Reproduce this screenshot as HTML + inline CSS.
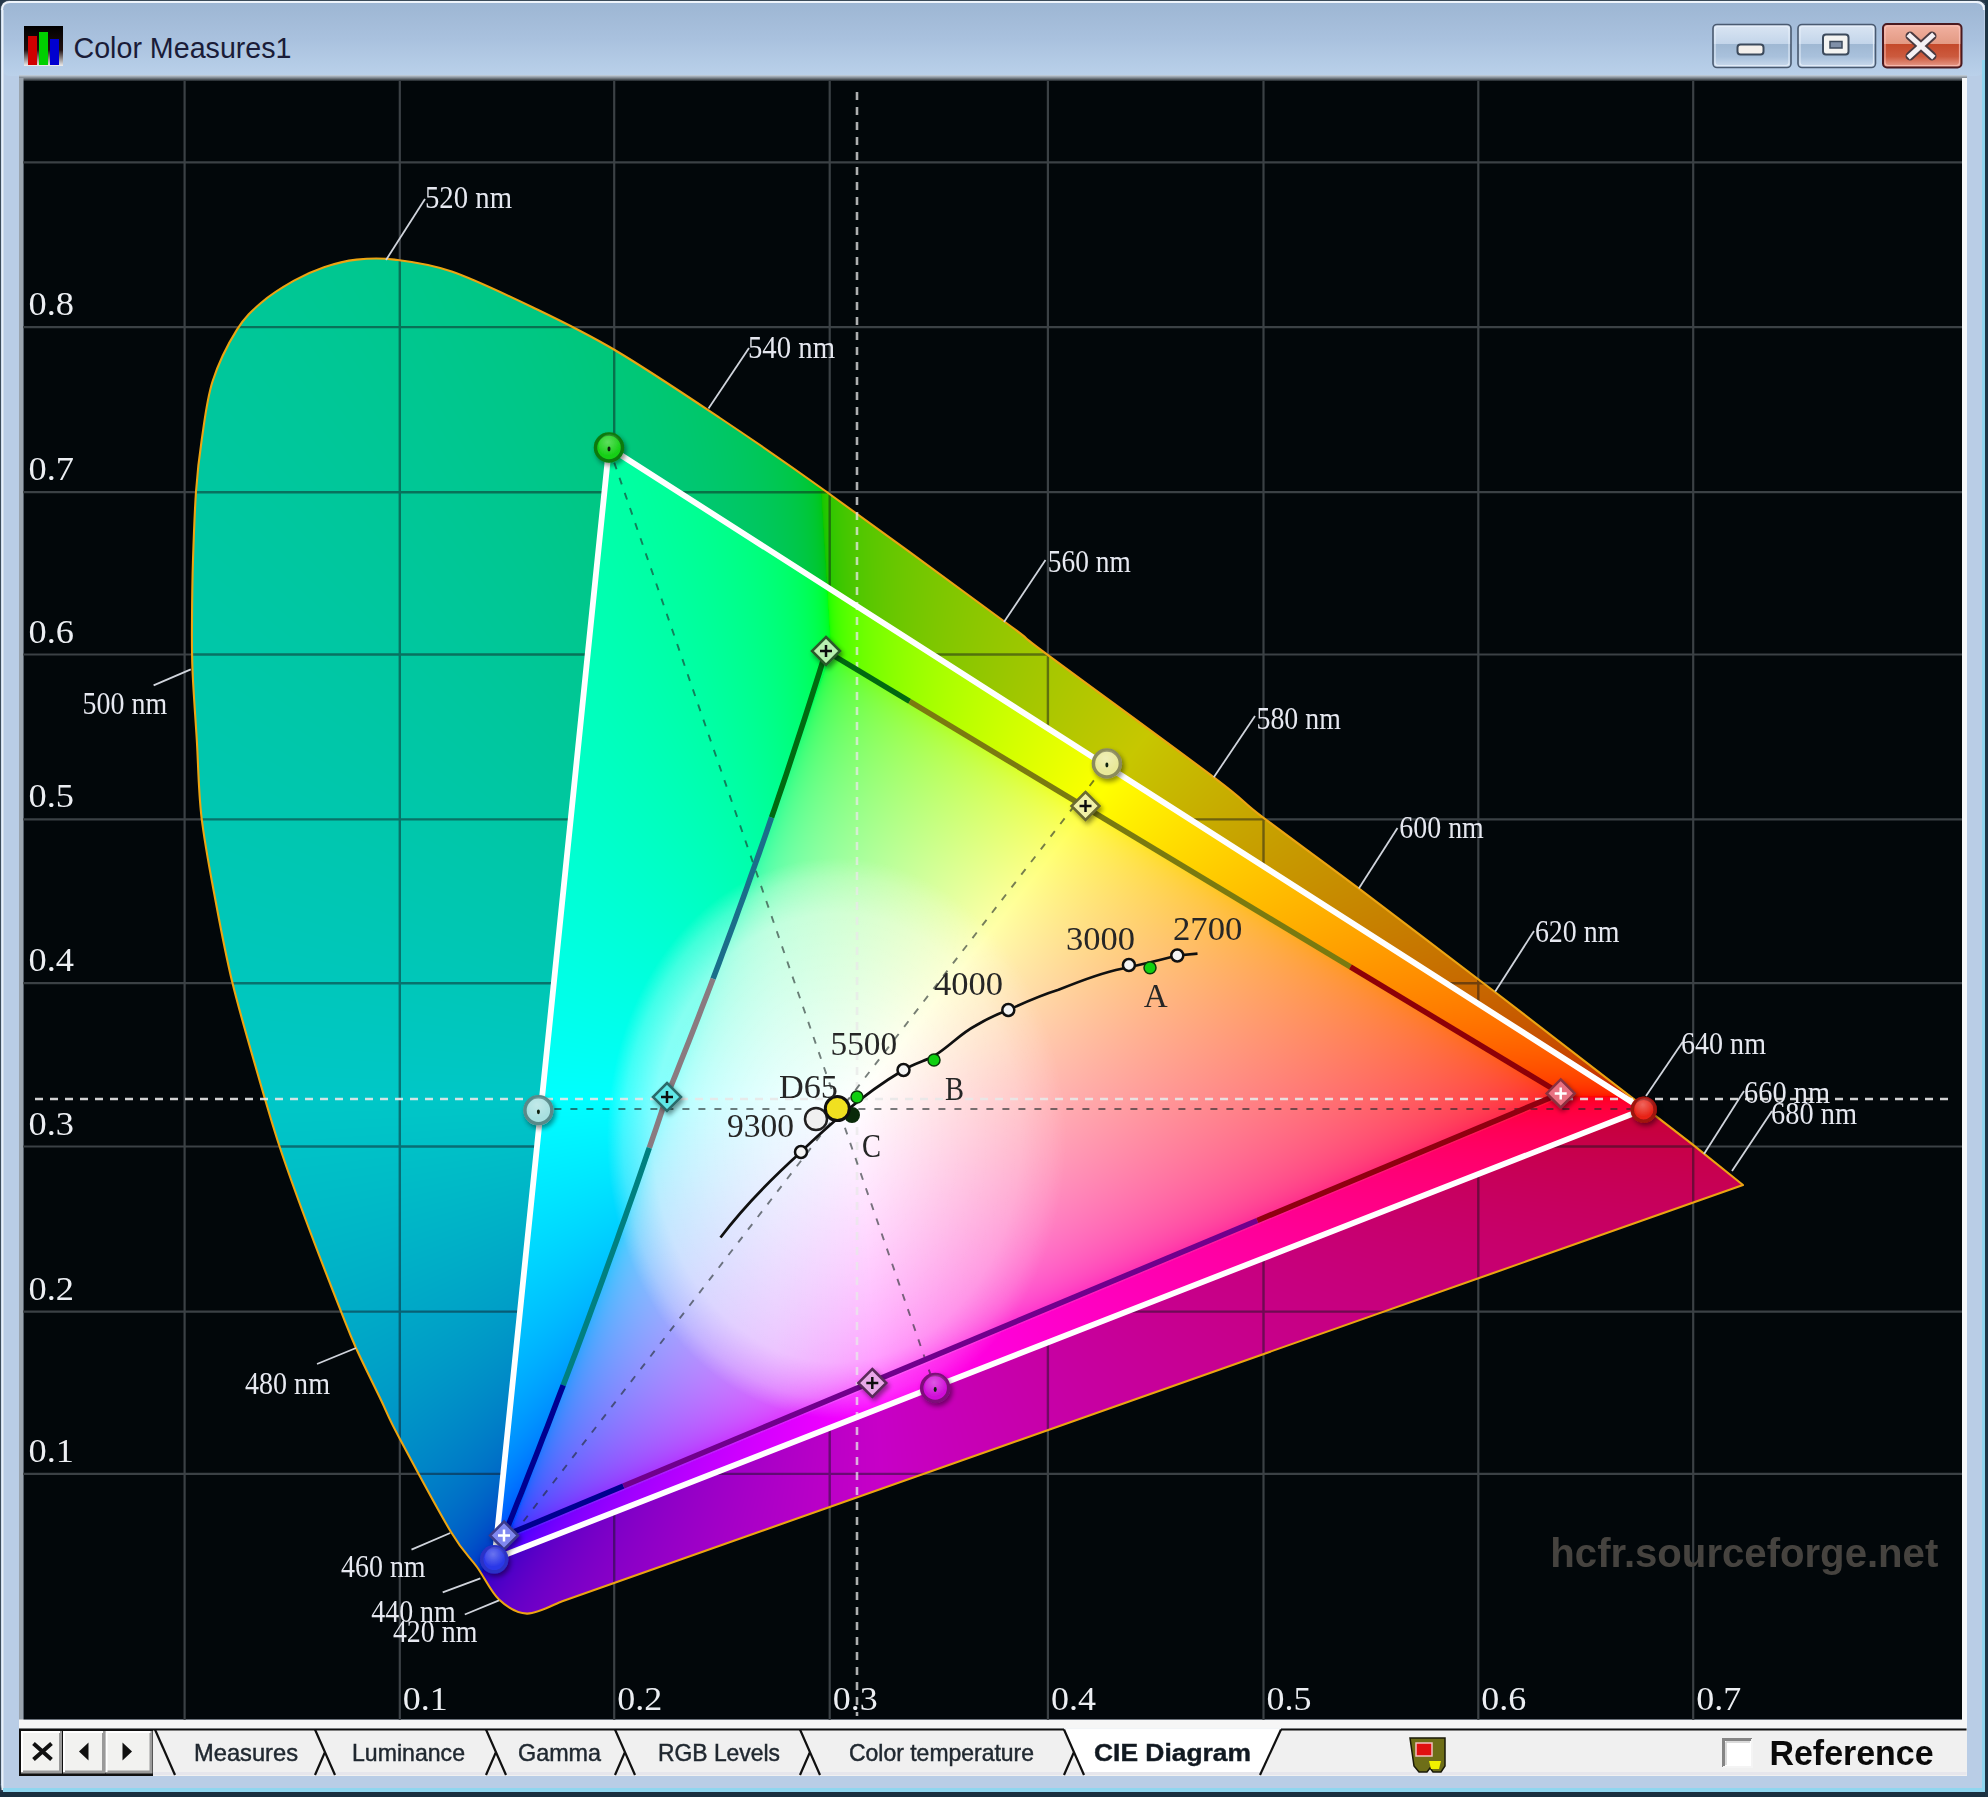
<!DOCTYPE html>
<html><head><meta charset="utf-8">
<style>
html,body{margin:0;padding:0;width:1988px;height:1797px;overflow:hidden;background:#2a3a48;}
#win{position:absolute;left:0;top:0;width:1988px;height:1797px;}
.abs{position:absolute;left:0;top:0;}
svg text{font-family:"Liberation Serif",serif;}
</style></head><body>
<div id="win">
<svg class="abs" width="1988" height="1797" viewBox="0 0 1988 1797">
  <defs>
    <linearGradient id="tb" x1="0" y1="0" x2="0" y2="1">
      <stop offset="0" stop-color="#9db6d3"/><stop offset="0.5" stop-color="#a9c1de"/><stop offset="1" stop-color="#bad1ea"/>
    </linearGradient>
    <linearGradient id="bev" x1="0" y1="0" x2="0" y2="1">
      <stop offset="0" stop-color="#c8d4e0"/><stop offset="0.5" stop-color="#7c848c"/><stop offset="1" stop-color="#20262a"/>
    </linearGradient>
    <linearGradient id="btn" x1="0" y1="0" x2="0" y2="1">
      <stop offset="0" stop-color="#dbe6f3"/><stop offset="0.45" stop-color="#c3d5ea"/><stop offset="0.46" stop-color="#9fb8d3"/><stop offset="0.75" stop-color="#a9c1dc"/><stop offset="1" stop-color="#cddcee"/>
    </linearGradient>
    <linearGradient id="cbtn" x1="0" y1="0" x2="0" y2="1">
      <stop offset="0" stop-color="#f2b2a2"/><stop offset="0.45" stop-color="#e39a84"/><stop offset="0.46" stop-color="#c4492a"/><stop offset="0.75" stop-color="#cc5a3e"/><stop offset="1" stop-color="#e8a090"/>
    </linearGradient>
    <linearGradient id="ico" x1="0" y1="0" x2="0" y2="1">
      <stop offset="0" stop-color="#000"/><stop offset="0.6" stop-color="#201010"/><stop offset="1" stop-color="#f0f0f0"/>
    </linearGradient>
  </defs>
  <!-- window frame -->
  <rect x="0" y="0" width="1988" height="1797" fill="#26384a"/>
  <rect x="0.5" y="0.5" width="1986" height="1793" rx="9" fill="#b9cde6" stroke="#3c4c5a"/>
  <rect x="2" y="2" width="1982" height="74" rx="8" fill="url(#tb)"/>
  <path d="M2,10 Q2,2 10,2 H1976 Q1984,2 1984,10" fill="none" stroke="#eef4fb" stroke-width="2"/>
  <rect x="1.5" y="10" width="2" height="1780" fill="#e8f0f8"/>
  <rect x="1982" y="60" width="3" height="1730" fill="#8fd6ef"/>
  <rect x="3" y="1788" width="1982" height="4" fill="#8fd6ef"/>
  <rect x="0" y="1792" width="1988" height="5" fill="#1a3040"/>
  <rect x="1985" y="0" width="3" height="1797" fill="#1e3444"/>
  <!-- icon -->
  <rect x="24" y="26" width="39" height="40" fill="url(#ico)"/>
  <rect x="28" y="36" width="9" height="29" fill="#d00000"/>
  <rect x="39" y="32" width="9" height="33" fill="#00d000"/>
  <rect x="50" y="39" width="9" height="26" fill="#0000d0"/>
  <text x="73.5" y="57.7" font-family="Liberation Sans" font-size="29.5" fill="#1a1c38" style="font-family:'Liberation Sans'" textLength="218" lengthAdjust="spacingAndGlyphs">Color Measures1</text>
  <!-- buttons -->
  <rect x="1713" y="24.5" width="78" height="43" rx="4" fill="url(#btn)" stroke="#4a5a70" stroke-width="1.6"/>
  <rect x="1715" y="26.5" width="74" height="39" rx="3" fill="none" stroke="#e8f0fa" stroke-width="1.2" opacity="0.8"/>
  <rect x="1737.5" y="44.5" width="26" height="10" rx="3" fill="#f4f0ec" stroke="#3c4a5c" stroke-width="2"/>
  <rect x="1798" y="24.5" width="77.5" height="43" rx="4" fill="url(#btn)" stroke="#4a5a70" stroke-width="1.6"/>
  <rect x="1800" y="26.5" width="73.5" height="39" rx="3" fill="none" stroke="#e8f0fa" stroke-width="1.2" opacity="0.8"/>
  <rect x="1823" y="34.5" width="25.5" height="20" rx="3" fill="#f4f4f2" stroke="#3c4a5c" stroke-width="2"/>
  <rect x="1830" y="41.5" width="12" height="6.5" fill="#8090a8" stroke="#3c4a5c" stroke-width="1.5"/>
  <rect x="1883" y="24" width="78.5" height="43.5" rx="4" fill="url(#cbtn)" stroke="#4a1a20" stroke-width="2"/>
  <rect x="1885" y="26" width="74.5" height="39.5" rx="3" fill="none" stroke="#ffc8c0" stroke-width="1.2" opacity="0.7"/>
  <path d="M1910,36 L1932,56 M1932,36 L1910,56" stroke="#4a3a40" stroke-width="9" stroke-linecap="round"/>
  <path d="M1910,36 L1932,56 M1932,36 L1910,56" stroke="#f4f0f4" stroke-width="5" stroke-linecap="square"/>
  <!-- plot bevel -->
  <rect x="19" y="75" width="1948" height="6" fill="url(#bev)"/>
  <rect x="19" y="78" width="4.5" height="1642" fill="#9aa4ae"/>
  <rect x="1962" y="78" width="5" height="1650" fill="#f6f8fa"/>
  <rect x="19" y="1719.5" width="1948" height="9" fill="#f6f6f6"/>
  <!-- plot -->
  <rect x="23.5" y="81" width="1938.5" height="1638.5" fill="#02070a"/>
  <path d="M184.6,81V1720M399.8,81V1720M614.2,81V1720M829.7,81V1720M1047.9,81V1720M1263.5,81V1720M1478.3,81V1720M1693.2,81V1720M23,162.3H1962M23,327.1H1962M23,492.2H1962M23,654.5H1962M23,819.4H1962M23,983.2H1962M23,1146.5H1962M23,1311.6H1962M23,1473.9H1962" stroke="#3b4145" stroke-width="2.2" fill="none"/>
  <!-- fallback fill -->
  <clipPath id="clL"><path d="M561.6,1601.5 C555.8,1603.5 537.4,1613.9 527.0,1613.6 C516.6,1613.3 507.3,1607.3 499.0,1599.5 C490.7,1591.7 485.0,1578.2 477.0,1567.0 C469.0,1555.8 464.1,1553.8 451.0,1532.0 C437.9,1510.2 410.3,1458.5 398.6,1436.5 C386.9,1414.5 388.1,1414.8 381.0,1400.0 C373.9,1385.2 362.7,1362.9 356.0,1348.0 C349.3,1333.1 349.0,1331.7 340.6,1310.4 C332.2,1289.1 316.0,1247.4 305.8,1220.0 C295.6,1192.6 287.8,1171.5 279.4,1146.0 C271.0,1120.5 263.6,1094.5 255.7,1067.0 C247.8,1039.5 238.7,1008.8 232.0,981.0 C225.3,953.2 220.5,927.3 215.4,900.0 C210.3,872.7 204.6,843.7 201.5,817.0 C198.4,790.3 198.3,764.5 196.8,740.0 C195.3,715.5 193.3,690.0 192.5,670.0 C191.7,650.0 191.9,638.3 192.0,620.0 C192.1,601.7 192.3,581.4 193.0,560.0 C193.7,538.6 194.6,511.8 196.0,491.8 C197.4,471.8 198.9,458.4 201.7,440.0 C204.5,421.6 206.7,399.7 212.6,381.3 C218.5,362.9 228.8,342.7 237.0,329.6 C245.2,316.5 252.0,310.6 261.5,302.5 C271.0,294.4 283.6,286.6 294.0,280.7 C304.4,274.8 313.6,270.7 324.0,267.2 C334.4,263.7 344.8,260.9 356.6,259.6 C368.4,258.3 378.8,257.6 394.6,259.6 C410.5,261.6 428.6,263.5 451.7,271.5 C474.8,279.5 505.8,294.4 533.0,307.5 C560.2,320.6 583.5,331.6 614.7,350.0 C645.9,368.4 685.1,394.7 720.0,418.0 C754.9,441.3 776.5,456.0 824.0,490.0 C871.5,524.0 968.2,594.9 1005.0,622.0 C1041.8,649.1 1010.2,626.9 1045.0,652.8 C1079.8,678.7 1177.7,750.0 1213.8,777.3 C1249.9,804.5 1237.3,797.6 1261.6,816.3 C1285.9,834.9 1320.8,859.9 1359.7,889.2 C1398.6,918.5 1472.5,974.9 1495.0,992.0 L1691.5,1143.7 L1743.0,1185.0 Z"/></clipPath><clipPath id="clT"><path d="M609.0,447.5 L1643.5,1109.5 L494.5,1559.0 Z"/></clipPath><filter id="fbb" x="-5%" y="-5%" width="110%" height="110%"><feGaussianBlur stdDeviation="14"/></filter><g clip-path="url(#clL)"><g filter="url(#fbb)"><rect x="180" y="250" width="40" height="40" fill="#00c798"/><rect x="220" y="250" width="40" height="40" fill="#00c796"/><rect x="260" y="250" width="40" height="40" fill="#00c794"/><rect x="300" y="250" width="40" height="40" fill="#00c792"/><rect x="340" y="250" width="40" height="40" fill="#00c78f"/><rect x="380" y="250" width="40" height="40" fill="#00c78c"/><rect x="420" y="250" width="40" height="40" fill="#00c789"/><rect x="460" y="250" width="40" height="40" fill="#00c786"/><rect x="500" y="250" width="40" height="40" fill="#00c781"/><rect x="540" y="250" width="40" height="40" fill="#00c77d"/><rect x="580" y="250" width="40" height="40" fill="#00c777"/><rect x="620" y="250" width="40" height="40" fill="#00c770"/><rect x="660" y="250" width="40" height="40" fill="#00c768"/><rect x="700" y="250" width="40" height="40" fill="#00c75d"/><rect x="740" y="250" width="40" height="40" fill="#00c74d"/><rect x="780" y="250" width="40" height="40" fill="#00c729"/><rect x="820" y="250" width="40" height="40" fill="#45c700"/><rect x="860" y="250" width="40" height="40" fill="#5bc700"/><rect x="900" y="250" width="40" height="40" fill="#69c700"/><rect x="940" y="250" width="40" height="40" fill="#75c700"/><rect x="980" y="250" width="40" height="40" fill="#7fc700"/><rect x="1020" y="250" width="40" height="40" fill="#87c700"/><rect x="1060" y="250" width="40" height="40" fill="#8fc700"/><rect x="1100" y="250" width="40" height="40" fill="#96c700"/><rect x="1140" y="250" width="40" height="40" fill="#9cc700"/><rect x="1180" y="250" width="40" height="40" fill="#a2c700"/><rect x="1220" y="250" width="40" height="40" fill="#a8c700"/><rect x="1260" y="250" width="40" height="40" fill="#adc700"/><rect x="1300" y="250" width="40" height="40" fill="#b2c700"/><rect x="1340" y="250" width="40" height="40" fill="#b6c700"/><rect x="1380" y="250" width="40" height="40" fill="#bbc700"/><rect x="1420" y="250" width="40" height="40" fill="#bfc700"/><rect x="1460" y="250" width="40" height="40" fill="#c3c700"/><rect x="1500" y="250" width="40" height="40" fill="#c7c700"/><rect x="1540" y="250" width="40" height="40" fill="#c7c300"/><rect x="1580" y="250" width="40" height="40" fill="#c7bf00"/><rect x="1620" y="250" width="40" height="40" fill="#c7bc00"/><rect x="1660" y="250" width="40" height="40" fill="#c7b900"/><rect x="1700" y="250" width="40" height="40" fill="#c7b600"/><rect x="1740" y="250" width="40" height="40" fill="#c7b400"/><rect x="180" y="290" width="40" height="40" fill="#00c79a"/><rect x="220" y="290" width="40" height="40" fill="#00c798"/><rect x="260" y="290" width="40" height="40" fill="#00c796"/><rect x="300" y="290" width="40" height="40" fill="#00c793"/><rect x="340" y="290" width="40" height="40" fill="#00c791"/><rect x="380" y="290" width="40" height="40" fill="#00c78e"/><rect x="420" y="290" width="40" height="40" fill="#00c78b"/><rect x="460" y="290" width="40" height="40" fill="#00c787"/><rect x="500" y="290" width="40" height="40" fill="#00c783"/><rect x="540" y="290" width="40" height="40" fill="#00c77f"/><rect x="580" y="290" width="40" height="40" fill="#00c779"/><rect x="620" y="290" width="40" height="40" fill="#00c772"/><rect x="660" y="290" width="40" height="40" fill="#00c76a"/><rect x="700" y="290" width="40" height="40" fill="#00c75f"/><rect x="740" y="290" width="40" height="40" fill="#00c74f"/><rect x="780" y="290" width="40" height="40" fill="#00c72e"/><rect x="820" y="290" width="40" height="40" fill="#44c700"/><rect x="860" y="290" width="40" height="40" fill="#5bc700"/><rect x="900" y="290" width="40" height="40" fill="#6ac700"/><rect x="940" y="290" width="40" height="40" fill="#76c700"/><rect x="980" y="290" width="40" height="40" fill="#80c700"/><rect x="1020" y="290" width="40" height="40" fill="#89c700"/><rect x="1060" y="290" width="40" height="40" fill="#91c700"/><rect x="1100" y="290" width="40" height="40" fill="#98c700"/><rect x="1140" y="290" width="40" height="40" fill="#9fc700"/><rect x="1180" y="290" width="40" height="40" fill="#a5c700"/><rect x="1220" y="290" width="40" height="40" fill="#aac700"/><rect x="1260" y="290" width="40" height="40" fill="#afc700"/><rect x="1300" y="290" width="40" height="40" fill="#b5c700"/><rect x="1340" y="290" width="40" height="40" fill="#b9c700"/><rect x="1380" y="290" width="40" height="40" fill="#bec700"/><rect x="1420" y="290" width="40" height="40" fill="#c2c700"/><rect x="1460" y="290" width="40" height="40" fill="#c6c700"/><rect x="1500" y="290" width="40" height="40" fill="#c7c300"/><rect x="1540" y="290" width="40" height="40" fill="#c7c000"/><rect x="1580" y="290" width="40" height="40" fill="#c7bc00"/><rect x="1620" y="290" width="40" height="40" fill="#c7b900"/><rect x="1660" y="290" width="40" height="40" fill="#c7b600"/><rect x="1700" y="290" width="40" height="40" fill="#c7b300"/><rect x="1740" y="290" width="40" height="40" fill="#c7b100"/><rect x="180" y="330" width="40" height="40" fill="#00c79b"/><rect x="220" y="330" width="40" height="40" fill="#00c799"/><rect x="260" y="330" width="40" height="40" fill="#00c797"/><rect x="300" y="330" width="40" height="40" fill="#00c795"/><rect x="340" y="330" width="40" height="40" fill="#00c793"/><rect x="380" y="330" width="40" height="40" fill="#00c790"/><rect x="420" y="330" width="40" height="40" fill="#00c78d"/><rect x="460" y="330" width="40" height="40" fill="#00c789"/><rect x="500" y="330" width="40" height="40" fill="#00c785"/><rect x="540" y="330" width="40" height="40" fill="#00c781"/><rect x="580" y="330" width="40" height="40" fill="#00c77b"/><rect x="620" y="330" width="40" height="40" fill="#00c774"/><rect x="660" y="330" width="40" height="40" fill="#00c76c"/><rect x="700" y="330" width="40" height="40" fill="#00c761"/><rect x="740" y="330" width="40" height="40" fill="#00c752"/><rect x="780" y="330" width="40" height="40" fill="#00c733"/><rect x="820" y="330" width="40" height="40" fill="#43c700"/><rect x="860" y="330" width="40" height="40" fill="#5bc700"/><rect x="900" y="330" width="40" height="40" fill="#6bc700"/><rect x="940" y="330" width="40" height="40" fill="#78c700"/><rect x="980" y="330" width="40" height="40" fill="#82c700"/><rect x="1020" y="330" width="40" height="40" fill="#8bc700"/><rect x="1060" y="330" width="40" height="40" fill="#93c700"/><rect x="1100" y="330" width="40" height="40" fill="#9ac700"/><rect x="1140" y="330" width="40" height="40" fill="#a1c700"/><rect x="1180" y="330" width="40" height="40" fill="#a7c700"/><rect x="1220" y="330" width="40" height="40" fill="#adc700"/><rect x="1260" y="330" width="40" height="40" fill="#b2c700"/><rect x="1300" y="330" width="40" height="40" fill="#b7c700"/><rect x="1340" y="330" width="40" height="40" fill="#bcc700"/><rect x="1380" y="330" width="40" height="40" fill="#c1c700"/><rect x="1420" y="330" width="40" height="40" fill="#c5c700"/><rect x="1460" y="330" width="40" height="40" fill="#c7c400"/><rect x="1500" y="330" width="40" height="40" fill="#c7c000"/><rect x="1540" y="330" width="40" height="40" fill="#c7bd00"/><rect x="1580" y="330" width="40" height="40" fill="#c7b900"/><rect x="1620" y="330" width="40" height="40" fill="#c7b600"/><rect x="1660" y="330" width="40" height="40" fill="#c7b300"/><rect x="1700" y="330" width="40" height="40" fill="#c7b000"/><rect x="1740" y="330" width="40" height="40" fill="#c7ae00"/><rect x="180" y="370" width="40" height="40" fill="#00c79d"/><rect x="220" y="370" width="40" height="40" fill="#00c79b"/><rect x="260" y="370" width="40" height="40" fill="#00c799"/><rect x="300" y="370" width="40" height="40" fill="#00c797"/><rect x="340" y="370" width="40" height="40" fill="#00c794"/><rect x="380" y="370" width="40" height="40" fill="#00c792"/><rect x="420" y="370" width="40" height="40" fill="#00c78f"/><rect x="460" y="370" width="40" height="40" fill="#00c78b"/><rect x="500" y="370" width="40" height="40" fill="#00c787"/><rect x="540" y="370" width="40" height="40" fill="#00c783"/><rect x="580" y="370" width="40" height="40" fill="#00c77d"/><rect x="620" y="370" width="40" height="40" fill="#00c777"/><rect x="660" y="370" width="40" height="40" fill="#00c76e"/><rect x="700" y="370" width="40" height="40" fill="#00c764"/><rect x="740" y="370" width="40" height="40" fill="#00c754"/><rect x="780" y="370" width="40" height="40" fill="#00c737"/><rect x="820" y="370" width="40" height="40" fill="#42c700"/><rect x="860" y="370" width="40" height="40" fill="#5cc700"/><rect x="900" y="370" width="40" height="40" fill="#6dc700"/><rect x="940" y="370" width="40" height="40" fill="#79c700"/><rect x="980" y="370" width="40" height="40" fill="#84c700"/><rect x="1020" y="370" width="40" height="40" fill="#8dc700"/><rect x="1060" y="370" width="40" height="40" fill="#95c700"/><rect x="1100" y="370" width="40" height="40" fill="#9dc700"/><rect x="1140" y="370" width="40" height="40" fill="#a4c700"/><rect x="1180" y="370" width="40" height="40" fill="#aac700"/><rect x="1220" y="370" width="40" height="40" fill="#b0c700"/><rect x="1260" y="370" width="40" height="40" fill="#b5c700"/><rect x="1300" y="370" width="40" height="40" fill="#bbc700"/><rect x="1340" y="370" width="40" height="40" fill="#c0c700"/><rect x="1380" y="370" width="40" height="40" fill="#c4c700"/><rect x="1420" y="370" width="40" height="40" fill="#c7c500"/><rect x="1460" y="370" width="40" height="40" fill="#c7c100"/><rect x="1500" y="370" width="40" height="40" fill="#c7bd00"/><rect x="1540" y="370" width="40" height="40" fill="#c7b900"/><rect x="1580" y="370" width="40" height="40" fill="#c7b600"/><rect x="1620" y="370" width="40" height="40" fill="#c7b300"/><rect x="1660" y="370" width="40" height="40" fill="#c7b000"/><rect x="1700" y="370" width="40" height="40" fill="#c7ad00"/><rect x="1740" y="370" width="40" height="40" fill="#c7ab00"/><rect x="180" y="410" width="40" height="40" fill="#00c79f"/><rect x="220" y="410" width="40" height="40" fill="#00c79d"/><rect x="260" y="410" width="40" height="40" fill="#00c79b"/><rect x="300" y="410" width="40" height="40" fill="#00c799"/><rect x="340" y="410" width="40" height="40" fill="#00c796"/><rect x="380" y="410" width="40" height="40" fill="#00c794"/><rect x="420" y="410" width="40" height="40" fill="#00c791"/><rect x="460" y="410" width="40" height="40" fill="#00c78d"/><rect x="500" y="410" width="40" height="40" fill="#00c789"/><rect x="540" y="410" width="40" height="40" fill="#00c785"/><rect x="580" y="410" width="40" height="40" fill="#00c77f"/><rect x="620" y="410" width="40" height="40" fill="#00c779"/><rect x="660" y="410" width="40" height="40" fill="#00c771"/><rect x="700" y="410" width="40" height="40" fill="#00c766"/><rect x="740" y="410" width="40" height="40" fill="#00c757"/><rect x="780" y="410" width="40" height="40" fill="#00c73b"/><rect x="820" y="410" width="40" height="40" fill="#41c700"/><rect x="860" y="410" width="40" height="40" fill="#5dc700"/><rect x="900" y="410" width="40" height="40" fill="#6ec700"/><rect x="940" y="410" width="40" height="40" fill="#7bc700"/><rect x="980" y="410" width="40" height="40" fill="#86c700"/><rect x="1020" y="410" width="40" height="40" fill="#90c700"/><rect x="1060" y="410" width="40" height="40" fill="#98c700"/><rect x="1100" y="410" width="40" height="40" fill="#a0c700"/><rect x="1140" y="410" width="40" height="40" fill="#a7c700"/><rect x="1180" y="410" width="40" height="40" fill="#adc700"/><rect x="1220" y="410" width="40" height="40" fill="#b3c700"/><rect x="1260" y="410" width="40" height="40" fill="#b9c700"/><rect x="1300" y="410" width="40" height="40" fill="#bec700"/><rect x="1340" y="410" width="40" height="40" fill="#c3c700"/><rect x="1380" y="410" width="40" height="40" fill="#c7c600"/><rect x="1420" y="410" width="40" height="40" fill="#c7c100"/><rect x="1460" y="410" width="40" height="40" fill="#c7bd00"/><rect x="1500" y="410" width="40" height="40" fill="#c7b900"/><rect x="1540" y="410" width="40" height="40" fill="#c7b600"/><rect x="1580" y="410" width="40" height="40" fill="#c7b300"/><rect x="1620" y="410" width="40" height="40" fill="#c7af00"/><rect x="1660" y="410" width="40" height="40" fill="#c7ad00"/><rect x="1700" y="410" width="40" height="40" fill="#c7aa00"/><rect x="1740" y="410" width="40" height="40" fill="#c7a700"/><rect x="180" y="450" width="40" height="40" fill="#00c7a0"/><rect x="220" y="450" width="40" height="40" fill="#00c79e"/><rect x="260" y="450" width="40" height="40" fill="#00c79d"/><rect x="300" y="450" width="40" height="40" fill="#00c79a"/><rect x="340" y="450" width="40" height="40" fill="#00c798"/><rect x="380" y="450" width="40" height="40" fill="#00c796"/><rect x="420" y="450" width="40" height="40" fill="#00c793"/><rect x="460" y="450" width="40" height="40" fill="#00c78f"/><rect x="500" y="450" width="40" height="40" fill="#00c78b"/><rect x="540" y="450" width="40" height="40" fill="#00c787"/><rect x="580" y="450" width="40" height="40" fill="#00c782"/><rect x="620" y="450" width="40" height="40" fill="#00c77b"/><rect x="660" y="450" width="40" height="40" fill="#00c773"/><rect x="700" y="450" width="40" height="40" fill="#00c769"/><rect x="740" y="450" width="40" height="40" fill="#00c75a"/><rect x="780" y="450" width="40" height="40" fill="#00c73f"/><rect x="820" y="450" width="40" height="40" fill="#40c700"/><rect x="860" y="450" width="40" height="40" fill="#5dc700"/><rect x="900" y="450" width="40" height="40" fill="#6fc700"/><rect x="940" y="450" width="40" height="40" fill="#7dc700"/><rect x="980" y="450" width="40" height="40" fill="#88c700"/><rect x="1020" y="450" width="40" height="40" fill="#92c700"/><rect x="1060" y="450" width="40" height="40" fill="#9bc700"/><rect x="1100" y="450" width="40" height="40" fill="#a3c700"/><rect x="1140" y="450" width="40" height="40" fill="#aac700"/><rect x="1180" y="450" width="40" height="40" fill="#b0c700"/><rect x="1220" y="450" width="40" height="40" fill="#b7c700"/><rect x="1260" y="450" width="40" height="40" fill="#bcc700"/><rect x="1300" y="450" width="40" height="40" fill="#c2c700"/><rect x="1340" y="450" width="40" height="40" fill="#c7c700"/><rect x="1380" y="450" width="40" height="40" fill="#c7c200"/><rect x="1420" y="450" width="40" height="40" fill="#c7bd00"/><rect x="1460" y="450" width="40" height="40" fill="#c7b900"/><rect x="1500" y="450" width="40" height="40" fill="#c7b600"/><rect x="1540" y="450" width="40" height="40" fill="#c7b200"/><rect x="1580" y="450" width="40" height="40" fill="#c7af00"/><rect x="1620" y="450" width="40" height="40" fill="#c7ac00"/><rect x="1660" y="450" width="40" height="40" fill="#c7a900"/><rect x="1700" y="450" width="40" height="40" fill="#c7a700"/><rect x="1740" y="450" width="40" height="40" fill="#c7a400"/><rect x="180" y="490" width="40" height="40" fill="#00c7a2"/><rect x="220" y="490" width="40" height="40" fill="#00c7a0"/><rect x="260" y="490" width="40" height="40" fill="#00c79e"/><rect x="300" y="490" width="40" height="40" fill="#00c79c"/><rect x="340" y="490" width="40" height="40" fill="#00c79a"/><rect x="380" y="490" width="40" height="40" fill="#00c798"/><rect x="420" y="490" width="40" height="40" fill="#00c795"/><rect x="460" y="490" width="40" height="40" fill="#00c791"/><rect x="500" y="490" width="40" height="40" fill="#00c78e"/><rect x="540" y="490" width="40" height="40" fill="#00c789"/><rect x="580" y="490" width="40" height="40" fill="#00c784"/><rect x="620" y="490" width="40" height="40" fill="#00c77e"/><rect x="660" y="490" width="40" height="40" fill="#00c776"/><rect x="700" y="490" width="40" height="40" fill="#00c76c"/><rect x="740" y="490" width="40" height="40" fill="#00c75d"/><rect x="780" y="490" width="40" height="40" fill="#00c743"/><rect x="820" y="490" width="40" height="40" fill="#3fc700"/><rect x="860" y="490" width="40" height="40" fill="#5ec700"/><rect x="900" y="490" width="40" height="40" fill="#71c700"/><rect x="940" y="490" width="40" height="40" fill="#7fc700"/><rect x="980" y="490" width="40" height="40" fill="#8bc700"/><rect x="1020" y="490" width="40" height="40" fill="#95c700"/><rect x="1060" y="490" width="40" height="40" fill="#9ec700"/><rect x="1100" y="490" width="40" height="40" fill="#a6c700"/><rect x="1140" y="490" width="40" height="40" fill="#adc700"/><rect x="1180" y="490" width="40" height="40" fill="#b4c700"/><rect x="1220" y="490" width="40" height="40" fill="#bac700"/><rect x="1260" y="490" width="40" height="40" fill="#c0c700"/><rect x="1300" y="490" width="40" height="40" fill="#c6c700"/><rect x="1340" y="490" width="40" height="40" fill="#c7c300"/><rect x="1380" y="490" width="40" height="40" fill="#c7be00"/><rect x="1420" y="490" width="40" height="40" fill="#c7b900"/><rect x="1460" y="490" width="40" height="40" fill="#c7b500"/><rect x="1500" y="490" width="40" height="40" fill="#c7b200"/><rect x="1540" y="490" width="40" height="40" fill="#c7ae00"/><rect x="1580" y="490" width="40" height="40" fill="#c7ab00"/><rect x="1620" y="490" width="40" height="40" fill="#c7a800"/><rect x="1660" y="490" width="40" height="40" fill="#c7a600"/><rect x="1700" y="490" width="40" height="40" fill="#c7a300"/><rect x="1740" y="490" width="40" height="40" fill="#c7a000"/><rect x="180" y="530" width="40" height="40" fill="#00c7a4"/><rect x="220" y="530" width="40" height="40" fill="#00c7a2"/><rect x="260" y="530" width="40" height="40" fill="#00c7a0"/><rect x="300" y="530" width="40" height="40" fill="#00c79e"/><rect x="340" y="530" width="40" height="40" fill="#00c79c"/><rect x="380" y="530" width="40" height="40" fill="#00c79a"/><rect x="420" y="530" width="40" height="40" fill="#00c797"/><rect x="460" y="530" width="40" height="40" fill="#00c794"/><rect x="500" y="530" width="40" height="40" fill="#00c790"/><rect x="540" y="530" width="40" height="40" fill="#00c78c"/><rect x="580" y="530" width="40" height="40" fill="#00c787"/><rect x="620" y="530" width="40" height="40" fill="#00c781"/><rect x="660" y="530" width="40" height="40" fill="#00c779"/><rect x="700" y="530" width="40" height="40" fill="#00c76f"/><rect x="740" y="530" width="40" height="40" fill="#00c760"/><rect x="780" y="530" width="40" height="40" fill="#00c747"/><rect x="820" y="530" width="40" height="40" fill="#3dc700"/><rect x="860" y="530" width="40" height="40" fill="#5fc700"/><rect x="900" y="530" width="40" height="40" fill="#73c700"/><rect x="940" y="530" width="40" height="40" fill="#81c700"/><rect x="980" y="530" width="40" height="40" fill="#8dc700"/><rect x="1020" y="530" width="40" height="40" fill="#98c700"/><rect x="1060" y="530" width="40" height="40" fill="#a1c700"/><rect x="1100" y="530" width="40" height="40" fill="#a9c700"/><rect x="1140" y="530" width="40" height="40" fill="#b1c700"/><rect x="1180" y="530" width="40" height="40" fill="#b8c700"/><rect x="1220" y="530" width="40" height="40" fill="#bfc700"/><rect x="1260" y="530" width="40" height="40" fill="#c5c700"/><rect x="1300" y="530" width="40" height="40" fill="#c7c300"/><rect x="1340" y="530" width="40" height="40" fill="#c7be00"/><rect x="1380" y="530" width="40" height="40" fill="#c7b900"/><rect x="1420" y="530" width="40" height="40" fill="#c7b500"/><rect x="1460" y="530" width="40" height="40" fill="#c7b100"/><rect x="1500" y="530" width="40" height="40" fill="#c7ae00"/><rect x="1540" y="530" width="40" height="40" fill="#c7aa00"/><rect x="1580" y="530" width="40" height="40" fill="#c7a700"/><rect x="1620" y="530" width="40" height="40" fill="#c7a400"/><rect x="1660" y="530" width="40" height="40" fill="#c7a200"/><rect x="1700" y="530" width="40" height="40" fill="#c79f00"/><rect x="1740" y="530" width="40" height="40" fill="#c79d00"/><rect x="180" y="570" width="40" height="40" fill="#00c7a6"/><rect x="220" y="570" width="40" height="40" fill="#00c7a4"/><rect x="260" y="570" width="40" height="40" fill="#00c7a2"/><rect x="300" y="570" width="40" height="40" fill="#00c7a1"/><rect x="340" y="570" width="40" height="40" fill="#00c79e"/><rect x="380" y="570" width="40" height="40" fill="#00c79c"/><rect x="420" y="570" width="40" height="40" fill="#00c799"/><rect x="460" y="570" width="40" height="40" fill="#00c796"/><rect x="500" y="570" width="40" height="40" fill="#00c793"/><rect x="540" y="570" width="40" height="40" fill="#00c78e"/><rect x="580" y="570" width="40" height="40" fill="#00c789"/><rect x="620" y="570" width="40" height="40" fill="#00c783"/><rect x="660" y="570" width="40" height="40" fill="#00c77c"/><rect x="700" y="570" width="40" height="40" fill="#00c772"/><rect x="740" y="570" width="40" height="40" fill="#00c763"/><rect x="780" y="570" width="40" height="40" fill="#00c74b"/><rect x="820" y="570" width="40" height="40" fill="#3bc700"/><rect x="860" y="570" width="40" height="40" fill="#60c700"/><rect x="900" y="570" width="40" height="40" fill="#75c700"/><rect x="940" y="570" width="40" height="40" fill="#84c700"/><rect x="980" y="570" width="40" height="40" fill="#91c700"/><rect x="1020" y="570" width="40" height="40" fill="#9bc700"/><rect x="1060" y="570" width="40" height="40" fill="#a5c700"/><rect x="1100" y="570" width="40" height="40" fill="#adc700"/><rect x="1140" y="570" width="40" height="40" fill="#b5c700"/><rect x="1180" y="570" width="40" height="40" fill="#bcc700"/><rect x="1220" y="570" width="40" height="40" fill="#c3c700"/><rect x="1260" y="570" width="40" height="40" fill="#c7c400"/><rect x="1300" y="570" width="40" height="40" fill="#c7bf00"/><rect x="1340" y="570" width="40" height="40" fill="#c7ba00"/><rect x="1380" y="570" width="40" height="40" fill="#c7b500"/><rect x="1420" y="570" width="40" height="40" fill="#c7b100"/><rect x="1460" y="570" width="40" height="40" fill="#c7ad00"/><rect x="1500" y="570" width="40" height="40" fill="#c7a900"/><rect x="1540" y="570" width="40" height="40" fill="#c7a600"/><rect x="1580" y="570" width="40" height="40" fill="#c7a300"/><rect x="1620" y="570" width="40" height="40" fill="#c7a000"/><rect x="1660" y="570" width="40" height="40" fill="#c79e00"/><rect x="1700" y="570" width="40" height="40" fill="#c79b00"/><rect x="1740" y="570" width="40" height="40" fill="#c79900"/><rect x="180" y="610" width="40" height="40" fill="#00c7a8"/><rect x="220" y="610" width="40" height="40" fill="#00c7a6"/><rect x="260" y="610" width="40" height="40" fill="#00c7a5"/><rect x="300" y="610" width="40" height="40" fill="#00c7a3"/><rect x="340" y="610" width="40" height="40" fill="#00c7a1"/><rect x="380" y="610" width="40" height="40" fill="#00c79e"/><rect x="420" y="610" width="40" height="40" fill="#00c79c"/><rect x="460" y="610" width="40" height="40" fill="#00c799"/><rect x="500" y="610" width="40" height="40" fill="#00c795"/><rect x="540" y="610" width="40" height="40" fill="#00c791"/><rect x="580" y="610" width="40" height="40" fill="#00c78c"/><rect x="620" y="610" width="40" height="40" fill="#00c786"/><rect x="660" y="610" width="40" height="40" fill="#00c77f"/><rect x="700" y="610" width="40" height="40" fill="#00c775"/><rect x="740" y="610" width="40" height="40" fill="#00c767"/><rect x="780" y="610" width="40" height="40" fill="#00c74f"/><rect x="820" y="610" width="40" height="40" fill="#38c700"/><rect x="860" y="610" width="40" height="40" fill="#61c700"/><rect x="900" y="610" width="40" height="40" fill="#77c700"/><rect x="940" y="610" width="40" height="40" fill="#87c700"/><rect x="980" y="610" width="40" height="40" fill="#94c700"/><rect x="1020" y="610" width="40" height="40" fill="#9fc700"/><rect x="1060" y="610" width="40" height="40" fill="#a9c700"/><rect x="1100" y="610" width="40" height="40" fill="#b2c700"/><rect x="1140" y="610" width="40" height="40" fill="#bac700"/><rect x="1180" y="610" width="40" height="40" fill="#c1c700"/><rect x="1220" y="610" width="40" height="40" fill="#c7c500"/><rect x="1260" y="610" width="40" height="40" fill="#c7bf00"/><rect x="1300" y="610" width="40" height="40" fill="#c7ba00"/><rect x="1340" y="610" width="40" height="40" fill="#c7b500"/><rect x="1380" y="610" width="40" height="40" fill="#c7b000"/><rect x="1420" y="610" width="40" height="40" fill="#c7ac00"/><rect x="1460" y="610" width="40" height="40" fill="#c7a800"/><rect x="1500" y="610" width="40" height="40" fill="#c7a500"/><rect x="1540" y="610" width="40" height="40" fill="#c7a200"/><rect x="1580" y="610" width="40" height="40" fill="#c79f00"/><rect x="1620" y="610" width="40" height="40" fill="#c79c00"/><rect x="1660" y="610" width="40" height="40" fill="#c79900"/><rect x="1700" y="610" width="40" height="40" fill="#c79700"/><rect x="1740" y="610" width="40" height="40" fill="#c79500"/><rect x="180" y="650" width="40" height="40" fill="#00c7aa"/><rect x="220" y="650" width="40" height="40" fill="#00c7a8"/><rect x="260" y="650" width="40" height="40" fill="#00c7a7"/><rect x="300" y="650" width="40" height="40" fill="#00c7a5"/><rect x="340" y="650" width="40" height="40" fill="#00c7a3"/><rect x="380" y="650" width="40" height="40" fill="#00c7a1"/><rect x="420" y="650" width="40" height="40" fill="#00c79e"/><rect x="460" y="650" width="40" height="40" fill="#00c79b"/><rect x="500" y="650" width="40" height="40" fill="#00c798"/><rect x="540" y="650" width="40" height="40" fill="#00c794"/><rect x="580" y="650" width="40" height="40" fill="#00c78f"/><rect x="620" y="650" width="40" height="40" fill="#00c78a"/><rect x="660" y="650" width="40" height="40" fill="#00c782"/><rect x="700" y="650" width="40" height="40" fill="#00c778"/><rect x="740" y="650" width="40" height="40" fill="#00c76b"/><rect x="780" y="650" width="40" height="40" fill="#00c753"/><rect x="820" y="650" width="40" height="40" fill="#3cc729"/><rect x="860" y="650" width="40" height="40" fill="#62c700"/><rect x="900" y="650" width="40" height="40" fill="#79c700"/><rect x="940" y="650" width="40" height="40" fill="#8ac700"/><rect x="980" y="650" width="40" height="40" fill="#98c700"/><rect x="1020" y="650" width="40" height="40" fill="#a3c700"/><rect x="1060" y="650" width="40" height="40" fill="#aec700"/><rect x="1100" y="650" width="40" height="40" fill="#b7c700"/><rect x="1140" y="650" width="40" height="40" fill="#bfc700"/><rect x="1180" y="650" width="40" height="40" fill="#c7c700"/><rect x="1220" y="650" width="40" height="40" fill="#c7c000"/><rect x="1260" y="650" width="40" height="40" fill="#c7ba00"/><rect x="1300" y="650" width="40" height="40" fill="#c7b400"/><rect x="1340" y="650" width="40" height="40" fill="#c7af00"/><rect x="1380" y="650" width="40" height="40" fill="#c7ab00"/><rect x="1420" y="650" width="40" height="40" fill="#c7a700"/><rect x="1460" y="650" width="40" height="40" fill="#c7a300"/><rect x="1500" y="650" width="40" height="40" fill="#c7a000"/><rect x="1540" y="650" width="40" height="40" fill="#c79d00"/><rect x="1580" y="650" width="40" height="40" fill="#c79a00"/><rect x="1620" y="650" width="40" height="40" fill="#c79700"/><rect x="1660" y="650" width="40" height="40" fill="#c79500"/><rect x="1700" y="650" width="40" height="40" fill="#c79300"/><rect x="1740" y="650" width="40" height="40" fill="#c79000"/><rect x="180" y="690" width="40" height="40" fill="#00c7ac"/><rect x="220" y="690" width="40" height="40" fill="#00c7ab"/><rect x="260" y="690" width="40" height="40" fill="#00c7a9"/><rect x="300" y="690" width="40" height="40" fill="#00c7a7"/><rect x="340" y="690" width="40" height="40" fill="#00c7a6"/><rect x="380" y="690" width="40" height="40" fill="#00c7a3"/><rect x="420" y="690" width="40" height="40" fill="#00c7a1"/><rect x="460" y="690" width="40" height="40" fill="#00c79e"/><rect x="500" y="690" width="40" height="40" fill="#00c79b"/><rect x="540" y="690" width="40" height="40" fill="#00c797"/><rect x="580" y="690" width="40" height="40" fill="#00c793"/><rect x="620" y="690" width="40" height="40" fill="#00c78d"/><rect x="660" y="690" width="40" height="40" fill="#00c786"/><rect x="700" y="690" width="40" height="40" fill="#00c77c"/><rect x="740" y="690" width="40" height="40" fill="#00c76f"/><rect x="780" y="690" width="40" height="40" fill="#00c758"/><rect x="820" y="690" width="40" height="40" fill="#4ec747"/><rect x="860" y="690" width="40" height="40" fill="#6ac739"/><rect x="900" y="690" width="40" height="40" fill="#7dc71a"/><rect x="940" y="690" width="40" height="40" fill="#8ec700"/><rect x="980" y="690" width="40" height="40" fill="#9cc700"/><rect x="1020" y="690" width="40" height="40" fill="#a8c700"/><rect x="1060" y="690" width="40" height="40" fill="#b3c700"/><rect x="1100" y="690" width="40" height="40" fill="#bdc700"/><rect x="1140" y="690" width="40" height="40" fill="#c5c700"/><rect x="1180" y="690" width="40" height="40" fill="#c7c100"/><rect x="1220" y="690" width="40" height="40" fill="#c7ba00"/><rect x="1260" y="690" width="40" height="40" fill="#c7b400"/><rect x="1300" y="690" width="40" height="40" fill="#c7af00"/><rect x="1340" y="690" width="40" height="40" fill="#c7aa00"/><rect x="1380" y="690" width="40" height="40" fill="#c7a600"/><rect x="1420" y="690" width="40" height="40" fill="#c7a200"/><rect x="1460" y="690" width="40" height="40" fill="#c79e00"/><rect x="1500" y="690" width="40" height="40" fill="#c79b00"/><rect x="1540" y="690" width="40" height="40" fill="#c79800"/><rect x="1580" y="690" width="40" height="40" fill="#c79500"/><rect x="1620" y="690" width="40" height="40" fill="#c79200"/><rect x="1660" y="690" width="40" height="40" fill="#c79000"/><rect x="1700" y="690" width="40" height="40" fill="#c78e00"/><rect x="1740" y="690" width="40" height="40" fill="#c78c00"/><rect x="180" y="730" width="40" height="40" fill="#00c7ae"/><rect x="220" y="730" width="40" height="40" fill="#00c7ad"/><rect x="260" y="730" width="40" height="40" fill="#00c7ab"/><rect x="300" y="730" width="40" height="40" fill="#00c7aa"/><rect x="340" y="730" width="40" height="40" fill="#00c7a8"/><rect x="380" y="730" width="40" height="40" fill="#00c7a6"/><rect x="420" y="730" width="40" height="40" fill="#00c7a4"/><rect x="460" y="730" width="40" height="40" fill="#00c7a1"/><rect x="500" y="730" width="40" height="40" fill="#00c79e"/><rect x="540" y="730" width="40" height="40" fill="#00c79a"/><rect x="580" y="730" width="40" height="40" fill="#00c796"/><rect x="620" y="730" width="40" height="40" fill="#00c791"/><rect x="660" y="730" width="40" height="40" fill="#00c78a"/><rect x="700" y="730" width="40" height="40" fill="#00c780"/><rect x="740" y="730" width="40" height="40" fill="#00c773"/><rect x="780" y="730" width="40" height="40" fill="#27c75f"/><rect x="820" y="730" width="40" height="40" fill="#5bc759"/><rect x="860" y="730" width="40" height="40" fill="#73c750"/><rect x="900" y="730" width="40" height="40" fill="#85c746"/><rect x="940" y="730" width="40" height="40" fill="#94c735"/><rect x="980" y="730" width="40" height="40" fill="#a1c700"/><rect x="1020" y="730" width="40" height="40" fill="#aec700"/><rect x="1060" y="730" width="40" height="40" fill="#b9c700"/><rect x="1100" y="730" width="40" height="40" fill="#c3c700"/><rect x="1140" y="730" width="40" height="40" fill="#c7c200"/><rect x="1180" y="730" width="40" height="40" fill="#c7ba00"/><rect x="1220" y="730" width="40" height="40" fill="#c7b300"/><rect x="1260" y="730" width="40" height="40" fill="#c7ae00"/><rect x="1300" y="730" width="40" height="40" fill="#c7a800"/><rect x="1340" y="730" width="40" height="40" fill="#c7a400"/><rect x="1380" y="730" width="40" height="40" fill="#c7a000"/><rect x="1420" y="730" width="40" height="40" fill="#c79c00"/><rect x="1460" y="730" width="40" height="40" fill="#c79900"/><rect x="1500" y="730" width="40" height="40" fill="#c79500"/><rect x="1540" y="730" width="40" height="40" fill="#c79200"/><rect x="1580" y="730" width="40" height="40" fill="#c79000"/><rect x="1620" y="730" width="40" height="40" fill="#c78d00"/><rect x="1660" y="730" width="40" height="40" fill="#c78b00"/><rect x="1700" y="730" width="40" height="40" fill="#c78900"/><rect x="1740" y="730" width="40" height="40" fill="#c78700"/><rect x="180" y="770" width="40" height="40" fill="#00c7b0"/><rect x="220" y="770" width="40" height="40" fill="#00c7af"/><rect x="260" y="770" width="40" height="40" fill="#00c7ae"/><rect x="300" y="770" width="40" height="40" fill="#00c7ad"/><rect x="340" y="770" width="40" height="40" fill="#00c7ab"/><rect x="380" y="770" width="40" height="40" fill="#00c7a9"/><rect x="420" y="770" width="40" height="40" fill="#00c7a7"/><rect x="460" y="770" width="40" height="40" fill="#00c7a4"/><rect x="500" y="770" width="40" height="40" fill="#00c7a1"/><rect x="540" y="770" width="40" height="40" fill="#00c79e"/><rect x="580" y="770" width="40" height="40" fill="#00c79a"/><rect x="620" y="770" width="40" height="40" fill="#00c795"/><rect x="660" y="770" width="40" height="40" fill="#00c78e"/><rect x="700" y="770" width="40" height="40" fill="#00c785"/><rect x="740" y="770" width="40" height="40" fill="#00c778"/><rect x="780" y="770" width="40" height="40" fill="#45c76c"/><rect x="820" y="770" width="40" height="40" fill="#67c767"/><rect x="860" y="770" width="40" height="40" fill="#7dc761"/><rect x="900" y="770" width="40" height="40" fill="#8dc759"/><rect x="940" y="770" width="40" height="40" fill="#9cc750"/><rect x="980" y="770" width="40" height="40" fill="#a9c743"/><rect x="1020" y="770" width="40" height="40" fill="#b5c72d"/><rect x="1060" y="770" width="40" height="40" fill="#c1c700"/><rect x="1100" y="770" width="40" height="40" fill="#c7c300"/><rect x="1140" y="770" width="40" height="40" fill="#c7ba00"/><rect x="1180" y="770" width="40" height="40" fill="#c7b300"/><rect x="1220" y="770" width="40" height="40" fill="#c7ac00"/><rect x="1260" y="770" width="40" height="40" fill="#c7a700"/><rect x="1300" y="770" width="40" height="40" fill="#c7a200"/><rect x="1340" y="770" width="40" height="40" fill="#c79d00"/><rect x="1380" y="770" width="40" height="40" fill="#c79900"/><rect x="1420" y="770" width="40" height="40" fill="#c79600"/><rect x="1460" y="770" width="40" height="40" fill="#c79200"/><rect x="1500" y="770" width="40" height="40" fill="#c78f00"/><rect x="1540" y="770" width="40" height="40" fill="#c78d00"/><rect x="1580" y="770" width="40" height="40" fill="#c78a00"/><rect x="1620" y="770" width="40" height="40" fill="#c78800"/><rect x="1660" y="770" width="40" height="40" fill="#c78500"/><rect x="1700" y="770" width="40" height="40" fill="#c78300"/><rect x="1740" y="770" width="40" height="40" fill="#c78100"/><rect x="180" y="810" width="40" height="40" fill="#00c7b3"/><rect x="220" y="810" width="40" height="40" fill="#00c7b2"/><rect x="260" y="810" width="40" height="40" fill="#00c7b1"/><rect x="300" y="810" width="40" height="40" fill="#00c7af"/><rect x="340" y="810" width="40" height="40" fill="#00c7ae"/><rect x="380" y="810" width="40" height="40" fill="#00c7ac"/><rect x="420" y="810" width="40" height="40" fill="#00c7aa"/><rect x="460" y="810" width="40" height="40" fill="#00c7a8"/><rect x="500" y="810" width="40" height="40" fill="#00c7a5"/><rect x="540" y="810" width="40" height="40" fill="#00c7a2"/><rect x="580" y="810" width="40" height="40" fill="#00c79e"/><rect x="620" y="810" width="40" height="40" fill="#00c799"/><rect x="660" y="810" width="40" height="40" fill="#00c793"/><rect x="700" y="810" width="40" height="40" fill="#00c78a"/><rect x="740" y="810" width="40" height="40" fill="#00c77d"/><rect x="780" y="810" width="40" height="40" fill="#56c778"/><rect x="820" y="810" width="40" height="40" fill="#72c773"/><rect x="860" y="810" width="40" height="40" fill="#86c76f"/><rect x="900" y="810" width="40" height="40" fill="#96c769"/><rect x="940" y="810" width="40" height="40" fill="#a4c762"/><rect x="980" y="810" width="40" height="40" fill="#b1c75a"/><rect x="1020" y="810" width="40" height="40" fill="#bec750"/><rect x="1060" y="810" width="40" height="40" fill="#c7c540"/><rect x="1100" y="810" width="40" height="40" fill="#c7ba18"/><rect x="1140" y="810" width="40" height="40" fill="#c7b200"/><rect x="1180" y="810" width="40" height="40" fill="#c7ab00"/><rect x="1220" y="810" width="40" height="40" fill="#c7a500"/><rect x="1260" y="810" width="40" height="40" fill="#c79f00"/><rect x="1300" y="810" width="40" height="40" fill="#c79a00"/><rect x="1340" y="810" width="40" height="40" fill="#c79600"/><rect x="1380" y="810" width="40" height="40" fill="#c79200"/><rect x="1420" y="810" width="40" height="40" fill="#c78f00"/><rect x="1460" y="810" width="40" height="40" fill="#c78c00"/><rect x="1500" y="810" width="40" height="40" fill="#c78900"/><rect x="1540" y="810" width="40" height="40" fill="#c78600"/><rect x="1580" y="810" width="40" height="40" fill="#c78400"/><rect x="1620" y="810" width="40" height="40" fill="#c78100"/><rect x="1660" y="810" width="40" height="40" fill="#c77f00"/><rect x="1700" y="810" width="40" height="40" fill="#c77d00"/><rect x="1740" y="810" width="40" height="40" fill="#c77b00"/><rect x="180" y="850" width="40" height="40" fill="#00c7b5"/><rect x="220" y="850" width="40" height="40" fill="#00c7b4"/><rect x="260" y="850" width="40" height="40" fill="#00c7b3"/><rect x="300" y="850" width="40" height="40" fill="#00c7b2"/><rect x="340" y="850" width="40" height="40" fill="#00c7b1"/><rect x="380" y="850" width="40" height="40" fill="#00c7af"/><rect x="420" y="850" width="40" height="40" fill="#00c7ad"/><rect x="460" y="850" width="40" height="40" fill="#00c7ab"/><rect x="500" y="850" width="40" height="40" fill="#00c7a9"/><rect x="540" y="850" width="40" height="40" fill="#00c7a6"/><rect x="580" y="850" width="40" height="40" fill="#00c7a2"/><rect x="620" y="850" width="40" height="40" fill="#00c79e"/><rect x="660" y="850" width="40" height="40" fill="#00c798"/><rect x="700" y="850" width="40" height="40" fill="#00c790"/><rect x="740" y="850" width="40" height="40" fill="#35c786"/><rect x="780" y="850" width="40" height="40" fill="#64c783"/><rect x="820" y="850" width="40" height="40" fill="#7cc77f"/><rect x="860" y="850" width="40" height="40" fill="#8fc77b"/><rect x="900" y="850" width="40" height="40" fill="#9fc777"/><rect x="940" y="850" width="40" height="40" fill="#adc772"/><rect x="980" y="850" width="40" height="40" fill="#bac76c"/><rect x="1020" y="850" width="40" height="40" fill="#c7c765"/><rect x="1060" y="850" width="40" height="40" fill="#c7bc56"/><rect x="1100" y="850" width="40" height="40" fill="#c7b247"/><rect x="1140" y="850" width="40" height="40" fill="#c7a933"/><rect x="1180" y="850" width="40" height="40" fill="#c7a200"/><rect x="1220" y="850" width="40" height="40" fill="#c79c00"/><rect x="1260" y="850" width="40" height="40" fill="#c79700"/><rect x="1300" y="850" width="40" height="40" fill="#c79200"/><rect x="1340" y="850" width="40" height="40" fill="#c78e00"/><rect x="1380" y="850" width="40" height="40" fill="#c78b00"/><rect x="1420" y="850" width="40" height="40" fill="#c78700"/><rect x="1460" y="850" width="40" height="40" fill="#c78400"/><rect x="1500" y="850" width="40" height="40" fill="#c78200"/><rect x="1540" y="850" width="40" height="40" fill="#c77f00"/><rect x="1580" y="850" width="40" height="40" fill="#c77d00"/><rect x="1620" y="850" width="40" height="40" fill="#c77a00"/><rect x="1660" y="850" width="40" height="40" fill="#c77800"/><rect x="1700" y="850" width="40" height="40" fill="#c77600"/><rect x="1740" y="850" width="40" height="40" fill="#c77500"/><rect x="180" y="890" width="40" height="40" fill="#00c7b8"/><rect x="220" y="890" width="40" height="40" fill="#00c7b7"/><rect x="260" y="890" width="40" height="40" fill="#00c7b6"/><rect x="300" y="890" width="40" height="40" fill="#00c7b5"/><rect x="340" y="890" width="40" height="40" fill="#00c7b4"/><rect x="380" y="890" width="40" height="40" fill="#00c7b3"/><rect x="420" y="890" width="40" height="40" fill="#00c7b1"/><rect x="460" y="890" width="40" height="40" fill="#00c7af"/><rect x="500" y="890" width="40" height="40" fill="#00c7ad"/><rect x="540" y="890" width="40" height="40" fill="#00c7aa"/><rect x="580" y="890" width="40" height="40" fill="#00c7a7"/><rect x="620" y="890" width="40" height="40" fill="#00c7a3"/><rect x="660" y="890" width="40" height="40" fill="#00c79d"/><rect x="700" y="890" width="40" height="40" fill="#00c796"/><rect x="740" y="890" width="40" height="40" fill="#4ec790"/><rect x="780" y="890" width="40" height="40" fill="#70c78e"/><rect x="820" y="890" width="40" height="40" fill="#87c78b"/><rect x="860" y="890" width="40" height="40" fill="#99c788"/><rect x="900" y="890" width="40" height="40" fill="#a9c784"/><rect x="940" y="890" width="40" height="40" fill="#b7c780"/><rect x="980" y="890" width="40" height="40" fill="#c4c77b"/><rect x="1020" y="890" width="40" height="40" fill="#c7bd70"/><rect x="1060" y="890" width="40" height="40" fill="#c7b364"/><rect x="1100" y="890" width="40" height="40" fill="#c7a958"/><rect x="1140" y="890" width="40" height="40" fill="#c7a14c"/><rect x="1180" y="890" width="40" height="40" fill="#c79a3d"/><rect x="1220" y="890" width="40" height="40" fill="#c79326"/><rect x="1260" y="890" width="40" height="40" fill="#c78d00"/><rect x="1300" y="890" width="40" height="40" fill="#c78900"/><rect x="1340" y="890" width="40" height="40" fill="#c78500"/><rect x="1380" y="890" width="40" height="40" fill="#c78200"/><rect x="1420" y="890" width="40" height="40" fill="#c77f00"/><rect x="1460" y="890" width="40" height="40" fill="#c77c00"/><rect x="1500" y="890" width="40" height="40" fill="#c77900"/><rect x="1540" y="890" width="40" height="40" fill="#c77700"/><rect x="1580" y="890" width="40" height="40" fill="#c77500"/><rect x="1620" y="890" width="40" height="40" fill="#c77300"/><rect x="1660" y="890" width="40" height="40" fill="#c77100"/><rect x="1700" y="890" width="40" height="40" fill="#c76f00"/><rect x="1740" y="890" width="40" height="40" fill="#c76d00"/><rect x="180" y="930" width="40" height="40" fill="#00c7bb"/><rect x="220" y="930" width="40" height="40" fill="#00c7ba"/><rect x="260" y="930" width="40" height="40" fill="#00c7b9"/><rect x="300" y="930" width="40" height="40" fill="#00c7b9"/><rect x="340" y="930" width="40" height="40" fill="#00c7b8"/><rect x="380" y="930" width="40" height="40" fill="#00c7b6"/><rect x="420" y="930" width="40" height="40" fill="#00c7b5"/><rect x="460" y="930" width="40" height="40" fill="#00c7b4"/><rect x="500" y="930" width="40" height="40" fill="#00c7b2"/><rect x="540" y="930" width="40" height="40" fill="#00c7af"/><rect x="580" y="930" width="40" height="40" fill="#00c7ac"/><rect x="620" y="930" width="40" height="40" fill="#00c7a9"/><rect x="660" y="930" width="40" height="40" fill="#00c7a4"/><rect x="700" y="930" width="40" height="40" fill="#00c79d"/><rect x="740" y="930" width="40" height="40" fill="#5fc79b"/><rect x="780" y="930" width="40" height="40" fill="#7cc799"/><rect x="820" y="930" width="40" height="40" fill="#91c796"/><rect x="860" y="930" width="40" height="40" fill="#a3c794"/><rect x="900" y="930" width="40" height="40" fill="#b3c791"/><rect x="940" y="930" width="40" height="40" fill="#c1c78e"/><rect x="980" y="930" width="40" height="40" fill="#c7bf85"/><rect x="1020" y="930" width="40" height="40" fill="#c7b479"/><rect x="1060" y="930" width="40" height="40" fill="#c7aa6e"/><rect x="1100" y="930" width="40" height="40" fill="#c7a164"/><rect x="1140" y="930" width="40" height="40" fill="#c7995a"/><rect x="1180" y="930" width="40" height="40" fill="#c7924f"/><rect x="1220" y="930" width="40" height="40" fill="#c78b43"/><rect x="1260" y="930" width="40" height="40" fill="#c78434"/><rect x="1300" y="930" width="40" height="40" fill="#c77e10"/><rect x="1340" y="930" width="40" height="40" fill="#c77b00"/><rect x="1380" y="930" width="40" height="40" fill="#c77800"/><rect x="1420" y="930" width="40" height="40" fill="#c77500"/><rect x="1460" y="930" width="40" height="40" fill="#c77200"/><rect x="1500" y="930" width="40" height="40" fill="#c77000"/><rect x="1540" y="930" width="40" height="40" fill="#c76e00"/><rect x="1580" y="930" width="40" height="40" fill="#c76b00"/><rect x="1620" y="930" width="40" height="40" fill="#c76a00"/><rect x="1660" y="930" width="40" height="40" fill="#c76800"/><rect x="1700" y="930" width="40" height="40" fill="#c76600"/><rect x="1740" y="930" width="40" height="40" fill="#c76400"/><rect x="180" y="970" width="40" height="40" fill="#00c7be"/><rect x="220" y="970" width="40" height="40" fill="#00c7bd"/><rect x="260" y="970" width="40" height="40" fill="#00c7bd"/><rect x="300" y="970" width="40" height="40" fill="#00c7bc"/><rect x="340" y="970" width="40" height="40" fill="#00c7bb"/><rect x="380" y="970" width="40" height="40" fill="#00c7ba"/><rect x="420" y="970" width="40" height="40" fill="#00c7b9"/><rect x="460" y="970" width="40" height="40" fill="#00c7b8"/><rect x="500" y="970" width="40" height="40" fill="#00c7b7"/><rect x="540" y="970" width="40" height="40" fill="#00c7b5"/><rect x="580" y="970" width="40" height="40" fill="#00c7b2"/><rect x="620" y="970" width="40" height="40" fill="#00c7af"/><rect x="660" y="970" width="40" height="40" fill="#00c7ab"/><rect x="700" y="970" width="40" height="40" fill="#41c7a7"/><rect x="740" y="970" width="40" height="40" fill="#6ec7a6"/><rect x="780" y="970" width="40" height="40" fill="#88c7a4"/><rect x="820" y="970" width="40" height="40" fill="#9cc7a2"/><rect x="860" y="970" width="40" height="40" fill="#aec7a0"/><rect x="900" y="970" width="40" height="40" fill="#bec79e"/><rect x="940" y="970" width="40" height="40" fill="#c7c198"/><rect x="980" y="970" width="40" height="40" fill="#c7b58b"/><rect x="1020" y="970" width="40" height="40" fill="#c7aa80"/><rect x="1060" y="970" width="40" height="40" fill="#c7a176"/><rect x="1100" y="970" width="40" height="40" fill="#c7986d"/><rect x="1140" y="970" width="40" height="40" fill="#c79064"/><rect x="1180" y="970" width="40" height="40" fill="#c7895b"/><rect x="1220" y="970" width="40" height="40" fill="#c78251"/><rect x="1260" y="970" width="40" height="40" fill="#c77c47"/><rect x="1300" y="970" width="40" height="40" fill="#c7763b"/><rect x="1340" y="970" width="40" height="40" fill="#c7702b"/><rect x="1380" y="970" width="40" height="40" fill="#c76b00"/><rect x="1420" y="970" width="40" height="40" fill="#c76900"/><rect x="1460" y="970" width="40" height="40" fill="#c76600"/><rect x="1500" y="970" width="40" height="40" fill="#c76400"/><rect x="1540" y="970" width="40" height="40" fill="#c76200"/><rect x="1580" y="970" width="40" height="40" fill="#c76000"/><rect x="1620" y="970" width="40" height="40" fill="#c75f00"/><rect x="1660" y="970" width="40" height="40" fill="#c75d00"/><rect x="1700" y="970" width="40" height="40" fill="#c75b00"/><rect x="1740" y="970" width="40" height="40" fill="#c75a00"/><rect x="180" y="1010" width="40" height="40" fill="#00c7c1"/><rect x="220" y="1010" width="40" height="40" fill="#00c7c1"/><rect x="260" y="1010" width="40" height="40" fill="#00c7c0"/><rect x="300" y="1010" width="40" height="40" fill="#00c7c0"/><rect x="340" y="1010" width="40" height="40" fill="#00c7bf"/><rect x="380" y="1010" width="40" height="40" fill="#00c7bf"/><rect x="420" y="1010" width="40" height="40" fill="#00c7be"/><rect x="460" y="1010" width="40" height="40" fill="#00c7bd"/><rect x="500" y="1010" width="40" height="40" fill="#00c7bc"/><rect x="540" y="1010" width="40" height="40" fill="#00c7bb"/><rect x="580" y="1010" width="40" height="40" fill="#00c7b9"/><rect x="620" y="1010" width="40" height="40" fill="#00c7b7"/><rect x="660" y="1010" width="40" height="40" fill="#00c7b4"/><rect x="700" y="1010" width="40" height="40" fill="#59c7b2"/><rect x="740" y="1010" width="40" height="40" fill="#7cc7b1"/><rect x="780" y="1010" width="40" height="40" fill="#94c7b0"/><rect x="820" y="1010" width="40" height="40" fill="#a8c7af"/><rect x="860" y="1010" width="40" height="40" fill="#bac7ae"/><rect x="900" y="1010" width="40" height="40" fill="#c7c4aa"/><rect x="940" y="1010" width="40" height="40" fill="#c7b69c"/><rect x="980" y="1010" width="40" height="40" fill="#c7aa91"/><rect x="1020" y="1010" width="40" height="40" fill="#c7a086"/><rect x="1060" y="1010" width="40" height="40" fill="#c7977d"/><rect x="1100" y="1010" width="40" height="40" fill="#c78f74"/><rect x="1140" y="1010" width="40" height="40" fill="#c7876c"/><rect x="1180" y="1010" width="40" height="40" fill="#c78064"/><rect x="1220" y="1010" width="40" height="40" fill="#c7795b"/><rect x="1260" y="1010" width="40" height="40" fill="#c77353"/><rect x="1300" y="1010" width="40" height="40" fill="#c76d4a"/><rect x="1340" y="1010" width="40" height="40" fill="#c76740"/><rect x="1380" y="1010" width="40" height="40" fill="#c76134"/><rect x="1420" y="1010" width="40" height="40" fill="#c75b20"/><rect x="1460" y="1010" width="40" height="40" fill="#c75700"/><rect x="1500" y="1010" width="40" height="40" fill="#c75500"/><rect x="1540" y="1010" width="40" height="40" fill="#c75400"/><rect x="1580" y="1010" width="40" height="40" fill="#c75200"/><rect x="1620" y="1010" width="40" height="40" fill="#c75100"/><rect x="1660" y="1010" width="40" height="40" fill="#c74f00"/><rect x="1700" y="1010" width="40" height="40" fill="#c74e00"/><rect x="1740" y="1010" width="40" height="40" fill="#c74d00"/><rect x="180" y="1050" width="40" height="40" fill="#00c7c4"/><rect x="220" y="1050" width="40" height="40" fill="#00c7c4"/><rect x="260" y="1050" width="40" height="40" fill="#00c7c4"/><rect x="300" y="1050" width="40" height="40" fill="#00c7c4"/><rect x="340" y="1050" width="40" height="40" fill="#00c7c4"/><rect x="380" y="1050" width="40" height="40" fill="#00c7c3"/><rect x="420" y="1050" width="40" height="40" fill="#00c7c3"/><rect x="460" y="1050" width="40" height="40" fill="#00c7c3"/><rect x="500" y="1050" width="40" height="40" fill="#00c7c2"/><rect x="540" y="1050" width="40" height="40" fill="#00c7c1"/><rect x="580" y="1050" width="40" height="40" fill="#00c7c1"/><rect x="620" y="1050" width="40" height="40" fill="#00c7c0"/><rect x="660" y="1050" width="40" height="40" fill="#1bc7be"/><rect x="700" y="1050" width="40" height="40" fill="#6bc7be"/><rect x="740" y="1050" width="40" height="40" fill="#8ac7bd"/><rect x="780" y="1050" width="40" height="40" fill="#a1c7bd"/><rect x="820" y="1050" width="40" height="40" fill="#b5c7bc"/><rect x="860" y="1050" width="40" height="40" fill="#c6c7bc"/><rect x="900" y="1050" width="40" height="40" fill="#c7b8ad"/><rect x="940" y="1050" width="40" height="40" fill="#c7aba0"/><rect x="980" y="1050" width="40" height="40" fill="#c7a095"/><rect x="1020" y="1050" width="40" height="40" fill="#c7968b"/><rect x="1060" y="1050" width="40" height="40" fill="#c78d82"/><rect x="1100" y="1050" width="40" height="40" fill="#c7857a"/><rect x="1140" y="1050" width="40" height="40" fill="#c77d72"/><rect x="1180" y="1050" width="40" height="40" fill="#c7766b"/><rect x="1220" y="1050" width="40" height="40" fill="#c77063"/><rect x="1260" y="1050" width="40" height="40" fill="#c7695c"/><rect x="1300" y="1050" width="40" height="40" fill="#c76255"/><rect x="1340" y="1050" width="40" height="40" fill="#c75c4d"/><rect x="1380" y="1050" width="40" height="40" fill="#c75544"/><rect x="1420" y="1050" width="40" height="40" fill="#c74e3a"/><rect x="1460" y="1050" width="40" height="40" fill="#c7472d"/><rect x="1500" y="1050" width="40" height="40" fill="#c73e08"/><rect x="1540" y="1050" width="40" height="40" fill="#c73d00"/><rect x="1580" y="1050" width="40" height="40" fill="#c73c00"/><rect x="1620" y="1050" width="40" height="40" fill="#c73b00"/><rect x="1660" y="1050" width="40" height="40" fill="#c73a00"/><rect x="1700" y="1050" width="40" height="40" fill="#c73900"/><rect x="1740" y="1050" width="40" height="40" fill="#c73800"/><rect x="180" y="1090" width="40" height="40" fill="#00c6c7"/><rect x="220" y="1090" width="40" height="40" fill="#00c6c7"/><rect x="260" y="1090" width="40" height="40" fill="#00c6c7"/><rect x="300" y="1090" width="40" height="40" fill="#00c6c7"/><rect x="340" y="1090" width="40" height="40" fill="#00c6c7"/><rect x="380" y="1090" width="40" height="40" fill="#00c6c7"/><rect x="420" y="1090" width="40" height="40" fill="#00c5c7"/><rect x="460" y="1090" width="40" height="40" fill="#00c5c7"/><rect x="500" y="1090" width="40" height="40" fill="#00c5c7"/><rect x="540" y="1090" width="40" height="40" fill="#00c5c7"/><rect x="580" y="1090" width="40" height="40" fill="#00c4c7"/><rect x="620" y="1090" width="40" height="40" fill="#00c4c7"/><rect x="660" y="1090" width="40" height="40" fill="#4dc3c7"/><rect x="700" y="1090" width="40" height="40" fill="#79c3c7"/><rect x="740" y="1090" width="40" height="40" fill="#95c3c7"/><rect x="780" y="1090" width="40" height="40" fill="#abc3c7"/><rect x="820" y="1090" width="40" height="40" fill="#bec2c7"/><rect x="860" y="1090" width="40" height="40" fill="#c7babe"/><rect x="900" y="1090" width="40" height="40" fill="#c7abb0"/><rect x="940" y="1090" width="40" height="40" fill="#c79fa4"/><rect x="980" y="1090" width="40" height="40" fill="#c79599"/><rect x="1020" y="1090" width="40" height="40" fill="#c78b90"/><rect x="1060" y="1090" width="40" height="40" fill="#c78287"/><rect x="1100" y="1090" width="40" height="40" fill="#c77a7f"/><rect x="1140" y="1090" width="40" height="40" fill="#c77378"/><rect x="1180" y="1090" width="40" height="40" fill="#c76b71"/><rect x="1220" y="1090" width="40" height="40" fill="#c7646a"/><rect x="1260" y="1090" width="40" height="40" fill="#c75d63"/><rect x="1300" y="1090" width="40" height="40" fill="#c7565d"/><rect x="1340" y="1090" width="40" height="40" fill="#c74e56"/><rect x="1380" y="1090" width="40" height="40" fill="#c7464f"/><rect x="1420" y="1090" width="40" height="40" fill="#c73d47"/><rect x="1460" y="1090" width="40" height="40" fill="#c7313f"/><rect x="1500" y="1090" width="40" height="40" fill="#c71d34"/><rect x="1540" y="1090" width="40" height="40" fill="#c70030"/><rect x="1580" y="1090" width="40" height="40" fill="#c7002f"/><rect x="1620" y="1090" width="40" height="40" fill="#c7002e"/><rect x="1660" y="1090" width="40" height="40" fill="#c7002e"/><rect x="1700" y="1090" width="40" height="40" fill="#c7002d"/><rect x="1740" y="1090" width="40" height="40" fill="#c7002d"/><rect x="180" y="1130" width="40" height="40" fill="#00c2c7"/><rect x="220" y="1130" width="40" height="40" fill="#00c2c7"/><rect x="260" y="1130" width="40" height="40" fill="#00c2c7"/><rect x="300" y="1130" width="40" height="40" fill="#00c1c7"/><rect x="340" y="1130" width="40" height="40" fill="#00c1c7"/><rect x="380" y="1130" width="40" height="40" fill="#00c0c7"/><rect x="420" y="1130" width="40" height="40" fill="#00c0c7"/><rect x="460" y="1130" width="40" height="40" fill="#00bfc7"/><rect x="500" y="1130" width="40" height="40" fill="#00bec7"/><rect x="540" y="1130" width="40" height="40" fill="#00bcc7"/><rect x="580" y="1130" width="40" height="40" fill="#00bbc7"/><rect x="620" y="1130" width="40" height="40" fill="#00b8c7"/><rect x="660" y="1130" width="40" height="40" fill="#5eb7c7"/><rect x="700" y="1130" width="40" height="40" fill="#80b6c7"/><rect x="740" y="1130" width="40" height="40" fill="#98b5c7"/><rect x="780" y="1130" width="40" height="40" fill="#acb4c7"/><rect x="820" y="1130" width="40" height="40" fill="#beb3c7"/><rect x="860" y="1130" width="40" height="40" fill="#c7acc0"/><rect x="900" y="1130" width="40" height="40" fill="#c79eb2"/><rect x="940" y="1130" width="40" height="40" fill="#c793a7"/><rect x="980" y="1130" width="40" height="40" fill="#c7899d"/><rect x="1020" y="1130" width="40" height="40" fill="#c77f94"/><rect x="1060" y="1130" width="40" height="40" fill="#c7778b"/><rect x="1100" y="1130" width="40" height="40" fill="#c76f84"/><rect x="1140" y="1130" width="40" height="40" fill="#c7677d"/><rect x="1180" y="1130" width="40" height="40" fill="#c75f76"/><rect x="1220" y="1130" width="40" height="40" fill="#c75770"/><rect x="1260" y="1130" width="40" height="40" fill="#c74e69"/><rect x="1300" y="1130" width="40" height="40" fill="#c74563"/><rect x="1340" y="1130" width="40" height="40" fill="#c73b5d"/><rect x="1380" y="1130" width="40" height="40" fill="#c72d57"/><rect x="1420" y="1130" width="40" height="40" fill="#c70051"/><rect x="1460" y="1130" width="40" height="40" fill="#c7004f"/><rect x="1500" y="1130" width="40" height="40" fill="#c7004e"/><rect x="1540" y="1130" width="40" height="40" fill="#c7004c"/><rect x="1580" y="1130" width="40" height="40" fill="#c7004b"/><rect x="1620" y="1130" width="40" height="40" fill="#c7004a"/><rect x="1660" y="1130" width="40" height="40" fill="#c70048"/><rect x="1700" y="1130" width="40" height="40" fill="#c70047"/><rect x="1740" y="1130" width="40" height="40" fill="#c70046"/><rect x="180" y="1170" width="40" height="40" fill="#00bfc7"/><rect x="220" y="1170" width="40" height="40" fill="#00bec7"/><rect x="260" y="1170" width="40" height="40" fill="#00bdc7"/><rect x="300" y="1170" width="40" height="40" fill="#00bdc7"/><rect x="340" y="1170" width="40" height="40" fill="#00bcc7"/><rect x="380" y="1170" width="40" height="40" fill="#00bbc7"/><rect x="420" y="1170" width="40" height="40" fill="#00b9c7"/><rect x="460" y="1170" width="40" height="40" fill="#00b8c7"/><rect x="500" y="1170" width="40" height="40" fill="#00b6c7"/><rect x="540" y="1170" width="40" height="40" fill="#00b4c7"/><rect x="580" y="1170" width="40" height="40" fill="#00b0c7"/><rect x="620" y="1170" width="40" height="40" fill="#30acc7"/><rect x="660" y="1170" width="40" height="40" fill="#6aabc7"/><rect x="700" y="1170" width="40" height="40" fill="#86a9c7"/><rect x="740" y="1170" width="40" height="40" fill="#9ba8c7"/><rect x="780" y="1170" width="40" height="40" fill="#ada6c7"/><rect x="820" y="1170" width="40" height="40" fill="#bea4c7"/><rect x="860" y="1170" width="40" height="40" fill="#c79ec1"/><rect x="900" y="1170" width="40" height="40" fill="#c791b4"/><rect x="940" y="1170" width="40" height="40" fill="#c786a9"/><rect x="980" y="1170" width="40" height="40" fill="#c77ca0"/><rect x="1020" y="1170" width="40" height="40" fill="#c77297"/><rect x="1060" y="1170" width="40" height="40" fill="#c7698f"/><rect x="1100" y="1170" width="40" height="40" fill="#c76188"/><rect x="1140" y="1170" width="40" height="40" fill="#c75881"/><rect x="1180" y="1170" width="40" height="40" fill="#c74f7b"/><rect x="1220" y="1170" width="40" height="40" fill="#c74475"/><rect x="1260" y="1170" width="40" height="40" fill="#c7386f"/><rect x="1300" y="1170" width="40" height="40" fill="#c72669"/><rect x="1340" y="1170" width="40" height="40" fill="#c70065"/><rect x="1380" y="1170" width="40" height="40" fill="#c70062"/><rect x="1420" y="1170" width="40" height="40" fill="#c70060"/><rect x="1460" y="1170" width="40" height="40" fill="#c7005e"/><rect x="1500" y="1170" width="40" height="40" fill="#c7005d"/><rect x="1540" y="1170" width="40" height="40" fill="#c7005b"/><rect x="1580" y="1170" width="40" height="40" fill="#c70059"/><rect x="1620" y="1170" width="40" height="40" fill="#c70058"/><rect x="1660" y="1170" width="40" height="40" fill="#c70057"/><rect x="1700" y="1170" width="40" height="40" fill="#c70055"/><rect x="1740" y="1170" width="40" height="40" fill="#c70054"/><rect x="180" y="1210" width="40" height="40" fill="#00bbc7"/><rect x="220" y="1210" width="40" height="40" fill="#00bac7"/><rect x="260" y="1210" width="40" height="40" fill="#00b9c7"/><rect x="300" y="1210" width="40" height="40" fill="#00b8c7"/><rect x="340" y="1210" width="40" height="40" fill="#00b6c7"/><rect x="380" y="1210" width="40" height="40" fill="#00b5c7"/><rect x="420" y="1210" width="40" height="40" fill="#00b3c7"/><rect x="460" y="1210" width="40" height="40" fill="#00b1c7"/><rect x="500" y="1210" width="40" height="40" fill="#00aec7"/><rect x="540" y="1210" width="40" height="40" fill="#00aac7"/><rect x="580" y="1210" width="40" height="40" fill="#00a5c7"/><rect x="620" y="1210" width="40" height="40" fill="#4da0c7"/><rect x="660" y="1210" width="40" height="40" fill="#729ec7"/><rect x="700" y="1210" width="40" height="40" fill="#8a9cc7"/><rect x="740" y="1210" width="40" height="40" fill="#9d9ac7"/><rect x="780" y="1210" width="40" height="40" fill="#ae98c7"/><rect x="820" y="1210" width="40" height="40" fill="#bd95c7"/><rect x="860" y="1210" width="40" height="40" fill="#c78fc2"/><rect x="900" y="1210" width="40" height="40" fill="#c782b6"/><rect x="940" y="1210" width="40" height="40" fill="#c777ac"/><rect x="980" y="1210" width="40" height="40" fill="#c76da2"/><rect x="1020" y="1210" width="40" height="40" fill="#c7639a"/><rect x="1060" y="1210" width="40" height="40" fill="#c75992"/><rect x="1100" y="1210" width="40" height="40" fill="#c74f8b"/><rect x="1140" y="1210" width="40" height="40" fill="#c74385"/><rect x="1180" y="1210" width="40" height="40" fill="#c7357f"/><rect x="1220" y="1210" width="40" height="40" fill="#c71979"/><rect x="1260" y="1210" width="40" height="40" fill="#c70075"/><rect x="1300" y="1210" width="40" height="40" fill="#c70072"/><rect x="1340" y="1210" width="40" height="40" fill="#c70070"/><rect x="1380" y="1210" width="40" height="40" fill="#c7006d"/><rect x="1420" y="1210" width="40" height="40" fill="#c7006b"/><rect x="1460" y="1210" width="40" height="40" fill="#c70069"/><rect x="1500" y="1210" width="40" height="40" fill="#c70067"/><rect x="1540" y="1210" width="40" height="40" fill="#c70065"/><rect x="1580" y="1210" width="40" height="40" fill="#c70064"/><rect x="1620" y="1210" width="40" height="40" fill="#c70062"/><rect x="1660" y="1210" width="40" height="40" fill="#c70061"/><rect x="1700" y="1210" width="40" height="40" fill="#c7005f"/><rect x="1740" y="1210" width="40" height="40" fill="#c7005e"/><rect x="180" y="1250" width="40" height="40" fill="#00b7c7"/><rect x="220" y="1250" width="40" height="40" fill="#00b6c7"/><rect x="260" y="1250" width="40" height="40" fill="#00b4c7"/><rect x="300" y="1250" width="40" height="40" fill="#00b3c7"/><rect x="340" y="1250" width="40" height="40" fill="#00b1c7"/><rect x="380" y="1250" width="40" height="40" fill="#00afc7"/><rect x="420" y="1250" width="40" height="40" fill="#00acc7"/><rect x="460" y="1250" width="40" height="40" fill="#00a9c7"/><rect x="500" y="1250" width="40" height="40" fill="#00a5c7"/><rect x="540" y="1250" width="40" height="40" fill="#009fc7"/><rect x="580" y="1250" width="40" height="40" fill="#0097c7"/><rect x="620" y="1250" width="40" height="40" fill="#5b94c7"/><rect x="660" y="1250" width="40" height="40" fill="#7992c7"/><rect x="700" y="1250" width="40" height="40" fill="#8e8fc7"/><rect x="740" y="1250" width="40" height="40" fill="#9f8cc7"/><rect x="780" y="1250" width="40" height="40" fill="#af89c7"/><rect x="820" y="1250" width="40" height="40" fill="#bd85c7"/><rect x="860" y="1250" width="40" height="40" fill="#c77ec3"/><rect x="900" y="1250" width="40" height="40" fill="#c772b8"/><rect x="940" y="1250" width="40" height="40" fill="#c766ae"/><rect x="980" y="1250" width="40" height="40" fill="#c75ba5"/><rect x="1020" y="1250" width="40" height="40" fill="#c74f9d"/><rect x="1060" y="1250" width="40" height="40" fill="#c74295"/><rect x="1100" y="1250" width="40" height="40" fill="#c7308f"/><rect x="1140" y="1250" width="40" height="40" fill="#c70089"/><rect x="1180" y="1250" width="40" height="40" fill="#c70085"/><rect x="1220" y="1250" width="40" height="40" fill="#c70081"/><rect x="1260" y="1250" width="40" height="40" fill="#c7007e"/><rect x="1300" y="1250" width="40" height="40" fill="#c7007b"/><rect x="1340" y="1250" width="40" height="40" fill="#c70078"/><rect x="1380" y="1250" width="40" height="40" fill="#c70076"/><rect x="1420" y="1250" width="40" height="40" fill="#c70073"/><rect x="1460" y="1250" width="40" height="40" fill="#c70071"/><rect x="1500" y="1250" width="40" height="40" fill="#c7006f"/><rect x="1540" y="1250" width="40" height="40" fill="#c7006e"/><rect x="1580" y="1250" width="40" height="40" fill="#c7006c"/><rect x="1620" y="1250" width="40" height="40" fill="#c7006a"/><rect x="1660" y="1250" width="40" height="40" fill="#c70069"/><rect x="1700" y="1250" width="40" height="40" fill="#c70067"/><rect x="1740" y="1250" width="40" height="40" fill="#c70066"/><rect x="180" y="1290" width="40" height="40" fill="#00b3c7"/><rect x="220" y="1290" width="40" height="40" fill="#00b1c7"/><rect x="260" y="1290" width="40" height="40" fill="#00afc7"/><rect x="300" y="1290" width="40" height="40" fill="#00adc7"/><rect x="340" y="1290" width="40" height="40" fill="#00abc7"/><rect x="380" y="1290" width="40" height="40" fill="#00a8c7"/><rect x="420" y="1290" width="40" height="40" fill="#00a5c7"/><rect x="460" y="1290" width="40" height="40" fill="#00a1c7"/><rect x="500" y="1290" width="40" height="40" fill="#009bc7"/><rect x="540" y="1290" width="40" height="40" fill="#0093c7"/><rect x="580" y="1290" width="40" height="40" fill="#378ac7"/><rect x="620" y="1290" width="40" height="40" fill="#6587c7"/><rect x="660" y="1290" width="40" height="40" fill="#7e84c7"/><rect x="700" y="1290" width="40" height="40" fill="#9181c7"/><rect x="740" y="1290" width="40" height="40" fill="#a17dc7"/><rect x="780" y="1290" width="40" height="40" fill="#b078c7"/><rect x="820" y="1290" width="40" height="40" fill="#bd72c7"/><rect x="860" y="1290" width="40" height="40" fill="#c76bc4"/><rect x="900" y="1290" width="40" height="40" fill="#c75db9"/><rect x="940" y="1290" width="40" height="40" fill="#c74fb0"/><rect x="980" y="1290" width="40" height="40" fill="#c73fa7"/><rect x="1020" y="1290" width="40" height="40" fill="#c7279f"/><rect x="1060" y="1290" width="40" height="40" fill="#c70099"/><rect x="1100" y="1290" width="40" height="40" fill="#c70094"/><rect x="1140" y="1290" width="40" height="40" fill="#c7008f"/><rect x="1180" y="1290" width="40" height="40" fill="#c7008b"/><rect x="1220" y="1290" width="40" height="40" fill="#c70088"/><rect x="1260" y="1290" width="40" height="40" fill="#c70085"/><rect x="1300" y="1290" width="40" height="40" fill="#c70082"/><rect x="1340" y="1290" width="40" height="40" fill="#c7007f"/><rect x="1380" y="1290" width="40" height="40" fill="#c7007d"/><rect x="1420" y="1290" width="40" height="40" fill="#c7007a"/><rect x="1460" y="1290" width="40" height="40" fill="#c70078"/><rect x="1500" y="1290" width="40" height="40" fill="#c70076"/><rect x="1540" y="1290" width="40" height="40" fill="#c70074"/><rect x="1580" y="1290" width="40" height="40" fill="#c70072"/><rect x="1620" y="1290" width="40" height="40" fill="#c70071"/><rect x="1660" y="1290" width="40" height="40" fill="#c7006f"/><rect x="1700" y="1290" width="40" height="40" fill="#c7006e"/><rect x="1740" y="1290" width="40" height="40" fill="#c7006c"/><rect x="180" y="1330" width="40" height="40" fill="#00aec7"/><rect x="220" y="1330" width="40" height="40" fill="#00acc7"/><rect x="260" y="1330" width="40" height="40" fill="#00aac7"/><rect x="300" y="1330" width="40" height="40" fill="#00a8c7"/><rect x="340" y="1330" width="40" height="40" fill="#00a5c7"/><rect x="380" y="1330" width="40" height="40" fill="#00a1c7"/><rect x="420" y="1330" width="40" height="40" fill="#009dc7"/><rect x="460" y="1330" width="40" height="40" fill="#0097c7"/><rect x="500" y="1330" width="40" height="40" fill="#0090c7"/><rect x="540" y="1330" width="40" height="40" fill="#0085c7"/><rect x="580" y="1330" width="40" height="40" fill="#4c7dc7"/><rect x="620" y="1330" width="40" height="40" fill="#6d7ac7"/><rect x="660" y="1330" width="40" height="40" fill="#8375c7"/><rect x="700" y="1330" width="40" height="40" fill="#9470c7"/><rect x="740" y="1330" width="40" height="40" fill="#a36bc7"/><rect x="780" y="1330" width="40" height="40" fill="#b064c7"/><rect x="820" y="1330" width="40" height="40" fill="#bd5cc7"/><rect x="860" y="1330" width="40" height="40" fill="#c750c5"/><rect x="900" y="1330" width="40" height="40" fill="#c73cbb"/><rect x="940" y="1330" width="40" height="40" fill="#c700b1"/><rect x="980" y="1330" width="40" height="40" fill="#c700aa"/><rect x="1020" y="1330" width="40" height="40" fill="#c700a3"/><rect x="1060" y="1330" width="40" height="40" fill="#c7009e"/><rect x="1100" y="1330" width="40" height="40" fill="#c70099"/><rect x="1140" y="1330" width="40" height="40" fill="#c70095"/><rect x="1180" y="1330" width="40" height="40" fill="#c70091"/><rect x="1220" y="1330" width="40" height="40" fill="#c7008d"/><rect x="1260" y="1330" width="40" height="40" fill="#c7008a"/><rect x="1300" y="1330" width="40" height="40" fill="#c70087"/><rect x="1340" y="1330" width="40" height="40" fill="#c70085"/><rect x="1380" y="1330" width="40" height="40" fill="#c70082"/><rect x="1420" y="1330" width="40" height="40" fill="#c70080"/><rect x="1460" y="1330" width="40" height="40" fill="#c7007e"/><rect x="1500" y="1330" width="40" height="40" fill="#c7007c"/><rect x="1540" y="1330" width="40" height="40" fill="#c7007a"/><rect x="1580" y="1330" width="40" height="40" fill="#c70078"/><rect x="1620" y="1330" width="40" height="40" fill="#c70076"/><rect x="1660" y="1330" width="40" height="40" fill="#c70075"/><rect x="1700" y="1330" width="40" height="40" fill="#c70073"/><rect x="1740" y="1330" width="40" height="40" fill="#c70072"/><rect x="180" y="1370" width="40" height="40" fill="#00aac7"/><rect x="220" y="1370" width="40" height="40" fill="#00a8c7"/><rect x="260" y="1370" width="40" height="40" fill="#00a5c7"/><rect x="300" y="1370" width="40" height="40" fill="#00a2c7"/><rect x="340" y="1370" width="40" height="40" fill="#009ec7"/><rect x="380" y="1370" width="40" height="40" fill="#009ac7"/><rect x="420" y="1370" width="40" height="40" fill="#0094c7"/><rect x="460" y="1370" width="40" height="40" fill="#008dc7"/><rect x="500" y="1370" width="40" height="40" fill="#0083c7"/><rect x="540" y="1370" width="40" height="40" fill="#0074c7"/><rect x="580" y="1370" width="40" height="40" fill="#596fc7"/><rect x="620" y="1370" width="40" height="40" fill="#736ac7"/><rect x="660" y="1370" width="40" height="40" fill="#8664c7"/><rect x="700" y="1370" width="40" height="40" fill="#965dc7"/><rect x="740" y="1370" width="40" height="40" fill="#a454c7"/><rect x="780" y="1370" width="40" height="40" fill="#b148c7"/><rect x="820" y="1370" width="40" height="40" fill="#bd34c7"/><rect x="860" y="1370" width="40" height="40" fill="#c700c6"/><rect x="900" y="1370" width="40" height="40" fill="#c700bc"/><rect x="940" y="1370" width="40" height="40" fill="#c700b4"/><rect x="980" y="1370" width="40" height="40" fill="#c700ad"/><rect x="1020" y="1370" width="40" height="40" fill="#c700a7"/><rect x="1060" y="1370" width="40" height="40" fill="#c700a2"/><rect x="1100" y="1370" width="40" height="40" fill="#c7009d"/><rect x="1140" y="1370" width="40" height="40" fill="#c70099"/><rect x="1180" y="1370" width="40" height="40" fill="#c70096"/><rect x="1220" y="1370" width="40" height="40" fill="#c70092"/><rect x="1260" y="1370" width="40" height="40" fill="#c7008f"/><rect x="1300" y="1370" width="40" height="40" fill="#c7008c"/><rect x="1340" y="1370" width="40" height="40" fill="#c70089"/><rect x="1380" y="1370" width="40" height="40" fill="#c70087"/><rect x="1420" y="1370" width="40" height="40" fill="#c70085"/><rect x="1460" y="1370" width="40" height="40" fill="#c70082"/><rect x="1500" y="1370" width="40" height="40" fill="#c70080"/><rect x="1540" y="1370" width="40" height="40" fill="#c7007f"/><rect x="1580" y="1370" width="40" height="40" fill="#c7007d"/><rect x="1620" y="1370" width="40" height="40" fill="#c7007b"/><rect x="1660" y="1370" width="40" height="40" fill="#c70079"/><rect x="1700" y="1370" width="40" height="40" fill="#c70078"/><rect x="1740" y="1370" width="40" height="40" fill="#c70076"/><rect x="180" y="1410" width="40" height="40" fill="#00a5c7"/><rect x="220" y="1410" width="40" height="40" fill="#00a2c7"/><rect x="260" y="1410" width="40" height="40" fill="#009fc7"/><rect x="300" y="1410" width="40" height="40" fill="#009cc7"/><rect x="340" y="1410" width="40" height="40" fill="#0097c7"/><rect x="380" y="1410" width="40" height="40" fill="#0092c7"/><rect x="420" y="1410" width="40" height="40" fill="#008bc7"/><rect x="460" y="1410" width="40" height="40" fill="#0081c7"/><rect x="500" y="1410" width="40" height="40" fill="#0074c7"/><rect x="540" y="1410" width="40" height="40" fill="#3b64c7"/><rect x="580" y="1410" width="40" height="40" fill="#625ec7"/><rect x="620" y="1410" width="40" height="40" fill="#7856c7"/><rect x="660" y="1410" width="40" height="40" fill="#8a4cc7"/><rect x="700" y="1410" width="40" height="40" fill="#983fc7"/><rect x="740" y="1410" width="40" height="40" fill="#a523c7"/><rect x="780" y="1410" width="40" height="40" fill="#b200c7"/><rect x="820" y="1410" width="40" height="40" fill="#bd00c7"/><rect x="860" y="1410" width="40" height="40" fill="#c700c7"/><rect x="900" y="1410" width="40" height="40" fill="#c700be"/><rect x="940" y="1410" width="40" height="40" fill="#c700b6"/><rect x="980" y="1410" width="40" height="40" fill="#c700b0"/><rect x="1020" y="1410" width="40" height="40" fill="#c700aa"/><rect x="1060" y="1410" width="40" height="40" fill="#c700a5"/><rect x="1100" y="1410" width="40" height="40" fill="#c700a1"/><rect x="1140" y="1410" width="40" height="40" fill="#c7009d"/><rect x="1180" y="1410" width="40" height="40" fill="#c70099"/><rect x="1220" y="1410" width="40" height="40" fill="#c70096"/><rect x="1260" y="1410" width="40" height="40" fill="#c70093"/><rect x="1300" y="1410" width="40" height="40" fill="#c70090"/><rect x="1340" y="1410" width="40" height="40" fill="#c7008e"/><rect x="1380" y="1410" width="40" height="40" fill="#c7008b"/><rect x="1420" y="1410" width="40" height="40" fill="#c70089"/><rect x="1460" y="1410" width="40" height="40" fill="#c70087"/><rect x="1500" y="1410" width="40" height="40" fill="#c70085"/><rect x="1540" y="1410" width="40" height="40" fill="#c70083"/><rect x="1580" y="1410" width="40" height="40" fill="#c70081"/><rect x="1620" y="1410" width="40" height="40" fill="#c7007f"/><rect x="1660" y="1410" width="40" height="40" fill="#c7007e"/><rect x="1700" y="1410" width="40" height="40" fill="#c7007c"/><rect x="1740" y="1410" width="40" height="40" fill="#c7007b"/><rect x="180" y="1450" width="40" height="40" fill="#00a0c7"/><rect x="220" y="1450" width="40" height="40" fill="#009dc7"/><rect x="260" y="1450" width="40" height="40" fill="#0099c7"/><rect x="300" y="1450" width="40" height="40" fill="#0095c7"/><rect x="340" y="1450" width="40" height="40" fill="#0090c7"/><rect x="380" y="1450" width="40" height="40" fill="#0089c7"/><rect x="420" y="1450" width="40" height="40" fill="#0080c7"/><rect x="460" y="1450" width="40" height="40" fill="#0074c7"/><rect x="500" y="1450" width="40" height="40" fill="#005fc7"/><rect x="540" y="1450" width="40" height="40" fill="#4c50c7"/><rect x="580" y="1450" width="40" height="40" fill="#6945c7"/><rect x="620" y="1450" width="40" height="40" fill="#7d35c7"/><rect x="660" y="1450" width="40" height="40" fill="#8d00c7"/><rect x="700" y="1450" width="40" height="40" fill="#9c00c7"/><rect x="740" y="1450" width="40" height="40" fill="#a900c7"/><rect x="780" y="1450" width="40" height="40" fill="#b400c7"/><rect x="820" y="1450" width="40" height="40" fill="#be00c7"/><rect x="860" y="1450" width="40" height="40" fill="#c700c7"/><rect x="900" y="1450" width="40" height="40" fill="#c700bf"/><rect x="940" y="1450" width="40" height="40" fill="#c700b8"/><rect x="980" y="1450" width="40" height="40" fill="#c700b2"/><rect x="1020" y="1450" width="40" height="40" fill="#c700ad"/><rect x="1060" y="1450" width="40" height="40" fill="#c700a8"/><rect x="1100" y="1450" width="40" height="40" fill="#c700a4"/><rect x="1140" y="1450" width="40" height="40" fill="#c700a0"/><rect x="1180" y="1450" width="40" height="40" fill="#c7009d"/><rect x="1220" y="1450" width="40" height="40" fill="#c70099"/><rect x="1260" y="1450" width="40" height="40" fill="#c70096"/><rect x="1300" y="1450" width="40" height="40" fill="#c70094"/><rect x="1340" y="1450" width="40" height="40" fill="#c70091"/><rect x="1380" y="1450" width="40" height="40" fill="#c7008f"/><rect x="1420" y="1450" width="40" height="40" fill="#c7008c"/><rect x="1460" y="1450" width="40" height="40" fill="#c7008a"/><rect x="1500" y="1450" width="40" height="40" fill="#c70088"/><rect x="1540" y="1450" width="40" height="40" fill="#c70086"/><rect x="1580" y="1450" width="40" height="40" fill="#c70085"/><rect x="1620" y="1450" width="40" height="40" fill="#c70083"/><rect x="1660" y="1450" width="40" height="40" fill="#c70081"/><rect x="1700" y="1450" width="40" height="40" fill="#c70080"/><rect x="1740" y="1450" width="40" height="40" fill="#c7007e"/><rect x="180" y="1490" width="40" height="40" fill="#009bc7"/><rect x="220" y="1490" width="40" height="40" fill="#0097c7"/><rect x="260" y="1490" width="40" height="40" fill="#0093c7"/><rect x="300" y="1490" width="40" height="40" fill="#008ec7"/><rect x="340" y="1490" width="40" height="40" fill="#0087c7"/><rect x="380" y="1490" width="40" height="40" fill="#007fc7"/><rect x="420" y="1490" width="40" height="40" fill="#0073c7"/><rect x="460" y="1490" width="40" height="40" fill="#0062c7"/><rect x="500" y="1490" width="40" height="40" fill="#1b3ec7"/><rect x="540" y="1490" width="40" height="40" fill="#5729c7"/><rect x="580" y="1490" width="40" height="40" fill="#7100c7"/><rect x="620" y="1490" width="40" height="40" fill="#8500c7"/><rect x="660" y="1490" width="40" height="40" fill="#9400c7"/><rect x="700" y="1490" width="40" height="40" fill="#a000c7"/><rect x="740" y="1490" width="40" height="40" fill="#ab00c7"/><rect x="780" y="1490" width="40" height="40" fill="#b500c7"/><rect x="820" y="1490" width="40" height="40" fill="#be00c7"/><rect x="860" y="1490" width="40" height="40" fill="#c600c7"/><rect x="900" y="1490" width="40" height="40" fill="#c700c0"/><rect x="940" y="1490" width="40" height="40" fill="#c700ba"/><rect x="980" y="1490" width="40" height="40" fill="#c700b4"/><rect x="1020" y="1490" width="40" height="40" fill="#c700af"/><rect x="1060" y="1490" width="40" height="40" fill="#c700ab"/><rect x="1100" y="1490" width="40" height="40" fill="#c700a7"/><rect x="1140" y="1490" width="40" height="40" fill="#c700a3"/><rect x="1180" y="1490" width="40" height="40" fill="#c700a0"/><rect x="1220" y="1490" width="40" height="40" fill="#c7009c"/><rect x="1260" y="1490" width="40" height="40" fill="#c7009a"/><rect x="1300" y="1490" width="40" height="40" fill="#c70097"/><rect x="1340" y="1490" width="40" height="40" fill="#c70094"/><rect x="1380" y="1490" width="40" height="40" fill="#c70092"/><rect x="1420" y="1490" width="40" height="40" fill="#c70090"/><rect x="1460" y="1490" width="40" height="40" fill="#c7008e"/><rect x="1500" y="1490" width="40" height="40" fill="#c7008c"/><rect x="1540" y="1490" width="40" height="40" fill="#c7008a"/><rect x="1580" y="1490" width="40" height="40" fill="#c70088"/><rect x="1620" y="1490" width="40" height="40" fill="#c70086"/><rect x="1660" y="1490" width="40" height="40" fill="#c70085"/><rect x="1700" y="1490" width="40" height="40" fill="#c70083"/><rect x="1740" y="1490" width="40" height="40" fill="#c70082"/><rect x="180" y="1530" width="40" height="40" fill="#0095c7"/><rect x="220" y="1530" width="40" height="40" fill="#0091c7"/><rect x="260" y="1530" width="40" height="40" fill="#008cc7"/><rect x="300" y="1530" width="40" height="40" fill="#0086c7"/><rect x="340" y="1530" width="40" height="40" fill="#007ec7"/><rect x="380" y="1530" width="40" height="40" fill="#0073c7"/><rect x="420" y="1530" width="40" height="40" fill="#0063c7"/><rect x="460" y="1530" width="40" height="40" fill="#0046c7"/><rect x="500" y="1530" width="40" height="40" fill="#4800c7"/><rect x="540" y="1530" width="40" height="40" fill="#6900c7"/><rect x="580" y="1530" width="40" height="40" fill="#7d00c7"/><rect x="620" y="1530" width="40" height="40" fill="#8c00c7"/><rect x="660" y="1530" width="40" height="40" fill="#9900c7"/><rect x="700" y="1530" width="40" height="40" fill="#a400c7"/><rect x="740" y="1530" width="40" height="40" fill="#ae00c7"/><rect x="780" y="1530" width="40" height="40" fill="#b600c7"/><rect x="820" y="1530" width="40" height="40" fill="#be00c7"/><rect x="860" y="1530" width="40" height="40" fill="#c600c7"/><rect x="900" y="1530" width="40" height="40" fill="#c700c1"/><rect x="940" y="1530" width="40" height="40" fill="#c700bb"/><rect x="980" y="1530" width="40" height="40" fill="#c700b6"/><rect x="1020" y="1530" width="40" height="40" fill="#c700b1"/><rect x="1060" y="1530" width="40" height="40" fill="#c700ad"/><rect x="1100" y="1530" width="40" height="40" fill="#c700a9"/><rect x="1140" y="1530" width="40" height="40" fill="#c700a6"/><rect x="1180" y="1530" width="40" height="40" fill="#c700a2"/><rect x="1220" y="1530" width="40" height="40" fill="#c7009f"/><rect x="1260" y="1530" width="40" height="40" fill="#c7009c"/><rect x="1300" y="1530" width="40" height="40" fill="#c7009a"/><rect x="1340" y="1530" width="40" height="40" fill="#c70097"/><rect x="1380" y="1530" width="40" height="40" fill="#c70095"/><rect x="1420" y="1530" width="40" height="40" fill="#c70093"/><rect x="1460" y="1530" width="40" height="40" fill="#c70091"/><rect x="1500" y="1530" width="40" height="40" fill="#c7008f"/><rect x="1540" y="1530" width="40" height="40" fill="#c7008d"/><rect x="1580" y="1530" width="40" height="40" fill="#c7008b"/><rect x="1620" y="1530" width="40" height="40" fill="#c70089"/><rect x="1660" y="1530" width="40" height="40" fill="#c70088"/><rect x="1700" y="1530" width="40" height="40" fill="#c70086"/><rect x="1740" y="1530" width="40" height="40" fill="#c70085"/><rect x="180" y="1570" width="40" height="40" fill="#0090c7"/><rect x="220" y="1570" width="40" height="40" fill="#008bc7"/><rect x="260" y="1570" width="40" height="40" fill="#0085c7"/><rect x="300" y="1570" width="40" height="40" fill="#007dc7"/><rect x="340" y="1570" width="40" height="40" fill="#0073c7"/><rect x="380" y="1570" width="40" height="40" fill="#0065c7"/><rect x="420" y="1570" width="40" height="40" fill="#004cc7"/><rect x="460" y="1570" width="40" height="40" fill="#3b00c7"/><rect x="500" y="1570" width="40" height="40" fill="#6100c7"/><rect x="540" y="1570" width="40" height="40" fill="#7600c7"/><rect x="580" y="1570" width="40" height="40" fill="#8600c7"/><rect x="620" y="1570" width="40" height="40" fill="#9200c7"/><rect x="660" y="1570" width="40" height="40" fill="#9d00c7"/><rect x="700" y="1570" width="40" height="40" fill="#a700c7"/><rect x="740" y="1570" width="40" height="40" fill="#af00c7"/><rect x="780" y="1570" width="40" height="40" fill="#b700c7"/><rect x="820" y="1570" width="40" height="40" fill="#bf00c7"/><rect x="860" y="1570" width="40" height="40" fill="#c500c7"/><rect x="900" y="1570" width="40" height="40" fill="#c700c2"/><rect x="940" y="1570" width="40" height="40" fill="#c700bd"/><rect x="980" y="1570" width="40" height="40" fill="#c700b8"/><rect x="1020" y="1570" width="40" height="40" fill="#c700b3"/><rect x="1060" y="1570" width="40" height="40" fill="#c700af"/><rect x="1100" y="1570" width="40" height="40" fill="#c700ab"/><rect x="1140" y="1570" width="40" height="40" fill="#c700a8"/><rect x="1180" y="1570" width="40" height="40" fill="#c700a4"/><rect x="1220" y="1570" width="40" height="40" fill="#c700a1"/><rect x="1260" y="1570" width="40" height="40" fill="#c7009f"/><rect x="1300" y="1570" width="40" height="40" fill="#c7009c"/><rect x="1340" y="1570" width="40" height="40" fill="#c7009a"/><rect x="1380" y="1570" width="40" height="40" fill="#c70097"/><rect x="1420" y="1570" width="40" height="40" fill="#c70095"/><rect x="1460" y="1570" width="40" height="40" fill="#c70093"/><rect x="1500" y="1570" width="40" height="40" fill="#c70091"/><rect x="1540" y="1570" width="40" height="40" fill="#c7008f"/><rect x="1580" y="1570" width="40" height="40" fill="#c7008e"/><rect x="1620" y="1570" width="40" height="40" fill="#c7008c"/><rect x="1660" y="1570" width="40" height="40" fill="#c7008a"/><rect x="1700" y="1570" width="40" height="40" fill="#c70089"/><rect x="1740" y="1570" width="40" height="40" fill="#c70087"/><rect x="180" y="1610" width="40" height="40" fill="#0089c7"/><rect x="220" y="1610" width="40" height="40" fill="#0083c7"/><rect x="260" y="1610" width="40" height="40" fill="#007cc7"/><rect x="300" y="1610" width="40" height="40" fill="#0073c7"/><rect x="340" y="1610" width="40" height="40" fill="#0066c7"/><rect x="380" y="1610" width="40" height="40" fill="#0051c7"/><rect x="420" y="1610" width="40" height="40" fill="#2800c7"/><rect x="460" y="1610" width="40" height="40" fill="#5900c7"/><rect x="500" y="1610" width="40" height="40" fill="#6f00c7"/><rect x="540" y="1610" width="40" height="40" fill="#7f00c7"/><rect x="580" y="1610" width="40" height="40" fill="#8c00c7"/><rect x="620" y="1610" width="40" height="40" fill="#9700c7"/><rect x="660" y="1610" width="40" height="40" fill="#a000c7"/><rect x="700" y="1610" width="40" height="40" fill="#a900c7"/><rect x="740" y="1610" width="40" height="40" fill="#b100c7"/><rect x="780" y="1610" width="40" height="40" fill="#b800c7"/><rect x="820" y="1610" width="40" height="40" fill="#bf00c7"/><rect x="860" y="1610" width="40" height="40" fill="#c500c7"/><rect x="900" y="1610" width="40" height="40" fill="#c700c3"/><rect x="940" y="1610" width="40" height="40" fill="#c700be"/><rect x="980" y="1610" width="40" height="40" fill="#c700b9"/><rect x="1020" y="1610" width="40" height="40" fill="#c700b4"/><rect x="1060" y="1610" width="40" height="40" fill="#c700b1"/><rect x="1100" y="1610" width="40" height="40" fill="#c700ad"/><rect x="1140" y="1610" width="40" height="40" fill="#c700aa"/><rect x="1180" y="1610" width="40" height="40" fill="#c700a6"/><rect x="1220" y="1610" width="40" height="40" fill="#c700a4"/><rect x="1260" y="1610" width="40" height="40" fill="#c700a1"/><rect x="1300" y="1610" width="40" height="40" fill="#c7009e"/><rect x="1340" y="1610" width="40" height="40" fill="#c7009c"/><rect x="1380" y="1610" width="40" height="40" fill="#c7009a"/><rect x="1420" y="1610" width="40" height="40" fill="#c70098"/><rect x="1460" y="1610" width="40" height="40" fill="#c70096"/><rect x="1500" y="1610" width="40" height="40" fill="#c70094"/><rect x="1540" y="1610" width="40" height="40" fill="#c70092"/><rect x="1580" y="1610" width="40" height="40" fill="#c70090"/><rect x="1620" y="1610" width="40" height="40" fill="#c7008e"/><rect x="1660" y="1610" width="40" height="40" fill="#c7008d"/><rect x="1700" y="1610" width="40" height="40" fill="#c7008b"/><rect x="1740" y="1610" width="40" height="40" fill="#c7008a"/></g><path d="M184.6,81V1720M399.8,81V1720M614.2,81V1720M829.7,81V1720M1047.9,81V1720M1263.5,81V1720M1478.3,81V1720M1693.2,81V1720M23,162.3H1962M23,327.1H1962M23,492.2H1962M23,654.5H1962M23,819.4H1962M23,983.2H1962M23,1146.5H1962M23,1311.6H1962M23,1473.9H1962" stroke="rgba(16,20,28,0.48)" stroke-width="2.4" fill="none"/></g><g clip-path="url(#clT)"><g filter="url(#fbb)"><rect x="480" y="430" width="32" height="32" fill="#00ffb4"/><rect x="512" y="430" width="32" height="32" fill="#00ffb0"/><rect x="544" y="430" width="32" height="32" fill="#00ffab"/><rect x="576" y="430" width="32" height="32" fill="#00ffa6"/><rect x="608" y="430" width="32" height="32" fill="#00ffa0"/><rect x="640" y="430" width="32" height="32" fill="#00ff98"/><rect x="672" y="430" width="32" height="32" fill="#00ff90"/><rect x="704" y="430" width="32" height="32" fill="#00ff84"/><rect x="736" y="430" width="32" height="32" fill="#00ff76"/><rect x="768" y="430" width="32" height="32" fill="#00ff5f"/><rect x="800" y="430" width="32" height="32" fill="#00ff27"/><rect x="832" y="430" width="32" height="32" fill="#5dff00"/><rect x="864" y="430" width="32" height="32" fill="#77ff00"/><rect x="896" y="430" width="32" height="32" fill="#8aff00"/><rect x="928" y="430" width="32" height="32" fill="#98ff00"/><rect x="960" y="430" width="32" height="32" fill="#a5ff00"/><rect x="992" y="430" width="32" height="32" fill="#b0ff00"/><rect x="1024" y="430" width="32" height="32" fill="#b9ff00"/><rect x="1056" y="430" width="32" height="32" fill="#c2ff00"/><rect x="1088" y="430" width="32" height="32" fill="#caff00"/><rect x="1120" y="430" width="32" height="32" fill="#d2ff00"/><rect x="1152" y="430" width="32" height="32" fill="#d9ff00"/><rect x="1184" y="430" width="32" height="32" fill="#e0ff00"/><rect x="1216" y="430" width="32" height="32" fill="#e6ff00"/><rect x="1248" y="430" width="32" height="32" fill="#ecff00"/><rect x="1280" y="430" width="32" height="32" fill="#f2ff00"/><rect x="1312" y="430" width="32" height="32" fill="#f7ff00"/><rect x="1344" y="430" width="32" height="32" fill="#fcff00"/><rect x="1376" y="430" width="32" height="32" fill="#fffd00"/><rect x="1408" y="430" width="32" height="32" fill="#fff800"/><rect x="1440" y="430" width="32" height="32" fill="#fff400"/><rect x="1472" y="430" width="32" height="32" fill="#fff000"/><rect x="1504" y="430" width="32" height="32" fill="#ffec00"/><rect x="1536" y="430" width="32" height="32" fill="#ffe800"/><rect x="1568" y="430" width="32" height="32" fill="#ffe500"/><rect x="1600" y="430" width="32" height="32" fill="#ffe200"/><rect x="1632" y="430" width="32" height="32" fill="#ffde00"/><rect x="480" y="462" width="32" height="32" fill="#00ffb6"/><rect x="512" y="462" width="32" height="32" fill="#00ffb2"/><rect x="544" y="462" width="32" height="32" fill="#00ffae"/><rect x="576" y="462" width="32" height="32" fill="#00ffa8"/><rect x="608" y="462" width="32" height="32" fill="#00ffa2"/><rect x="640" y="462" width="32" height="32" fill="#00ff9b"/><rect x="672" y="462" width="32" height="32" fill="#00ff92"/><rect x="704" y="462" width="32" height="32" fill="#00ff87"/><rect x="736" y="462" width="32" height="32" fill="#00ff79"/><rect x="768" y="462" width="32" height="32" fill="#00ff63"/><rect x="800" y="462" width="32" height="32" fill="#00ff31"/><rect x="832" y="462" width="32" height="32" fill="#5cff00"/><rect x="864" y="462" width="32" height="32" fill="#78ff00"/><rect x="896" y="462" width="32" height="32" fill="#8bff00"/><rect x="928" y="462" width="32" height="32" fill="#9aff00"/><rect x="960" y="462" width="32" height="32" fill="#a7ff00"/><rect x="992" y="462" width="32" height="32" fill="#b2ff00"/><rect x="1024" y="462" width="32" height="32" fill="#bcff00"/><rect x="1056" y="462" width="32" height="32" fill="#c5ff00"/><rect x="1088" y="462" width="32" height="32" fill="#cdff00"/><rect x="1120" y="462" width="32" height="32" fill="#d5ff00"/><rect x="1152" y="462" width="32" height="32" fill="#dcff00"/><rect x="1184" y="462" width="32" height="32" fill="#e3ff00"/><rect x="1216" y="462" width="32" height="32" fill="#e9ff00"/><rect x="1248" y="462" width="32" height="32" fill="#f0ff00"/><rect x="1280" y="462" width="32" height="32" fill="#f5ff00"/><rect x="1312" y="462" width="32" height="32" fill="#fbff00"/><rect x="1344" y="462" width="32" height="32" fill="#fffe00"/><rect x="1376" y="462" width="32" height="32" fill="#fff900"/><rect x="1408" y="462" width="32" height="32" fill="#fff400"/><rect x="1440" y="462" width="32" height="32" fill="#fff000"/><rect x="1472" y="462" width="32" height="32" fill="#ffec00"/><rect x="1504" y="462" width="32" height="32" fill="#ffe800"/><rect x="1536" y="462" width="32" height="32" fill="#ffe400"/><rect x="1568" y="462" width="32" height="32" fill="#ffe100"/><rect x="1600" y="462" width="32" height="32" fill="#ffde00"/><rect x="1632" y="462" width="32" height="32" fill="#ffdb00"/><rect x="480" y="494" width="32" height="32" fill="#00ffb9"/><rect x="512" y="494" width="32" height="32" fill="#00ffb5"/><rect x="544" y="494" width="32" height="32" fill="#00ffb0"/><rect x="576" y="494" width="32" height="32" fill="#00ffab"/><rect x="608" y="494" width="32" height="32" fill="#00ffa5"/><rect x="640" y="494" width="32" height="32" fill="#00ff9e"/><rect x="672" y="494" width="32" height="32" fill="#00ff95"/><rect x="704" y="494" width="32" height="32" fill="#00ff8a"/><rect x="736" y="494" width="32" height="32" fill="#00ff7c"/><rect x="768" y="494" width="32" height="32" fill="#00ff66"/><rect x="800" y="494" width="32" height="32" fill="#00ff38"/><rect x="832" y="494" width="32" height="32" fill="#5bff00"/><rect x="864" y="494" width="32" height="32" fill="#79ff00"/><rect x="896" y="494" width="32" height="32" fill="#8dff00"/><rect x="928" y="494" width="32" height="32" fill="#9cff00"/><rect x="960" y="494" width="32" height="32" fill="#a9ff00"/><rect x="992" y="494" width="32" height="32" fill="#b5ff00"/><rect x="1024" y="494" width="32" height="32" fill="#bfff00"/><rect x="1056" y="494" width="32" height="32" fill="#c8ff00"/><rect x="1088" y="494" width="32" height="32" fill="#d1ff00"/><rect x="1120" y="494" width="32" height="32" fill="#d8ff00"/><rect x="1152" y="494" width="32" height="32" fill="#e0ff00"/><rect x="1184" y="494" width="32" height="32" fill="#e7ff00"/><rect x="1216" y="494" width="32" height="32" fill="#edff00"/><rect x="1248" y="494" width="32" height="32" fill="#f4ff00"/><rect x="1280" y="494" width="32" height="32" fill="#faff00"/><rect x="1312" y="494" width="32" height="32" fill="#ffff00"/><rect x="1344" y="494" width="32" height="32" fill="#fff900"/><rect x="1376" y="494" width="32" height="32" fill="#fff400"/><rect x="1408" y="494" width="32" height="32" fill="#fff000"/><rect x="1440" y="494" width="32" height="32" fill="#ffec00"/><rect x="1472" y="494" width="32" height="32" fill="#ffe800"/><rect x="1504" y="494" width="32" height="32" fill="#ffe400"/><rect x="1536" y="494" width="32" height="32" fill="#ffe000"/><rect x="1568" y="494" width="32" height="32" fill="#ffdd00"/><rect x="1600" y="494" width="32" height="32" fill="#ffda00"/><rect x="1632" y="494" width="32" height="32" fill="#ffd700"/><rect x="480" y="526" width="32" height="32" fill="#00ffbb"/><rect x="512" y="526" width="32" height="32" fill="#00ffb7"/><rect x="544" y="526" width="32" height="32" fill="#00ffb3"/><rect x="576" y="526" width="32" height="32" fill="#00ffad"/><rect x="608" y="526" width="32" height="32" fill="#00ffa7"/><rect x="640" y="526" width="32" height="32" fill="#00ffa0"/><rect x="672" y="526" width="32" height="32" fill="#00ff98"/><rect x="704" y="526" width="32" height="32" fill="#00ff8d"/><rect x="736" y="526" width="32" height="32" fill="#00ff7f"/><rect x="768" y="526" width="32" height="32" fill="#00ff6a"/><rect x="800" y="526" width="32" height="32" fill="#00ff3f"/><rect x="832" y="526" width="32" height="32" fill="#5bff00"/><rect x="864" y="526" width="32" height="32" fill="#7aff00"/><rect x="896" y="526" width="32" height="32" fill="#8eff00"/><rect x="928" y="526" width="32" height="32" fill="#9eff00"/><rect x="960" y="526" width="32" height="32" fill="#acff00"/><rect x="992" y="526" width="32" height="32" fill="#b7ff00"/><rect x="1024" y="526" width="32" height="32" fill="#c2ff00"/><rect x="1056" y="526" width="32" height="32" fill="#cbff00"/><rect x="1088" y="526" width="32" height="32" fill="#d4ff00"/><rect x="1120" y="526" width="32" height="32" fill="#dcff00"/><rect x="1152" y="526" width="32" height="32" fill="#e4ff00"/><rect x="1184" y="526" width="32" height="32" fill="#ebff00"/><rect x="1216" y="526" width="32" height="32" fill="#f2ff00"/><rect x="1248" y="526" width="32" height="32" fill="#f8ff00"/><rect x="1280" y="526" width="32" height="32" fill="#feff00"/><rect x="1312" y="526" width="32" height="32" fill="#fffa00"/><rect x="1344" y="526" width="32" height="32" fill="#fff500"/><rect x="1376" y="526" width="32" height="32" fill="#fff000"/><rect x="1408" y="526" width="32" height="32" fill="#ffec00"/><rect x="1440" y="526" width="32" height="32" fill="#ffe700"/><rect x="1472" y="526" width="32" height="32" fill="#ffe300"/><rect x="1504" y="526" width="32" height="32" fill="#ffe000"/><rect x="1536" y="526" width="32" height="32" fill="#ffdc00"/><rect x="1568" y="526" width="32" height="32" fill="#ffd900"/><rect x="1600" y="526" width="32" height="32" fill="#ffd600"/><rect x="1632" y="526" width="32" height="32" fill="#ffd300"/><rect x="480" y="558" width="32" height="32" fill="#00ffbe"/><rect x="512" y="558" width="32" height="32" fill="#00ffba"/><rect x="544" y="558" width="32" height="32" fill="#00ffb5"/><rect x="576" y="558" width="32" height="32" fill="#00ffb0"/><rect x="608" y="558" width="32" height="32" fill="#00ffaa"/><rect x="640" y="558" width="32" height="32" fill="#00ffa3"/><rect x="672" y="558" width="32" height="32" fill="#00ff9b"/><rect x="704" y="558" width="32" height="32" fill="#00ff90"/><rect x="736" y="558" width="32" height="32" fill="#00ff82"/><rect x="768" y="558" width="32" height="32" fill="#00ff6d"/><rect x="800" y="558" width="32" height="32" fill="#00ff45"/><rect x="832" y="558" width="32" height="32" fill="#5aff00"/><rect x="864" y="558" width="32" height="32" fill="#7bff00"/><rect x="896" y="558" width="32" height="32" fill="#90ff00"/><rect x="928" y="558" width="32" height="32" fill="#a1ff00"/><rect x="960" y="558" width="32" height="32" fill="#afff00"/><rect x="992" y="558" width="32" height="32" fill="#bbff00"/><rect x="1024" y="558" width="32" height="32" fill="#c5ff00"/><rect x="1056" y="558" width="32" height="32" fill="#cfff00"/><rect x="1088" y="558" width="32" height="32" fill="#d8ff00"/><rect x="1120" y="558" width="32" height="32" fill="#e0ff00"/><rect x="1152" y="558" width="32" height="32" fill="#e8ff00"/><rect x="1184" y="558" width="32" height="32" fill="#efff00"/><rect x="1216" y="558" width="32" height="32" fill="#f6ff00"/><rect x="1248" y="558" width="32" height="32" fill="#fdff00"/><rect x="1280" y="558" width="32" height="32" fill="#fffb00"/><rect x="1312" y="558" width="32" height="32" fill="#fff500"/><rect x="1344" y="558" width="32" height="32" fill="#fff000"/><rect x="1376" y="558" width="32" height="32" fill="#ffeb00"/><rect x="1408" y="558" width="32" height="32" fill="#ffe700"/><rect x="1440" y="558" width="32" height="32" fill="#ffe300"/><rect x="1472" y="558" width="32" height="32" fill="#ffdf00"/><rect x="1504" y="558" width="32" height="32" fill="#ffdb00"/><rect x="1536" y="558" width="32" height="32" fill="#ffd800"/><rect x="1568" y="558" width="32" height="32" fill="#ffd500"/><rect x="1600" y="558" width="32" height="32" fill="#ffd200"/><rect x="1632" y="558" width="32" height="32" fill="#ffcf00"/><rect x="480" y="590" width="32" height="32" fill="#00ffc0"/><rect x="512" y="590" width="32" height="32" fill="#00ffbc"/><rect x="544" y="590" width="32" height="32" fill="#00ffb8"/><rect x="576" y="590" width="32" height="32" fill="#00ffb3"/><rect x="608" y="590" width="32" height="32" fill="#00ffad"/><rect x="640" y="590" width="32" height="32" fill="#00ffa6"/><rect x="672" y="590" width="32" height="32" fill="#00ff9e"/><rect x="704" y="590" width="32" height="32" fill="#00ff93"/><rect x="736" y="590" width="32" height="32" fill="#00ff85"/><rect x="768" y="590" width="32" height="32" fill="#00ff71"/><rect x="800" y="590" width="32" height="32" fill="#00ff4a"/><rect x="832" y="590" width="32" height="32" fill="#59ff00"/><rect x="864" y="590" width="32" height="32" fill="#7cff00"/><rect x="896" y="590" width="32" height="32" fill="#92ff00"/><rect x="928" y="590" width="32" height="32" fill="#a3ff00"/><rect x="960" y="590" width="32" height="32" fill="#b2ff00"/><rect x="992" y="590" width="32" height="32" fill="#beff00"/><rect x="1024" y="590" width="32" height="32" fill="#c9ff00"/><rect x="1056" y="590" width="32" height="32" fill="#d3ff00"/><rect x="1088" y="590" width="32" height="32" fill="#dcff00"/><rect x="1120" y="590" width="32" height="32" fill="#e5ff00"/><rect x="1152" y="590" width="32" height="32" fill="#edff00"/><rect x="1184" y="590" width="32" height="32" fill="#f4ff00"/><rect x="1216" y="590" width="32" height="32" fill="#fbff00"/><rect x="1248" y="590" width="32" height="32" fill="#fffc00"/><rect x="1280" y="590" width="32" height="32" fill="#fff600"/><rect x="1312" y="590" width="32" height="32" fill="#fff000"/><rect x="1344" y="590" width="32" height="32" fill="#ffeb00"/><rect x="1376" y="590" width="32" height="32" fill="#ffe700"/><rect x="1408" y="590" width="32" height="32" fill="#ffe200"/><rect x="1440" y="590" width="32" height="32" fill="#ffde00"/><rect x="1472" y="590" width="32" height="32" fill="#ffda00"/><rect x="1504" y="590" width="32" height="32" fill="#ffd700"/><rect x="1536" y="590" width="32" height="32" fill="#ffd400"/><rect x="1568" y="590" width="32" height="32" fill="#ffd000"/><rect x="1600" y="590" width="32" height="32" fill="#ffcd00"/><rect x="1632" y="590" width="32" height="32" fill="#ffcb00"/><rect x="480" y="622" width="32" height="32" fill="#00ffc3"/><rect x="512" y="622" width="32" height="32" fill="#00ffbf"/><rect x="544" y="622" width="32" height="32" fill="#00ffbb"/><rect x="576" y="622" width="32" height="32" fill="#00ffb6"/><rect x="608" y="622" width="32" height="32" fill="#00ffb0"/><rect x="640" y="622" width="32" height="32" fill="#00ffa9"/><rect x="672" y="622" width="32" height="32" fill="#00ffa1"/><rect x="704" y="622" width="32" height="32" fill="#00ff97"/><rect x="736" y="622" width="32" height="32" fill="#00ff89"/><rect x="768" y="622" width="32" height="32" fill="#00ff75"/><rect x="800" y="622" width="32" height="32" fill="#00ff50"/><rect x="832" y="622" width="32" height="32" fill="#57ff00"/><rect x="864" y="622" width="32" height="32" fill="#7dff00"/><rect x="896" y="622" width="32" height="32" fill="#94ff00"/><rect x="928" y="622" width="32" height="32" fill="#a6ff00"/><rect x="960" y="622" width="32" height="32" fill="#b5ff00"/><rect x="992" y="622" width="32" height="32" fill="#c2ff00"/><rect x="1024" y="622" width="32" height="32" fill="#cdff00"/><rect x="1056" y="622" width="32" height="32" fill="#d7ff00"/><rect x="1088" y="622" width="32" height="32" fill="#e1ff00"/><rect x="1120" y="622" width="32" height="32" fill="#eaff00"/><rect x="1152" y="622" width="32" height="32" fill="#f2ff00"/><rect x="1184" y="622" width="32" height="32" fill="#f9ff00"/><rect x="1216" y="622" width="32" height="32" fill="#fffd00"/><rect x="1248" y="622" width="32" height="32" fill="#fff700"/><rect x="1280" y="622" width="32" height="32" fill="#fff100"/><rect x="1312" y="622" width="32" height="32" fill="#ffeb00"/><rect x="1344" y="622" width="32" height="32" fill="#ffe600"/><rect x="1376" y="622" width="32" height="32" fill="#ffe200"/><rect x="1408" y="622" width="32" height="32" fill="#ffdd00"/><rect x="1440" y="622" width="32" height="32" fill="#ffd900"/><rect x="1472" y="622" width="32" height="32" fill="#ffd600"/><rect x="1504" y="622" width="32" height="32" fill="#ffd200"/><rect x="1536" y="622" width="32" height="32" fill="#ffcf00"/><rect x="1568" y="622" width="32" height="32" fill="#ffcc00"/><rect x="1600" y="622" width="32" height="32" fill="#ffc900"/><rect x="1632" y="622" width="32" height="32" fill="#ffc600"/><rect x="480" y="654" width="32" height="32" fill="#00ffc6"/><rect x="512" y="654" width="32" height="32" fill="#00ffc2"/><rect x="544" y="654" width="32" height="32" fill="#00ffbe"/><rect x="576" y="654" width="32" height="32" fill="#00ffb9"/><rect x="608" y="654" width="32" height="32" fill="#00ffb4"/><rect x="640" y="654" width="32" height="32" fill="#00ffad"/><rect x="672" y="654" width="32" height="32" fill="#00ffa5"/><rect x="704" y="654" width="32" height="32" fill="#00ff9a"/><rect x="736" y="654" width="32" height="32" fill="#00ff8d"/><rect x="768" y="654" width="32" height="32" fill="#00ff79"/><rect x="800" y="654" width="32" height="32" fill="#00ff56"/><rect x="832" y="654" width="32" height="32" fill="#5aff2b"/><rect x="864" y="654" width="32" height="32" fill="#7eff00"/><rect x="896" y="654" width="32" height="32" fill="#97ff00"/><rect x="928" y="654" width="32" height="32" fill="#a9ff00"/><rect x="960" y="654" width="32" height="32" fill="#b9ff00"/><rect x="992" y="654" width="32" height="32" fill="#c6ff00"/><rect x="1024" y="654" width="32" height="32" fill="#d2ff00"/><rect x="1056" y="654" width="32" height="32" fill="#dcff00"/><rect x="1088" y="654" width="32" height="32" fill="#e6ff00"/><rect x="1120" y="654" width="32" height="32" fill="#efff00"/><rect x="1152" y="654" width="32" height="32" fill="#f7ff00"/><rect x="1184" y="654" width="32" height="32" fill="#ffff00"/><rect x="1216" y="654" width="32" height="32" fill="#fff800"/><rect x="1248" y="654" width="32" height="32" fill="#fff100"/><rect x="1280" y="654" width="32" height="32" fill="#ffeb00"/><rect x="1312" y="654" width="32" height="32" fill="#ffe600"/><rect x="1344" y="654" width="32" height="32" fill="#ffe100"/><rect x="1376" y="654" width="32" height="32" fill="#ffdc00"/><rect x="1408" y="654" width="32" height="32" fill="#ffd800"/><rect x="1440" y="654" width="32" height="32" fill="#ffd400"/><rect x="1472" y="654" width="32" height="32" fill="#ffd100"/><rect x="1504" y="654" width="32" height="32" fill="#ffcd00"/><rect x="1536" y="654" width="32" height="32" fill="#ffca00"/><rect x="1568" y="654" width="32" height="32" fill="#ffc700"/><rect x="1600" y="654" width="32" height="32" fill="#ffc400"/><rect x="1632" y="654" width="32" height="32" fill="#ffc100"/><rect x="480" y="686" width="32" height="32" fill="#00ffc9"/><rect x="512" y="686" width="32" height="32" fill="#00ffc5"/><rect x="544" y="686" width="32" height="32" fill="#00ffc1"/><rect x="576" y="686" width="32" height="32" fill="#00ffbc"/><rect x="608" y="686" width="32" height="32" fill="#00ffb7"/><rect x="640" y="686" width="32" height="32" fill="#00ffb0"/><rect x="672" y="686" width="32" height="32" fill="#00ffa8"/><rect x="704" y="686" width="32" height="32" fill="#00ff9e"/><rect x="736" y="686" width="32" height="32" fill="#00ff91"/><rect x="768" y="686" width="32" height="32" fill="#00ff7e"/><rect x="800" y="686" width="32" height="32" fill="#2aff5e"/><rect x="832" y="686" width="32" height="32" fill="#69ff52"/><rect x="864" y="686" width="32" height="32" fill="#85ff41"/><rect x="896" y="686" width="32" height="32" fill="#99ff00"/><rect x="928" y="686" width="32" height="32" fill="#adff00"/><rect x="960" y="686" width="32" height="32" fill="#bdff00"/><rect x="992" y="686" width="32" height="32" fill="#caff00"/><rect x="1024" y="686" width="32" height="32" fill="#d7ff00"/><rect x="1056" y="686" width="32" height="32" fill="#e1ff00"/><rect x="1088" y="686" width="32" height="32" fill="#ecff00"/><rect x="1120" y="686" width="32" height="32" fill="#f5ff00"/><rect x="1152" y="686" width="32" height="32" fill="#feff00"/><rect x="1184" y="686" width="32" height="32" fill="#fff900"/><rect x="1216" y="686" width="32" height="32" fill="#fff100"/><rect x="1248" y="686" width="32" height="32" fill="#ffeb00"/><rect x="1280" y="686" width="32" height="32" fill="#ffe500"/><rect x="1312" y="686" width="32" height="32" fill="#ffe000"/><rect x="1344" y="686" width="32" height="32" fill="#ffdb00"/><rect x="1376" y="686" width="32" height="32" fill="#ffd700"/><rect x="1408" y="686" width="32" height="32" fill="#ffd300"/><rect x="1440" y="686" width="32" height="32" fill="#ffcf00"/><rect x="1472" y="686" width="32" height="32" fill="#ffcb00"/><rect x="1504" y="686" width="32" height="32" fill="#ffc800"/><rect x="1536" y="686" width="32" height="32" fill="#ffc500"/><rect x="1568" y="686" width="32" height="32" fill="#ffc200"/><rect x="1600" y="686" width="32" height="32" fill="#ffbf00"/><rect x="1632" y="686" width="32" height="32" fill="#ffbc00"/><rect x="480" y="718" width="32" height="32" fill="#00ffcc"/><rect x="512" y="718" width="32" height="32" fill="#00ffc8"/><rect x="544" y="718" width="32" height="32" fill="#00ffc4"/><rect x="576" y="718" width="32" height="32" fill="#00ffc0"/><rect x="608" y="718" width="32" height="32" fill="#00ffbb"/><rect x="640" y="718" width="32" height="32" fill="#00ffb4"/><rect x="672" y="718" width="32" height="32" fill="#00ffac"/><rect x="704" y="718" width="32" height="32" fill="#00ffa3"/><rect x="736" y="718" width="32" height="32" fill="#00ff95"/><rect x="768" y="718" width="32" height="32" fill="#00ff82"/><rect x="800" y="718" width="32" height="32" fill="#4eff70"/><rect x="832" y="718" width="32" height="32" fill="#76ff67"/><rect x="864" y="718" width="32" height="32" fill="#8fff5d"/><rect x="896" y="718" width="32" height="32" fill="#a2ff4f"/><rect x="928" y="718" width="32" height="32" fill="#b2ff3a"/><rect x="960" y="718" width="32" height="32" fill="#c1ff00"/><rect x="992" y="718" width="32" height="32" fill="#d0ff00"/><rect x="1024" y="718" width="32" height="32" fill="#dcff00"/><rect x="1056" y="718" width="32" height="32" fill="#e7ff00"/><rect x="1088" y="718" width="32" height="32" fill="#f2ff00"/><rect x="1120" y="718" width="32" height="32" fill="#fbff00"/><rect x="1152" y="718" width="32" height="32" fill="#fffa00"/><rect x="1184" y="718" width="32" height="32" fill="#fff200"/><rect x="1216" y="718" width="32" height="32" fill="#ffeb00"/><rect x="1248" y="718" width="32" height="32" fill="#ffe500"/><rect x="1280" y="718" width="32" height="32" fill="#ffdf00"/><rect x="1312" y="718" width="32" height="32" fill="#ffda00"/><rect x="1344" y="718" width="32" height="32" fill="#ffd500"/><rect x="1376" y="718" width="32" height="32" fill="#ffd100"/><rect x="1408" y="718" width="32" height="32" fill="#ffcd00"/><rect x="1440" y="718" width="32" height="32" fill="#ffc900"/><rect x="1472" y="718" width="32" height="32" fill="#ffc600"/><rect x="1504" y="718" width="32" height="32" fill="#ffc200"/><rect x="1536" y="718" width="32" height="32" fill="#ffbf00"/><rect x="1568" y="718" width="32" height="32" fill="#ffbc00"/><rect x="1600" y="718" width="32" height="32" fill="#ffba00"/><rect x="1632" y="718" width="32" height="32" fill="#ffb700"/><rect x="480" y="750" width="32" height="32" fill="#00ffcf"/><rect x="512" y="750" width="32" height="32" fill="#00ffcc"/><rect x="544" y="750" width="32" height="32" fill="#00ffc8"/><rect x="576" y="750" width="32" height="32" fill="#00ffc4"/><rect x="608" y="750" width="32" height="32" fill="#00ffbe"/><rect x="640" y="750" width="32" height="32" fill="#00ffb8"/><rect x="672" y="750" width="32" height="32" fill="#00ffb1"/><rect x="704" y="750" width="32" height="32" fill="#00ffa7"/><rect x="736" y="750" width="32" height="32" fill="#00ff9a"/><rect x="768" y="750" width="32" height="32" fill="#00ff87"/><rect x="800" y="750" width="32" height="32" fill="#62ff7e"/><rect x="832" y="750" width="32" height="32" fill="#82ff78"/><rect x="864" y="750" width="32" height="32" fill="#99ff70"/><rect x="896" y="750" width="32" height="32" fill="#abff67"/><rect x="928" y="750" width="32" height="32" fill="#bbff5c"/><rect x="960" y="750" width="32" height="32" fill="#c9ff4c"/><rect x="992" y="750" width="32" height="32" fill="#d6ff2d"/><rect x="1024" y="750" width="32" height="32" fill="#e2ff00"/><rect x="1056" y="750" width="32" height="32" fill="#eeff00"/><rect x="1088" y="750" width="32" height="32" fill="#f9ff00"/><rect x="1120" y="750" width="32" height="32" fill="#fffb00"/><rect x="1152" y="750" width="32" height="32" fill="#fff200"/><rect x="1184" y="750" width="32" height="32" fill="#ffeb00"/><rect x="1216" y="750" width="32" height="32" fill="#ffe400"/><rect x="1248" y="750" width="32" height="32" fill="#ffde00"/><rect x="1280" y="750" width="32" height="32" fill="#ffd800"/><rect x="1312" y="750" width="32" height="32" fill="#ffd300"/><rect x="1344" y="750" width="32" height="32" fill="#ffcf00"/><rect x="1376" y="750" width="32" height="32" fill="#ffcb00"/><rect x="1408" y="750" width="32" height="32" fill="#ffc700"/><rect x="1440" y="750" width="32" height="32" fill="#ffc300"/><rect x="1472" y="750" width="32" height="32" fill="#ffc000"/><rect x="1504" y="750" width="32" height="32" fill="#ffbd00"/><rect x="1536" y="750" width="32" height="32" fill="#ffba00"/><rect x="1568" y="750" width="32" height="32" fill="#ffb700"/><rect x="1600" y="750" width="32" height="32" fill="#ffb400"/><rect x="1632" y="750" width="32" height="32" fill="#ffb200"/><rect x="480" y="782" width="32" height="32" fill="#00ffd2"/><rect x="512" y="782" width="32" height="32" fill="#00ffcf"/><rect x="544" y="782" width="32" height="32" fill="#00ffcc"/><rect x="576" y="782" width="32" height="32" fill="#00ffc7"/><rect x="608" y="782" width="32" height="32" fill="#00ffc2"/><rect x="640" y="782" width="32" height="32" fill="#00ffbd"/><rect x="672" y="782" width="32" height="32" fill="#00ffb5"/><rect x="704" y="782" width="32" height="32" fill="#00ffac"/><rect x="736" y="782" width="32" height="32" fill="#00ff9f"/><rect x="768" y="782" width="32" height="32" fill="#3aff90"/><rect x="800" y="782" width="32" height="32" fill="#71ff8b"/><rect x="832" y="782" width="32" height="32" fill="#8dff86"/><rect x="864" y="782" width="32" height="32" fill="#a2ff80"/><rect x="896" y="782" width="32" height="32" fill="#b4ff79"/><rect x="928" y="782" width="32" height="32" fill="#c3ff71"/><rect x="960" y="782" width="32" height="32" fill="#d1ff67"/><rect x="992" y="782" width="32" height="32" fill="#deff5a"/><rect x="1024" y="782" width="32" height="32" fill="#eaff46"/><rect x="1056" y="782" width="32" height="32" fill="#f6ff00"/><rect x="1088" y="782" width="32" height="32" fill="#fffd00"/><rect x="1120" y="782" width="32" height="32" fill="#fff300"/><rect x="1152" y="782" width="32" height="32" fill="#ffea00"/><rect x="1184" y="782" width="32" height="32" fill="#ffe300"/><rect x="1216" y="782" width="32" height="32" fill="#ffdc00"/><rect x="1248" y="782" width="32" height="32" fill="#ffd700"/><rect x="1280" y="782" width="32" height="32" fill="#ffd100"/><rect x="1312" y="782" width="32" height="32" fill="#ffcc00"/><rect x="1344" y="782" width="32" height="32" fill="#ffc800"/><rect x="1376" y="782" width="32" height="32" fill="#ffc400"/><rect x="1408" y="782" width="32" height="32" fill="#ffc000"/><rect x="1440" y="782" width="32" height="32" fill="#ffbd00"/><rect x="1472" y="782" width="32" height="32" fill="#ffb900"/><rect x="1504" y="782" width="32" height="32" fill="#ffb600"/><rect x="1536" y="782" width="32" height="32" fill="#ffb300"/><rect x="1568" y="782" width="32" height="32" fill="#ffb100"/><rect x="1600" y="782" width="32" height="32" fill="#ffae00"/><rect x="1632" y="782" width="32" height="32" fill="#ffac00"/><rect x="480" y="814" width="32" height="32" fill="#00ffd6"/><rect x="512" y="814" width="32" height="32" fill="#00ffd3"/><rect x="544" y="814" width="32" height="32" fill="#00ffcf"/><rect x="576" y="814" width="32" height="32" fill="#00ffcc"/><rect x="608" y="814" width="32" height="32" fill="#00ffc7"/><rect x="640" y="814" width="32" height="32" fill="#00ffc1"/><rect x="672" y="814" width="32" height="32" fill="#00ffba"/><rect x="704" y="814" width="32" height="32" fill="#00ffb1"/><rect x="736" y="814" width="32" height="32" fill="#00ffa5"/><rect x="768" y="814" width="32" height="32" fill="#57ff9b"/><rect x="800" y="814" width="32" height="32" fill="#7fff97"/><rect x="832" y="814" width="32" height="32" fill="#98ff93"/><rect x="864" y="814" width="32" height="32" fill="#acff8e"/><rect x="896" y="814" width="32" height="32" fill="#bdff88"/><rect x="928" y="814" width="32" height="32" fill="#ccff82"/><rect x="960" y="814" width="32" height="32" fill="#daff7a"/><rect x="992" y="814" width="32" height="32" fill="#e7ff71"/><rect x="1024" y="814" width="32" height="32" fill="#f3ff66"/><rect x="1056" y="814" width="32" height="32" fill="#ffff57"/><rect x="1088" y="814" width="32" height="32" fill="#fff43c"/><rect x="1120" y="814" width="32" height="32" fill="#ffea00"/><rect x="1152" y="814" width="32" height="32" fill="#ffe200"/><rect x="1184" y="814" width="32" height="32" fill="#ffdb00"/><rect x="1216" y="814" width="32" height="32" fill="#ffd400"/><rect x="1248" y="814" width="32" height="32" fill="#ffcf00"/><rect x="1280" y="814" width="32" height="32" fill="#ffca00"/><rect x="1312" y="814" width="32" height="32" fill="#ffc500"/><rect x="1344" y="814" width="32" height="32" fill="#ffc100"/><rect x="1376" y="814" width="32" height="32" fill="#ffbd00"/><rect x="1408" y="814" width="32" height="32" fill="#ffb900"/><rect x="1440" y="814" width="32" height="32" fill="#ffb600"/><rect x="1472" y="814" width="32" height="32" fill="#ffb200"/><rect x="1504" y="814" width="32" height="32" fill="#ffaf00"/><rect x="1536" y="814" width="32" height="32" fill="#ffad00"/><rect x="1568" y="814" width="32" height="32" fill="#ffaa00"/><rect x="1600" y="814" width="32" height="32" fill="#ffa800"/><rect x="1632" y="814" width="32" height="32" fill="#ffa500"/><rect x="480" y="846" width="32" height="32" fill="#00ffda"/><rect x="512" y="846" width="32" height="32" fill="#00ffd7"/><rect x="544" y="846" width="32" height="32" fill="#00ffd4"/><rect x="576" y="846" width="32" height="32" fill="#00ffd0"/><rect x="608" y="846" width="32" height="32" fill="#00ffcc"/><rect x="640" y="846" width="32" height="32" fill="#00ffc6"/><rect x="672" y="846" width="32" height="32" fill="#00ffbf"/><rect x="704" y="846" width="32" height="32" fill="#00ffb7"/><rect x="736" y="846" width="32" height="32" fill="#00ffab"/><rect x="768" y="846" width="32" height="32" fill="#6bffa6"/><rect x="800" y="846" width="32" height="32" fill="#90ffa7"/><rect x="832" y="846" width="32" height="32" fill="#a6ffa3"/><rect x="864" y="846" width="32" height="32" fill="#b5ff9b"/><rect x="896" y="846" width="32" height="32" fill="#c6ff96"/><rect x="928" y="846" width="32" height="32" fill="#d5ff91"/><rect x="960" y="846" width="32" height="32" fill="#e3ff8b"/><rect x="992" y="846" width="32" height="32" fill="#f0ff84"/><rect x="1024" y="846" width="32" height="32" fill="#fdff7c"/><rect x="1056" y="846" width="32" height="32" fill="#fff66e"/><rect x="1088" y="846" width="32" height="32" fill="#ffeb5e"/><rect x="1120" y="846" width="32" height="32" fill="#ffe24a"/><rect x="1152" y="846" width="32" height="32" fill="#ffd929"/><rect x="1184" y="846" width="32" height="32" fill="#ffd200"/><rect x="1216" y="846" width="32" height="32" fill="#ffcc00"/><rect x="1248" y="846" width="32" height="32" fill="#ffc600"/><rect x="1280" y="846" width="32" height="32" fill="#ffc100"/><rect x="1312" y="846" width="32" height="32" fill="#ffbd00"/><rect x="1344" y="846" width="32" height="32" fill="#ffb800"/><rect x="1376" y="846" width="32" height="32" fill="#ffb500"/><rect x="1408" y="846" width="32" height="32" fill="#ffb100"/><rect x="1440" y="846" width="32" height="32" fill="#ffae00"/><rect x="1472" y="846" width="32" height="32" fill="#ffab00"/><rect x="1504" y="846" width="32" height="32" fill="#ffa800"/><rect x="1536" y="846" width="32" height="32" fill="#ffa500"/><rect x="1568" y="846" width="32" height="32" fill="#ffa300"/><rect x="1600" y="846" width="32" height="32" fill="#ffa000"/><rect x="1632" y="846" width="32" height="32" fill="#ff9e00"/><rect x="480" y="878" width="32" height="32" fill="#00ffde"/><rect x="512" y="878" width="32" height="32" fill="#00ffdb"/><rect x="544" y="878" width="32" height="32" fill="#00ffd8"/><rect x="576" y="878" width="32" height="32" fill="#00ffd5"/><rect x="608" y="878" width="32" height="32" fill="#00ffd1"/><rect x="640" y="878" width="32" height="32" fill="#00ffcb"/><rect x="672" y="878" width="32" height="32" fill="#00ffc5"/><rect x="704" y="878" width="32" height="32" fill="#00ffbd"/><rect x="736" y="878" width="32" height="32" fill="#6bffc3"/><rect x="768" y="878" width="32" height="32" fill="#a3ffc9"/><rect x="800" y="878" width="32" height="32" fill="#b9ffc9"/><rect x="832" y="878" width="32" height="32" fill="#c6ffc5"/><rect x="864" y="878" width="32" height="32" fill="#cfffbd"/><rect x="896" y="878" width="32" height="32" fill="#d7ffb3"/><rect x="928" y="878" width="32" height="32" fill="#dfffa2"/><rect x="960" y="878" width="32" height="32" fill="#ecff9a"/><rect x="992" y="878" width="32" height="32" fill="#faff95"/><rect x="1024" y="878" width="32" height="32" fill="#fff88b"/><rect x="1056" y="878" width="32" height="32" fill="#ffec7d"/><rect x="1088" y="878" width="32" height="32" fill="#ffe270"/><rect x="1120" y="878" width="32" height="32" fill="#ffd962"/><rect x="1152" y="878" width="32" height="32" fill="#ffd153"/><rect x="1184" y="878" width="32" height="32" fill="#ffc93e"/><rect x="1216" y="878" width="32" height="32" fill="#ffc200"/><rect x="1248" y="878" width="32" height="32" fill="#ffbd00"/><rect x="1280" y="878" width="32" height="32" fill="#ffb800"/><rect x="1312" y="878" width="32" height="32" fill="#ffb400"/><rect x="1344" y="878" width="32" height="32" fill="#ffb000"/><rect x="1376" y="878" width="32" height="32" fill="#ffac00"/><rect x="1408" y="878" width="32" height="32" fill="#ffa900"/><rect x="1440" y="878" width="32" height="32" fill="#ffa600"/><rect x="1472" y="878" width="32" height="32" fill="#ffa300"/><rect x="1504" y="878" width="32" height="32" fill="#ffa000"/><rect x="1536" y="878" width="32" height="32" fill="#ff9d00"/><rect x="1568" y="878" width="32" height="32" fill="#ff9b00"/><rect x="1600" y="878" width="32" height="32" fill="#ff9900"/><rect x="1632" y="878" width="32" height="32" fill="#ff9600"/><rect x="480" y="910" width="32" height="32" fill="#00ffe2"/><rect x="512" y="910" width="32" height="32" fill="#00ffe0"/><rect x="544" y="910" width="32" height="32" fill="#00ffdd"/><rect x="576" y="910" width="32" height="32" fill="#00ffda"/><rect x="608" y="910" width="32" height="32" fill="#00ffd6"/><rect x="640" y="910" width="32" height="32" fill="#00ffd1"/><rect x="672" y="910" width="32" height="32" fill="#04ffcc"/><rect x="704" y="910" width="32" height="32" fill="#4affd5"/><rect x="736" y="910" width="32" height="32" fill="#a6ffdb"/><rect x="768" y="910" width="32" height="32" fill="#c5ffde"/><rect x="800" y="910" width="32" height="32" fill="#ceffdb"/><rect x="832" y="910" width="32" height="32" fill="#d6ffd6"/><rect x="864" y="910" width="32" height="32" fill="#deffd1"/><rect x="896" y="910" width="32" height="32" fill="#e5ffc9"/><rect x="928" y="910" width="32" height="32" fill="#edffbd"/><rect x="960" y="910" width="32" height="32" fill="#f7ffae"/><rect x="992" y="910" width="32" height="32" fill="#fffaa1"/><rect x="1024" y="910" width="32" height="32" fill="#ffee95"/><rect x="1056" y="910" width="32" height="32" fill="#ffe389"/><rect x="1088" y="910" width="32" height="32" fill="#ffd97e"/><rect x="1120" y="910" width="32" height="32" fill="#ffd172"/><rect x="1152" y="910" width="32" height="32" fill="#ffc866"/><rect x="1184" y="910" width="32" height="32" fill="#ffc159"/><rect x="1216" y="910" width="32" height="32" fill="#ffba49"/><rect x="1248" y="910" width="32" height="32" fill="#ffb332"/><rect x="1280" y="910" width="32" height="32" fill="#ffae00"/><rect x="1312" y="910" width="32" height="32" fill="#ffaa00"/><rect x="1344" y="910" width="32" height="32" fill="#ffa600"/><rect x="1376" y="910" width="32" height="32" fill="#ffa200"/><rect x="1408" y="910" width="32" height="32" fill="#ff9f00"/><rect x="1440" y="910" width="32" height="32" fill="#ff9c00"/><rect x="1472" y="910" width="32" height="32" fill="#ff9900"/><rect x="1504" y="910" width="32" height="32" fill="#ff9700"/><rect x="1536" y="910" width="32" height="32" fill="#ff9400"/><rect x="1568" y="910" width="32" height="32" fill="#ff9200"/><rect x="1600" y="910" width="32" height="32" fill="#ff9000"/><rect x="1632" y="910" width="32" height="32" fill="#ff8e00"/><rect x="480" y="942" width="32" height="32" fill="#00ffe6"/><rect x="512" y="942" width="32" height="32" fill="#00ffe4"/><rect x="544" y="942" width="32" height="32" fill="#00ffe2"/><rect x="576" y="942" width="32" height="32" fill="#00ffdf"/><rect x="608" y="942" width="32" height="32" fill="#00ffdc"/><rect x="640" y="942" width="32" height="32" fill="#00ffd8"/><rect x="672" y="942" width="32" height="32" fill="#49ffdf"/><rect x="704" y="942" width="32" height="32" fill="#7bffe4"/><rect x="736" y="942" width="32" height="32" fill="#bdffe6"/><rect x="768" y="942" width="32" height="32" fill="#cdffe5"/><rect x="800" y="942" width="32" height="32" fill="#d5ffe1"/><rect x="832" y="942" width="32" height="32" fill="#ddffde"/><rect x="864" y="942" width="32" height="32" fill="#e5ffd9"/><rect x="896" y="942" width="32" height="32" fill="#edffd5"/><rect x="928" y="942" width="32" height="32" fill="#f7ffd0"/><rect x="960" y="942" width="32" height="32" fill="#fffdc3"/><rect x="992" y="942" width="32" height="32" fill="#fff0ab"/><rect x="1024" y="942" width="32" height="32" fill="#ffe49d"/><rect x="1056" y="942" width="32" height="32" fill="#ffda92"/><rect x="1088" y="942" width="32" height="32" fill="#ffd088"/><rect x="1120" y="942" width="32" height="32" fill="#ffc87e"/><rect x="1152" y="942" width="32" height="32" fill="#ffc073"/><rect x="1184" y="942" width="32" height="32" fill="#ffb969"/><rect x="1216" y="942" width="32" height="32" fill="#ffb25d"/><rect x="1248" y="942" width="32" height="32" fill="#ffab50"/><rect x="1280" y="942" width="32" height="32" fill="#ffa540"/><rect x="1312" y="942" width="32" height="32" fill="#ff9f22"/><rect x="1344" y="942" width="32" height="32" fill="#ff9b00"/><rect x="1376" y="942" width="32" height="32" fill="#ff9700"/><rect x="1408" y="942" width="32" height="32" fill="#ff9400"/><rect x="1440" y="942" width="32" height="32" fill="#ff9200"/><rect x="1472" y="942" width="32" height="32" fill="#ff8f00"/><rect x="1504" y="942" width="32" height="32" fill="#ff8d00"/><rect x="1536" y="942" width="32" height="32" fill="#ff8a00"/><rect x="1568" y="942" width="32" height="32" fill="#ff8800"/><rect x="1600" y="942" width="32" height="32" fill="#ff8600"/><rect x="1632" y="942" width="32" height="32" fill="#ff8400"/><rect x="480" y="974" width="32" height="32" fill="#00ffeb"/><rect x="512" y="974" width="32" height="32" fill="#00ffea"/><rect x="544" y="974" width="32" height="32" fill="#00ffe8"/><rect x="576" y="974" width="32" height="32" fill="#00ffe5"/><rect x="608" y="974" width="32" height="32" fill="#00ffe3"/><rect x="640" y="974" width="32" height="32" fill="#30ffe5"/><rect x="672" y="974" width="32" height="32" fill="#72ffeb"/><rect x="704" y="974" width="32" height="32" fill="#aeffec"/><rect x="736" y="974" width="32" height="32" fill="#c6ffeb"/><rect x="768" y="974" width="32" height="32" fill="#d4ffeb"/><rect x="800" y="974" width="32" height="32" fill="#dcffe8"/><rect x="832" y="974" width="32" height="32" fill="#e4ffe5"/><rect x="864" y="974" width="32" height="32" fill="#ecffe2"/><rect x="896" y="974" width="32" height="32" fill="#f5ffde"/><rect x="928" y="974" width="32" height="32" fill="#ffffda"/><rect x="960" y="974" width="32" height="32" fill="#fff5cd"/><rect x="992" y="974" width="32" height="32" fill="#ffe8b9"/><rect x="1024" y="974" width="32" height="32" fill="#ffdaa5"/><rect x="1056" y="974" width="32" height="32" fill="#ffd09a"/><rect x="1088" y="974" width="32" height="32" fill="#ffc790"/><rect x="1120" y="974" width="32" height="32" fill="#ffbf87"/><rect x="1152" y="974" width="32" height="32" fill="#ffb77e"/><rect x="1184" y="974" width="32" height="32" fill="#ffb074"/><rect x="1216" y="974" width="32" height="32" fill="#ffa96b"/><rect x="1248" y="974" width="32" height="32" fill="#ffa260"/><rect x="1280" y="974" width="32" height="32" fill="#ff9c55"/><rect x="1312" y="974" width="32" height="32" fill="#ff9648"/><rect x="1344" y="974" width="32" height="32" fill="#ff9037"/><rect x="1376" y="974" width="32" height="32" fill="#ff8a00"/><rect x="1408" y="974" width="32" height="32" fill="#ff8800"/><rect x="1440" y="974" width="32" height="32" fill="#ff8500"/><rect x="1472" y="974" width="32" height="32" fill="#ff8300"/><rect x="1504" y="974" width="32" height="32" fill="#ff8100"/><rect x="1536" y="974" width="32" height="32" fill="#ff7e00"/><rect x="1568" y="974" width="32" height="32" fill="#ff7c00"/><rect x="1600" y="974" width="32" height="32" fill="#ff7b00"/><rect x="1632" y="974" width="32" height="32" fill="#ff7900"/><rect x="480" y="1006" width="32" height="32" fill="#00fff1"/><rect x="512" y="1006" width="32" height="32" fill="#00ffef"/><rect x="544" y="1006" width="32" height="32" fill="#00ffee"/><rect x="576" y="1006" width="32" height="32" fill="#00ffec"/><rect x="608" y="1006" width="32" height="32" fill="#00ffea"/><rect x="640" y="1006" width="32" height="32" fill="#56ffef"/><rect x="672" y="1006" width="32" height="32" fill="#85fff2"/><rect x="704" y="1006" width="32" height="32" fill="#bbfff1"/><rect x="736" y="1006" width="32" height="32" fill="#cefff1"/><rect x="768" y="1006" width="32" height="32" fill="#dbfff0"/><rect x="800" y="1006" width="32" height="32" fill="#e2ffef"/><rect x="832" y="1006" width="32" height="32" fill="#eaffec"/><rect x="864" y="1006" width="32" height="32" fill="#f3ffea"/><rect x="896" y="1006" width="32" height="32" fill="#fdffe7"/><rect x="928" y="1006" width="32" height="32" fill="#fff7dd"/><rect x="960" y="1006" width="32" height="32" fill="#ffedd1"/><rect x="992" y="1006" width="32" height="32" fill="#ffe1c2"/><rect x="1024" y="1006" width="32" height="32" fill="#ffd1ad"/><rect x="1056" y="1006" width="32" height="32" fill="#ffc6a1"/><rect x="1088" y="1006" width="32" height="32" fill="#ffbe98"/><rect x="1120" y="1006" width="32" height="32" fill="#ffb58f"/><rect x="1152" y="1006" width="32" height="32" fill="#ffae86"/><rect x="1184" y="1006" width="32" height="32" fill="#ffa77e"/><rect x="1216" y="1006" width="32" height="32" fill="#ffa075"/><rect x="1248" y="1006" width="32" height="32" fill="#ff996c"/><rect x="1280" y="1006" width="32" height="32" fill="#ff9363"/><rect x="1312" y="1006" width="32" height="32" fill="#ff8c59"/><rect x="1344" y="1006" width="32" height="32" fill="#ff864e"/><rect x="1376" y="1006" width="32" height="32" fill="#ff8041"/><rect x="1408" y="1006" width="32" height="32" fill="#ff7a2c"/><rect x="1440" y="1006" width="32" height="32" fill="#ff7600"/><rect x="1472" y="1006" width="32" height="32" fill="#ff7400"/><rect x="1504" y="1006" width="32" height="32" fill="#ff7200"/><rect x="1536" y="1006" width="32" height="32" fill="#ff7000"/><rect x="1568" y="1006" width="32" height="32" fill="#ff6e00"/><rect x="1600" y="1006" width="32" height="32" fill="#ff6d00"/><rect x="1632" y="1006" width="32" height="32" fill="#ff6b00"/><rect x="480" y="1038" width="32" height="32" fill="#00fff6"/><rect x="512" y="1038" width="32" height="32" fill="#00fff5"/><rect x="544" y="1038" width="32" height="32" fill="#00fff4"/><rect x="576" y="1038" width="32" height="32" fill="#00fff3"/><rect x="608" y="1038" width="32" height="32" fill="#18fff3"/><rect x="640" y="1038" width="32" height="32" fill="#6efff7"/><rect x="672" y="1038" width="32" height="32" fill="#a0fff7"/><rect x="704" y="1038" width="32" height="32" fill="#c5fff7"/><rect x="736" y="1038" width="32" height="32" fill="#d6fff7"/><rect x="768" y="1038" width="32" height="32" fill="#e1fff6"/><rect x="800" y="1038" width="32" height="32" fill="#e9fff5"/><rect x="832" y="1038" width="32" height="32" fill="#f1fff4"/><rect x="864" y="1038" width="32" height="32" fill="#fbfff2"/><rect x="896" y="1038" width="32" height="32" fill="#fff9eb"/><rect x="928" y="1038" width="32" height="32" fill="#ffefe0"/><rect x="960" y="1038" width="32" height="32" fill="#ffe4d5"/><rect x="992" y="1038" width="32" height="32" fill="#ffdac9"/><rect x="1024" y="1038" width="32" height="32" fill="#ffcab7"/><rect x="1056" y="1038" width="32" height="32" fill="#ffbca7"/><rect x="1088" y="1038" width="32" height="32" fill="#ffb49e"/><rect x="1120" y="1038" width="32" height="32" fill="#ffac95"/><rect x="1152" y="1038" width="32" height="32" fill="#ffa48d"/><rect x="1184" y="1038" width="32" height="32" fill="#ff9d85"/><rect x="1216" y="1038" width="32" height="32" fill="#ff967e"/><rect x="1248" y="1038" width="32" height="32" fill="#ff8f76"/><rect x="1280" y="1038" width="32" height="32" fill="#ff896e"/><rect x="1312" y="1038" width="32" height="32" fill="#ff8265"/><rect x="1344" y="1038" width="32" height="32" fill="#ff7c5d"/><rect x="1376" y="1038" width="32" height="32" fill="#ff7553"/><rect x="1408" y="1038" width="32" height="32" fill="#ff6f48"/><rect x="1440" y="1038" width="32" height="32" fill="#ff6839"/><rect x="1472" y="1038" width="32" height="32" fill="#ff611e"/><rect x="1504" y="1038" width="32" height="32" fill="#ff5e00"/><rect x="1536" y="1038" width="32" height="32" fill="#ff5c00"/><rect x="1568" y="1038" width="32" height="32" fill="#ff5b00"/><rect x="1600" y="1038" width="32" height="32" fill="#ff5900"/><rect x="1632" y="1038" width="32" height="32" fill="#ff5800"/><rect x="480" y="1070" width="32" height="32" fill="#00fffc"/><rect x="512" y="1070" width="32" height="32" fill="#00fffc"/><rect x="544" y="1070" width="32" height="32" fill="#00fffc"/><rect x="576" y="1070" width="32" height="32" fill="#00fffb"/><rect x="608" y="1070" width="32" height="32" fill="#33fffc"/><rect x="640" y="1070" width="32" height="32" fill="#80fffd"/><rect x="672" y="1070" width="32" height="32" fill="#b5fffd"/><rect x="704" y="1070" width="32" height="32" fill="#cdfffd"/><rect x="736" y="1070" width="32" height="32" fill="#ddfffd"/><rect x="768" y="1070" width="32" height="32" fill="#e8fffd"/><rect x="800" y="1070" width="32" height="32" fill="#f0fffc"/><rect x="832" y="1070" width="32" height="32" fill="#f9fffc"/><rect x="864" y="1070" width="32" height="32" fill="#fffbf8"/><rect x="896" y="1070" width="32" height="32" fill="#fff1ed"/><rect x="928" y="1070" width="32" height="32" fill="#ffe7e3"/><rect x="960" y="1070" width="32" height="32" fill="#ffdcd8"/><rect x="992" y="1070" width="32" height="32" fill="#ffd1cd"/><rect x="1024" y="1070" width="32" height="32" fill="#ffc2bd"/><rect x="1056" y="1070" width="32" height="32" fill="#ffb2ac"/><rect x="1088" y="1070" width="32" height="32" fill="#ffa9a3"/><rect x="1120" y="1070" width="32" height="32" fill="#ffa19b"/><rect x="1152" y="1070" width="32" height="32" fill="#ff9a94"/><rect x="1184" y="1070" width="32" height="32" fill="#ff928c"/><rect x="1216" y="1070" width="32" height="32" fill="#ff8b85"/><rect x="1248" y="1070" width="32" height="32" fill="#ff847e"/><rect x="1280" y="1070" width="32" height="32" fill="#ff7d76"/><rect x="1312" y="1070" width="32" height="32" fill="#ff766f"/><rect x="1344" y="1070" width="32" height="32" fill="#ff6f67"/><rect x="1376" y="1070" width="32" height="32" fill="#ff685f"/><rect x="1408" y="1070" width="32" height="32" fill="#ff6057"/><rect x="1440" y="1070" width="32" height="32" fill="#ff584d"/><rect x="1472" y="1070" width="32" height="32" fill="#ff4f41"/><rect x="1504" y="1070" width="32" height="32" fill="#ff4531"/><rect x="1536" y="1070" width="32" height="32" fill="#ff3900"/><rect x="1568" y="1070" width="32" height="32" fill="#ff3800"/><rect x="1600" y="1070" width="32" height="32" fill="#ff3700"/><rect x="1632" y="1070" width="32" height="32" fill="#ff3600"/><rect x="480" y="1102" width="32" height="32" fill="#00fbff"/><rect x="512" y="1102" width="32" height="32" fill="#00fbff"/><rect x="544" y="1102" width="32" height="32" fill="#00faff"/><rect x="576" y="1102" width="32" height="32" fill="#00f9ff"/><rect x="608" y="1102" width="32" height="32" fill="#40faff"/><rect x="640" y="1102" width="32" height="32" fill="#85fbff"/><rect x="672" y="1102" width="32" height="32" fill="#bffbff"/><rect x="704" y="1102" width="32" height="32" fill="#d3fbff"/><rect x="736" y="1102" width="32" height="32" fill="#e1fbff"/><rect x="768" y="1102" width="32" height="32" fill="#ebfbff"/><rect x="800" y="1102" width="32" height="32" fill="#f3fbff"/><rect x="832" y="1102" width="32" height="32" fill="#fcfaff"/><rect x="864" y="1102" width="32" height="32" fill="#fff3f9"/><rect x="896" y="1102" width="32" height="32" fill="#ffe9ef"/><rect x="928" y="1102" width="32" height="32" fill="#ffdee5"/><rect x="960" y="1102" width="32" height="32" fill="#ffd4db"/><rect x="992" y="1102" width="32" height="32" fill="#ffc9d0"/><rect x="1024" y="1102" width="32" height="32" fill="#ffb9c1"/><rect x="1056" y="1102" width="32" height="32" fill="#ffa7b1"/><rect x="1088" y="1102" width="32" height="32" fill="#ff9ea8"/><rect x="1120" y="1102" width="32" height="32" fill="#ff96a1"/><rect x="1152" y="1102" width="32" height="32" fill="#ff8e99"/><rect x="1184" y="1102" width="32" height="32" fill="#ff8792"/><rect x="1216" y="1102" width="32" height="32" fill="#ff7f8b"/><rect x="1248" y="1102" width="32" height="32" fill="#ff7884"/><rect x="1280" y="1102" width="32" height="32" fill="#ff707e"/><rect x="1312" y="1102" width="32" height="32" fill="#ff6877"/><rect x="1344" y="1102" width="32" height="32" fill="#ff6070"/><rect x="1376" y="1102" width="32" height="32" fill="#ff5769"/><rect x="1408" y="1102" width="32" height="32" fill="#ff4e62"/><rect x="1440" y="1102" width="32" height="32" fill="#ff425a"/><rect x="1472" y="1102" width="32" height="32" fill="#ff3151"/><rect x="1504" y="1102" width="32" height="32" fill="#ff0049"/><rect x="1536" y="1102" width="32" height="32" fill="#ff0048"/><rect x="1568" y="1102" width="32" height="32" fill="#ff0047"/><rect x="1600" y="1102" width="32" height="32" fill="#ff0046"/><rect x="1632" y="1102" width="32" height="32" fill="#ff0045"/><rect x="480" y="1134" width="32" height="32" fill="#00f4ff"/><rect x="512" y="1134" width="32" height="32" fill="#00f3ff"/><rect x="544" y="1134" width="32" height="32" fill="#00f2ff"/><rect x="576" y="1134" width="32" height="32" fill="#00f0ff"/><rect x="608" y="1134" width="32" height="32" fill="#41f2ff"/><rect x="640" y="1134" width="32" height="32" fill="#a6f5ff"/><rect x="672" y="1134" width="32" height="32" fill="#c6f5ff"/><rect x="704" y="1134" width="32" height="32" fill="#d6f5ff"/><rect x="736" y="1134" width="32" height="32" fill="#e2f5ff"/><rect x="768" y="1134" width="32" height="32" fill="#ecf5ff"/><rect x="800" y="1134" width="32" height="32" fill="#f3f4ff"/><rect x="832" y="1134" width="32" height="32" fill="#fbf2ff"/><rect x="864" y="1134" width="32" height="32" fill="#ffebfa"/><rect x="896" y="1134" width="32" height="32" fill="#ffe1f0"/><rect x="928" y="1134" width="32" height="32" fill="#ffd6e7"/><rect x="960" y="1134" width="32" height="32" fill="#ffcbdd"/><rect x="992" y="1134" width="32" height="32" fill="#ffbfd3"/><rect x="1024" y="1134" width="32" height="32" fill="#ffaec5"/><rect x="1056" y="1134" width="32" height="32" fill="#ff9ab5"/><rect x="1088" y="1134" width="32" height="32" fill="#ff92ad"/><rect x="1120" y="1134" width="32" height="32" fill="#ff8aa5"/><rect x="1152" y="1134" width="32" height="32" fill="#ff829e"/><rect x="1184" y="1134" width="32" height="32" fill="#ff7997"/><rect x="1216" y="1134" width="32" height="32" fill="#ff7191"/><rect x="1248" y="1134" width="32" height="32" fill="#ff698a"/><rect x="1280" y="1134" width="32" height="32" fill="#ff6084"/><rect x="1312" y="1134" width="32" height="32" fill="#ff567e"/><rect x="1344" y="1134" width="32" height="32" fill="#ff4b77"/><rect x="1376" y="1134" width="32" height="32" fill="#ff3e71"/><rect x="1408" y="1134" width="32" height="32" fill="#ff286a"/><rect x="1440" y="1134" width="32" height="32" fill="#ff0067"/><rect x="1472" y="1134" width="32" height="32" fill="#ff0065"/><rect x="1504" y="1134" width="32" height="32" fill="#ff0063"/><rect x="1536" y="1134" width="32" height="32" fill="#ff0062"/><rect x="1568" y="1134" width="32" height="32" fill="#ff0061"/><rect x="1600" y="1134" width="32" height="32" fill="#ff005f"/><rect x="1632" y="1134" width="32" height="32" fill="#ff005e"/><rect x="480" y="1166" width="32" height="32" fill="#00edff"/><rect x="512" y="1166" width="32" height="32" fill="#00ebff"/><rect x="544" y="1166" width="32" height="32" fill="#00e9ff"/><rect x="576" y="1166" width="32" height="32" fill="#00e6ff"/><rect x="608" y="1166" width="32" height="32" fill="#37e8ff"/><rect x="640" y="1166" width="32" height="32" fill="#b3efff"/><rect x="672" y="1166" width="32" height="32" fill="#caefff"/><rect x="704" y="1166" width="32" height="32" fill="#d9efff"/><rect x="736" y="1166" width="32" height="32" fill="#e4efff"/><rect x="768" y="1166" width="32" height="32" fill="#ecefff"/><rect x="800" y="1166" width="32" height="32" fill="#f3ecff"/><rect x="832" y="1166" width="32" height="32" fill="#fbeaff"/><rect x="864" y="1166" width="32" height="32" fill="#ffe3fb"/><rect x="896" y="1166" width="32" height="32" fill="#ffd8f2"/><rect x="928" y="1166" width="32" height="32" fill="#ffcde8"/><rect x="960" y="1166" width="32" height="32" fill="#ffc1df"/><rect x="992" y="1166" width="32" height="32" fill="#ffb5d5"/><rect x="1024" y="1166" width="32" height="32" fill="#ffa2c8"/><rect x="1056" y="1166" width="32" height="32" fill="#ff8db9"/><rect x="1088" y="1166" width="32" height="32" fill="#ff84b1"/><rect x="1120" y="1166" width="32" height="32" fill="#ff7baa"/><rect x="1152" y="1166" width="32" height="32" fill="#ff73a3"/><rect x="1184" y="1166" width="32" height="32" fill="#ff699c"/><rect x="1216" y="1166" width="32" height="32" fill="#ff6096"/><rect x="1248" y="1166" width="32" height="32" fill="#ff5590"/><rect x="1280" y="1166" width="32" height="32" fill="#ff498a"/><rect x="1312" y="1166" width="32" height="32" fill="#ff3984"/><rect x="1344" y="1166" width="32" height="32" fill="#ff0d7e"/><rect x="1376" y="1166" width="32" height="32" fill="#ff007b"/><rect x="1408" y="1166" width="32" height="32" fill="#ff0079"/><rect x="1440" y="1166" width="32" height="32" fill="#ff0077"/><rect x="1472" y="1166" width="32" height="32" fill="#ff0075"/><rect x="1504" y="1166" width="32" height="32" fill="#ff0073"/><rect x="1536" y="1166" width="32" height="32" fill="#ff0072"/><rect x="1568" y="1166" width="32" height="32" fill="#ff0070"/><rect x="1600" y="1166" width="32" height="32" fill="#ff006f"/><rect x="1632" y="1166" width="32" height="32" fill="#ff006d"/><rect x="480" y="1198" width="32" height="32" fill="#00e5ff"/><rect x="512" y="1198" width="32" height="32" fill="#00e2ff"/><rect x="544" y="1198" width="32" height="32" fill="#00dfff"/><rect x="576" y="1198" width="32" height="32" fill="#00daff"/><rect x="608" y="1198" width="32" height="32" fill="#20daff"/><rect x="640" y="1198" width="32" height="32" fill="#b2e7ff"/><rect x="672" y="1198" width="32" height="32" fill="#cee9ff"/><rect x="704" y="1198" width="32" height="32" fill="#dae9ff"/><rect x="736" y="1198" width="32" height="32" fill="#e5e9ff"/><rect x="768" y="1198" width="32" height="32" fill="#ede8ff"/><rect x="800" y="1198" width="32" height="32" fill="#f3e5ff"/><rect x="832" y="1198" width="32" height="32" fill="#fbe1ff"/><rect x="864" y="1198" width="32" height="32" fill="#ffdafb"/><rect x="896" y="1198" width="32" height="32" fill="#ffcef3"/><rect x="928" y="1198" width="32" height="32" fill="#ffc3ea"/><rect x="960" y="1198" width="32" height="32" fill="#ffb6e1"/><rect x="992" y="1198" width="32" height="32" fill="#ffa9d8"/><rect x="1024" y="1198" width="32" height="32" fill="#ff92c9"/><rect x="1056" y="1198" width="32" height="32" fill="#ff7ebc"/><rect x="1088" y="1198" width="32" height="32" fill="#ff74b5"/><rect x="1120" y="1198" width="32" height="32" fill="#ff6aae"/><rect x="1152" y="1198" width="32" height="32" fill="#ff60a7"/><rect x="1184" y="1198" width="32" height="32" fill="#ff54a0"/><rect x="1216" y="1198" width="32" height="32" fill="#ff469a"/><rect x="1248" y="1198" width="32" height="32" fill="#ff3194"/><rect x="1280" y="1198" width="32" height="32" fill="#ff0090"/><rect x="1312" y="1198" width="32" height="32" fill="#ff008d"/><rect x="1344" y="1198" width="32" height="32" fill="#ff008a"/><rect x="1376" y="1198" width="32" height="32" fill="#ff0088"/><rect x="1408" y="1198" width="32" height="32" fill="#ff0085"/><rect x="1440" y="1198" width="32" height="32" fill="#ff0083"/><rect x="1472" y="1198" width="32" height="32" fill="#ff0081"/><rect x="1504" y="1198" width="32" height="32" fill="#ff007f"/><rect x="1536" y="1198" width="32" height="32" fill="#ff007e"/><rect x="1568" y="1198" width="32" height="32" fill="#ff007c"/><rect x="1600" y="1198" width="32" height="32" fill="#ff007a"/><rect x="1632" y="1198" width="32" height="32" fill="#ff0079"/><rect x="480" y="1230" width="32" height="32" fill="#00ddff"/><rect x="512" y="1230" width="32" height="32" fill="#00d9ff"/><rect x="544" y="1230" width="32" height="32" fill="#00d5ff"/><rect x="576" y="1230" width="32" height="32" fill="#00ceff"/><rect x="608" y="1230" width="32" height="32" fill="#4bc8ff"/><rect x="640" y="1230" width="32" height="32" fill="#addbff"/><rect x="672" y="1230" width="32" height="32" fill="#d0e3ff"/><rect x="704" y="1230" width="32" height="32" fill="#dce3ff"/><rect x="736" y="1230" width="32" height="32" fill="#e5e2ff"/><rect x="768" y="1230" width="32" height="32" fill="#ede1ff"/><rect x="800" y="1230" width="32" height="32" fill="#f3ddff"/><rect x="832" y="1230" width="32" height="32" fill="#fad8ff"/><rect x="864" y="1230" width="32" height="32" fill="#ffd0fc"/><rect x="896" y="1230" width="32" height="32" fill="#ffc4f4"/><rect x="928" y="1230" width="32" height="32" fill="#ffb7eb"/><rect x="960" y="1230" width="32" height="32" fill="#ffaae3"/><rect x="992" y="1230" width="32" height="32" fill="#ff98d8"/><rect x="1024" y="1230" width="32" height="32" fill="#ff7cc9"/><rect x="1056" y="1230" width="32" height="32" fill="#ff6bbf"/><rect x="1088" y="1230" width="32" height="32" fill="#ff5fb8"/><rect x="1120" y="1230" width="32" height="32" fill="#ff52b1"/><rect x="1152" y="1230" width="32" height="32" fill="#ff42ab"/><rect x="1184" y="1230" width="32" height="32" fill="#ff25a4"/><rect x="1216" y="1230" width="32" height="32" fill="#ff00a0"/><rect x="1248" y="1230" width="32" height="32" fill="#ff009d"/><rect x="1280" y="1230" width="32" height="32" fill="#ff009a"/><rect x="1312" y="1230" width="32" height="32" fill="#ff0097"/><rect x="1344" y="1230" width="32" height="32" fill="#ff0094"/><rect x="1376" y="1230" width="32" height="32" fill="#ff0091"/><rect x="1408" y="1230" width="32" height="32" fill="#ff008f"/><rect x="1440" y="1230" width="32" height="32" fill="#ff008d"/><rect x="1472" y="1230" width="32" height="32" fill="#ff008b"/><rect x="1504" y="1230" width="32" height="32" fill="#ff0089"/><rect x="1536" y="1230" width="32" height="32" fill="#ff0087"/><rect x="1568" y="1230" width="32" height="32" fill="#ff0085"/><rect x="1600" y="1230" width="32" height="32" fill="#ff0083"/><rect x="1632" y="1230" width="32" height="32" fill="#ff0082"/><rect x="480" y="1262" width="32" height="32" fill="#00d4ff"/><rect x="512" y="1262" width="32" height="32" fill="#00d0ff"/><rect x="544" y="1262" width="32" height="32" fill="#00c9ff"/><rect x="576" y="1262" width="32" height="32" fill="#00c1ff"/><rect x="608" y="1262" width="32" height="32" fill="#62bcff"/><rect x="640" y="1262" width="32" height="32" fill="#a5caff"/><rect x="672" y="1262" width="32" height="32" fill="#cfdaff"/><rect x="704" y="1262" width="32" height="32" fill="#dddcff"/><rect x="736" y="1262" width="32" height="32" fill="#e6dbff"/><rect x="768" y="1262" width="32" height="32" fill="#edd9ff"/><rect x="800" y="1262" width="32" height="32" fill="#f3d4ff"/><rect x="832" y="1262" width="32" height="32" fill="#faceff"/><rect x="864" y="1262" width="32" height="32" fill="#ffc5fc"/><rect x="896" y="1262" width="32" height="32" fill="#ffb8f5"/><rect x="928" y="1262" width="32" height="32" fill="#ffaaec"/><rect x="960" y="1262" width="32" height="32" fill="#ff9be4"/><rect x="992" y="1262" width="32" height="32" fill="#ff80d8"/><rect x="1024" y="1262" width="32" height="32" fill="#ff5fca"/><rect x="1056" y="1262" width="32" height="32" fill="#ff50c2"/><rect x="1088" y="1262" width="32" height="32" fill="#ff3cbb"/><rect x="1120" y="1262" width="32" height="32" fill="#ff00b5"/><rect x="1152" y="1262" width="32" height="32" fill="#ff00b0"/><rect x="1184" y="1262" width="32" height="32" fill="#ff00ac"/><rect x="1216" y="1262" width="32" height="32" fill="#ff00a8"/><rect x="1248" y="1262" width="32" height="32" fill="#ff00a5"/><rect x="1280" y="1262" width="32" height="32" fill="#ff00a2"/><rect x="1312" y="1262" width="32" height="32" fill="#ff009f"/><rect x="1344" y="1262" width="32" height="32" fill="#ff009c"/><rect x="1376" y="1262" width="32" height="32" fill="#ff0099"/><rect x="1408" y="1262" width="32" height="32" fill="#ff0097"/><rect x="1440" y="1262" width="32" height="32" fill="#ff0095"/><rect x="1472" y="1262" width="32" height="32" fill="#ff0093"/><rect x="1504" y="1262" width="32" height="32" fill="#ff0091"/><rect x="1536" y="1262" width="32" height="32" fill="#ff008f"/><rect x="1568" y="1262" width="32" height="32" fill="#ff008d"/><rect x="1600" y="1262" width="32" height="32" fill="#ff008b"/><rect x="1632" y="1262" width="32" height="32" fill="#ff008a"/><rect x="480" y="1294" width="32" height="32" fill="#00cbff"/><rect x="512" y="1294" width="32" height="32" fill="#00c5ff"/><rect x="544" y="1294" width="32" height="32" fill="#00bdff"/><rect x="576" y="1294" width="32" height="32" fill="#19b2ff"/><rect x="608" y="1294" width="32" height="32" fill="#71afff"/><rect x="640" y="1294" width="32" height="32" fill="#91adff"/><rect x="672" y="1294" width="32" height="32" fill="#c4c5ff"/><rect x="704" y="1294" width="32" height="32" fill="#ded4ff"/><rect x="736" y="1294" width="32" height="32" fill="#e6d3ff"/><rect x="768" y="1294" width="32" height="32" fill="#edd0ff"/><rect x="800" y="1294" width="32" height="32" fill="#f3caff"/><rect x="832" y="1294" width="32" height="32" fill="#fac2ff"/><rect x="864" y="1294" width="32" height="32" fill="#ffb8fd"/><rect x="896" y="1294" width="32" height="32" fill="#ffa9f5"/><rect x="928" y="1294" width="32" height="32" fill="#ff9aee"/><rect x="960" y="1294" width="32" height="32" fill="#ff7ee3"/><rect x="992" y="1294" width="32" height="32" fill="#ff56d6"/><rect x="1024" y="1294" width="32" height="32" fill="#ff32cc"/><rect x="1056" y="1294" width="32" height="32" fill="#ff00c5"/><rect x="1088" y="1294" width="32" height="32" fill="#ff00c0"/><rect x="1120" y="1294" width="32" height="32" fill="#ff00bb"/><rect x="1152" y="1294" width="32" height="32" fill="#ff00b7"/><rect x="1184" y="1294" width="32" height="32" fill="#ff00b3"/><rect x="1216" y="1294" width="32" height="32" fill="#ff00af"/><rect x="1248" y="1294" width="32" height="32" fill="#ff00ac"/><rect x="1280" y="1294" width="32" height="32" fill="#ff00a9"/><rect x="1312" y="1294" width="32" height="32" fill="#ff00a6"/><rect x="1344" y="1294" width="32" height="32" fill="#ff00a3"/><rect x="1376" y="1294" width="32" height="32" fill="#ff00a0"/><rect x="1408" y="1294" width="32" height="32" fill="#ff009e"/><rect x="1440" y="1294" width="32" height="32" fill="#ff009c"/><rect x="1472" y="1294" width="32" height="32" fill="#ff0099"/><rect x="1504" y="1294" width="32" height="32" fill="#ff0097"/><rect x="1536" y="1294" width="32" height="32" fill="#ff0095"/><rect x="1568" y="1294" width="32" height="32" fill="#ff0094"/><rect x="1600" y="1294" width="32" height="32" fill="#ff0092"/><rect x="1632" y="1294" width="32" height="32" fill="#ff0090"/><rect x="480" y="1326" width="32" height="32" fill="#00c1ff"/><rect x="512" y="1326" width="32" height="32" fill="#00b9ff"/><rect x="544" y="1326" width="32" height="32" fill="#00afff"/><rect x="576" y="1326" width="32" height="32" fill="#4ea5ff"/><rect x="608" y="1326" width="32" height="32" fill="#7ca1ff"/><rect x="640" y="1326" width="32" height="32" fill="#969eff"/><rect x="672" y="1326" width="32" height="32" fill="#b3a3ff"/><rect x="704" y="1326" width="32" height="32" fill="#d3b9ff"/><rect x="736" y="1326" width="32" height="32" fill="#e5c6ff"/><rect x="768" y="1326" width="32" height="32" fill="#edc6ff"/><rect x="800" y="1326" width="32" height="32" fill="#f3bdff"/><rect x="832" y="1326" width="32" height="32" fill="#f9b4ff"/><rect x="864" y="1326" width="32" height="32" fill="#ffa7fe"/><rect x="896" y="1326" width="32" height="32" fill="#ff95f6"/><rect x="928" y="1326" width="32" height="32" fill="#ff72ed"/><rect x="960" y="1326" width="32" height="32" fill="#ff33e2"/><rect x="992" y="1326" width="32" height="32" fill="#ff00d7"/><rect x="1024" y="1326" width="32" height="32" fill="#ff00d0"/><rect x="1056" y="1326" width="32" height="32" fill="#ff00cb"/><rect x="1088" y="1326" width="32" height="32" fill="#ff00c6"/><rect x="1120" y="1326" width="32" height="32" fill="#ff00c1"/><rect x="1152" y="1326" width="32" height="32" fill="#ff00bc"/><rect x="1184" y="1326" width="32" height="32" fill="#ff00b9"/><rect x="1216" y="1326" width="32" height="32" fill="#ff00b5"/><rect x="1248" y="1326" width="32" height="32" fill="#ff00b2"/><rect x="1280" y="1326" width="32" height="32" fill="#ff00ae"/><rect x="1312" y="1326" width="32" height="32" fill="#ff00ab"/><rect x="1344" y="1326" width="32" height="32" fill="#ff00a9"/><rect x="1376" y="1326" width="32" height="32" fill="#ff00a6"/><rect x="1408" y="1326" width="32" height="32" fill="#ff00a4"/><rect x="1440" y="1326" width="32" height="32" fill="#ff00a1"/><rect x="1472" y="1326" width="32" height="32" fill="#ff009f"/><rect x="1504" y="1326" width="32" height="32" fill="#ff009d"/><rect x="1536" y="1326" width="32" height="32" fill="#ff009b"/><rect x="1568" y="1326" width="32" height="32" fill="#ff0099"/><rect x="1600" y="1326" width="32" height="32" fill="#ff0098"/><rect x="1632" y="1326" width="32" height="32" fill="#ff0096"/><rect x="480" y="1358" width="32" height="32" fill="#00b6ff"/><rect x="512" y="1358" width="32" height="32" fill="#00acff"/><rect x="544" y="1358" width="32" height="32" fill="#009eff"/><rect x="576" y="1358" width="32" height="32" fill="#6297ff"/><rect x="608" y="1358" width="32" height="32" fill="#8493ff"/><rect x="640" y="1358" width="32" height="32" fill="#9c8eff"/><rect x="672" y="1358" width="32" height="32" fill="#af88ff"/><rect x="704" y="1358" width="32" height="32" fill="#c389ff"/><rect x="736" y="1358" width="32" height="32" fill="#dc9fff"/><rect x="768" y="1358" width="32" height="32" fill="#e9a5ff"/><rect x="800" y="1358" width="32" height="32" fill="#f1a1ff"/><rect x="832" y="1358" width="32" height="32" fill="#f894ff"/><rect x="864" y="1358" width="32" height="32" fill="#ff79fe"/><rect x="896" y="1358" width="32" height="32" fill="#ff34f5"/><rect x="928" y="1358" width="32" height="32" fill="#ff15eb"/><rect x="960" y="1358" width="32" height="32" fill="#ff00e2"/><rect x="992" y="1358" width="32" height="32" fill="#ff00db"/><rect x="1024" y="1358" width="32" height="32" fill="#ff00d5"/><rect x="1056" y="1358" width="32" height="32" fill="#ff00cf"/><rect x="1088" y="1358" width="32" height="32" fill="#ff00ca"/><rect x="1120" y="1358" width="32" height="32" fill="#ff00c6"/><rect x="1152" y="1358" width="32" height="32" fill="#ff00c1"/><rect x="1184" y="1358" width="32" height="32" fill="#ff00bd"/><rect x="1216" y="1358" width="32" height="32" fill="#ff00ba"/><rect x="1248" y="1358" width="32" height="32" fill="#ff00b7"/><rect x="1280" y="1358" width="32" height="32" fill="#ff00b3"/><rect x="1312" y="1358" width="32" height="32" fill="#ff00b1"/><rect x="1344" y="1358" width="32" height="32" fill="#ff00ae"/><rect x="1376" y="1358" width="32" height="32" fill="#ff00ab"/><rect x="1408" y="1358" width="32" height="32" fill="#ff00a9"/><rect x="1440" y="1358" width="32" height="32" fill="#ff00a7"/><rect x="1472" y="1358" width="32" height="32" fill="#ff00a4"/><rect x="1504" y="1358" width="32" height="32" fill="#ff00a2"/><rect x="1536" y="1358" width="32" height="32" fill="#ff00a0"/><rect x="1568" y="1358" width="32" height="32" fill="#ff009e"/><rect x="1600" y="1358" width="32" height="32" fill="#ff009d"/><rect x="1632" y="1358" width="32" height="32" fill="#ff009b"/><rect x="480" y="1390" width="32" height="32" fill="#00aaff"/><rect x="512" y="1390" width="32" height="32" fill="#009dff"/><rect x="544" y="1390" width="32" height="32" fill="#318cff"/><rect x="576" y="1390" width="32" height="32" fill="#6f87ff"/><rect x="608" y="1390" width="32" height="32" fill="#8b82ff"/><rect x="640" y="1390" width="32" height="32" fill="#a17bff"/><rect x="672" y="1390" width="32" height="32" fill="#b273ff"/><rect x="704" y="1390" width="32" height="32" fill="#c26aff"/><rect x="736" y="1390" width="32" height="32" fill="#d05fff"/><rect x="768" y="1390" width="32" height="32" fill="#df59ff"/><rect x="800" y="1390" width="32" height="32" fill="#ec4bff"/><rect x="832" y="1390" width="32" height="32" fill="#f621ff"/><rect x="864" y="1390" width="32" height="32" fill="#ff12fe"/><rect x="896" y="1390" width="32" height="32" fill="#ff00f4"/><rect x="928" y="1390" width="32" height="32" fill="#ff00ec"/><rect x="960" y="1390" width="32" height="32" fill="#ff00e5"/><rect x="992" y="1390" width="32" height="32" fill="#ff00de"/><rect x="1024" y="1390" width="32" height="32" fill="#ff00d8"/><rect x="1056" y="1390" width="32" height="32" fill="#ff00d3"/><rect x="1088" y="1390" width="32" height="32" fill="#ff00ce"/><rect x="1120" y="1390" width="32" height="32" fill="#ff00ca"/><rect x="1152" y="1390" width="32" height="32" fill="#ff00c6"/><rect x="1184" y="1390" width="32" height="32" fill="#ff00c2"/><rect x="1216" y="1390" width="32" height="32" fill="#ff00be"/><rect x="1248" y="1390" width="32" height="32" fill="#ff00bb"/><rect x="1280" y="1390" width="32" height="32" fill="#ff00b8"/><rect x="1312" y="1390" width="32" height="32" fill="#ff00b5"/><rect x="1344" y="1390" width="32" height="32" fill="#ff00b2"/><rect x="1376" y="1390" width="32" height="32" fill="#ff00b0"/><rect x="1408" y="1390" width="32" height="32" fill="#ff00ad"/><rect x="1440" y="1390" width="32" height="32" fill="#ff00ab"/><rect x="1472" y="1390" width="32" height="32" fill="#ff00a9"/><rect x="1504" y="1390" width="32" height="32" fill="#ff00a7"/><rect x="1536" y="1390" width="32" height="32" fill="#ff00a5"/><rect x="1568" y="1390" width="32" height="32" fill="#ff00a3"/><rect x="1600" y="1390" width="32" height="32" fill="#ff00a1"/><rect x="1632" y="1390" width="32" height="32" fill="#ff00a0"/><rect x="480" y="1422" width="32" height="32" fill="#009cff"/><rect x="512" y="1422" width="32" height="32" fill="#008bff"/><rect x="544" y="1422" width="32" height="32" fill="#517bff"/><rect x="576" y="1422" width="32" height="32" fill="#7975ff"/><rect x="608" y="1422" width="32" height="32" fill="#916dff"/><rect x="640" y="1422" width="32" height="32" fill="#a563ff"/><rect x="672" y="1422" width="32" height="32" fill="#b556ff"/><rect x="704" y="1422" width="32" height="32" fill="#c443ff"/><rect x="736" y="1422" width="32" height="32" fill="#d100ff"/><rect x="768" y="1422" width="32" height="32" fill="#de00ff"/><rect x="800" y="1422" width="32" height="32" fill="#ea00ff"/><rect x="832" y="1422" width="32" height="32" fill="#f500ff"/><rect x="864" y="1422" width="32" height="32" fill="#ff00ff"/><rect x="896" y="1422" width="32" height="32" fill="#ff00f6"/><rect x="928" y="1422" width="32" height="32" fill="#ff00ee"/><rect x="960" y="1422" width="32" height="32" fill="#ff00e7"/><rect x="992" y="1422" width="32" height="32" fill="#ff00e1"/><rect x="1024" y="1422" width="32" height="32" fill="#ff00db"/><rect x="1056" y="1422" width="32" height="32" fill="#ff00d6"/><rect x="1088" y="1422" width="32" height="32" fill="#ff00d2"/><rect x="1120" y="1422" width="32" height="32" fill="#ff00cd"/><rect x="1152" y="1422" width="32" height="32" fill="#ff00c9"/><rect x="1184" y="1422" width="32" height="32" fill="#ff00c6"/><rect x="1216" y="1422" width="32" height="32" fill="#ff00c2"/><rect x="1248" y="1422" width="32" height="32" fill="#ff00bf"/><rect x="1280" y="1422" width="32" height="32" fill="#ff00bc"/><rect x="1312" y="1422" width="32" height="32" fill="#ff00b9"/><rect x="1344" y="1422" width="32" height="32" fill="#ff00b6"/><rect x="1376" y="1422" width="32" height="32" fill="#ff00b4"/><rect x="1408" y="1422" width="32" height="32" fill="#ff00b2"/><rect x="1440" y="1422" width="32" height="32" fill="#ff00af"/><rect x="1472" y="1422" width="32" height="32" fill="#ff00ad"/><rect x="1504" y="1422" width="32" height="32" fill="#ff00ab"/><rect x="1536" y="1422" width="32" height="32" fill="#ff00a9"/><rect x="1568" y="1422" width="32" height="32" fill="#ff00a7"/><rect x="1600" y="1422" width="32" height="32" fill="#ff00a5"/><rect x="1632" y="1422" width="32" height="32" fill="#ff00a4"/><rect x="480" y="1454" width="32" height="32" fill="#008cff"/><rect x="512" y="1454" width="32" height="32" fill="#0073ff"/><rect x="544" y="1454" width="32" height="32" fill="#6266ff"/><rect x="576" y="1454" width="32" height="32" fill="#815cff"/><rect x="608" y="1454" width="32" height="32" fill="#974eff"/><rect x="640" y="1454" width="32" height="32" fill="#a836ff"/><rect x="672" y="1454" width="32" height="32" fill="#b900ff"/><rect x="704" y="1454" width="32" height="32" fill="#c800ff"/><rect x="736" y="1454" width="32" height="32" fill="#d500ff"/><rect x="768" y="1454" width="32" height="32" fill="#e100ff"/><rect x="800" y="1454" width="32" height="32" fill="#ec00ff"/><rect x="832" y="1454" width="32" height="32" fill="#f500ff"/><rect x="864" y="1454" width="32" height="32" fill="#ff00ff"/><rect x="896" y="1454" width="32" height="32" fill="#ff00f7"/><rect x="928" y="1454" width="32" height="32" fill="#ff00f0"/><rect x="960" y="1454" width="32" height="32" fill="#ff00e9"/><rect x="992" y="1454" width="32" height="32" fill="#ff00e3"/><rect x="1024" y="1454" width="32" height="32" fill="#ff00de"/><rect x="1056" y="1454" width="32" height="32" fill="#ff00d9"/><rect x="1088" y="1454" width="32" height="32" fill="#ff00d5"/><rect x="1120" y="1454" width="32" height="32" fill="#ff00d0"/><rect x="1152" y="1454" width="32" height="32" fill="#ff00cd"/><rect x="1184" y="1454" width="32" height="32" fill="#ff00c9"/><rect x="1216" y="1454" width="32" height="32" fill="#ff00c6"/><rect x="1248" y="1454" width="32" height="32" fill="#ff00c2"/><rect x="1280" y="1454" width="32" height="32" fill="#ff00bf"/><rect x="1312" y="1454" width="32" height="32" fill="#ff00bd"/><rect x="1344" y="1454" width="32" height="32" fill="#ff00ba"/><rect x="1376" y="1454" width="32" height="32" fill="#ff00b8"/><rect x="1408" y="1454" width="32" height="32" fill="#ff00b5"/><rect x="1440" y="1454" width="32" height="32" fill="#ff00b3"/><rect x="1472" y="1454" width="32" height="32" fill="#ff00b1"/><rect x="1504" y="1454" width="32" height="32" fill="#ff00af"/><rect x="1536" y="1454" width="32" height="32" fill="#ff00ad"/><rect x="1568" y="1454" width="32" height="32" fill="#ff00ab"/><rect x="1600" y="1454" width="32" height="32" fill="#ff00a9"/><rect x="1632" y="1454" width="32" height="32" fill="#ff00a7"/><rect x="480" y="1486" width="32" height="32" fill="#0076ff"/><rect x="512" y="1486" width="32" height="32" fill="#3b54ff"/><rect x="544" y="1486" width="32" height="32" fill="#6d44ff"/><rect x="576" y="1486" width="32" height="32" fill="#8822ff"/><rect x="608" y="1486" width="32" height="32" fill="#9e00ff"/><rect x="640" y="1486" width="32" height="32" fill="#b000ff"/><rect x="672" y="1486" width="32" height="32" fill="#bf00ff"/><rect x="704" y="1486" width="32" height="32" fill="#cd00ff"/><rect x="736" y="1486" width="32" height="32" fill="#d800ff"/><rect x="768" y="1486" width="32" height="32" fill="#e300ff"/><rect x="800" y="1486" width="32" height="32" fill="#ed00ff"/><rect x="832" y="1486" width="32" height="32" fill="#f600ff"/><rect x="864" y="1486" width="32" height="32" fill="#fe00ff"/><rect x="896" y="1486" width="32" height="32" fill="#ff00f8"/><rect x="928" y="1486" width="32" height="32" fill="#ff00f1"/><rect x="960" y="1486" width="32" height="32" fill="#ff00eb"/><rect x="992" y="1486" width="32" height="32" fill="#ff00e5"/><rect x="1024" y="1486" width="32" height="32" fill="#ff00e0"/><rect x="1056" y="1486" width="32" height="32" fill="#ff00dc"/><rect x="1088" y="1486" width="32" height="32" fill="#ff00d7"/><rect x="1120" y="1486" width="32" height="32" fill="#ff00d3"/><rect x="1152" y="1486" width="32" height="32" fill="#ff00cf"/><rect x="1184" y="1486" width="32" height="32" fill="#ff00cc"/><rect x="1216" y="1486" width="32" height="32" fill="#ff00c9"/><rect x="1248" y="1486" width="32" height="32" fill="#ff00c6"/><rect x="1280" y="1486" width="32" height="32" fill="#ff00c3"/><rect x="1312" y="1486" width="32" height="32" fill="#ff00c0"/><rect x="1344" y="1486" width="32" height="32" fill="#ff00bd"/><rect x="1376" y="1486" width="32" height="32" fill="#ff00bb"/><rect x="1408" y="1486" width="32" height="32" fill="#ff00b9"/><rect x="1440" y="1486" width="32" height="32" fill="#ff00b6"/><rect x="1472" y="1486" width="32" height="32" fill="#ff00b4"/><rect x="1504" y="1486" width="32" height="32" fill="#ff00b2"/><rect x="1536" y="1486" width="32" height="32" fill="#ff00b0"/><rect x="1568" y="1486" width="32" height="32" fill="#ff00ae"/><rect x="1600" y="1486" width="32" height="32" fill="#ff00ad"/><rect x="1632" y="1486" width="32" height="32" fill="#ff00ab"/><rect x="480" y="1518" width="32" height="32" fill="#0055ff"/><rect x="512" y="1518" width="32" height="32" fill="#5600ff"/><rect x="544" y="1518" width="32" height="32" fill="#7e00ff"/><rect x="576" y="1518" width="32" height="32" fill="#9600ff"/><rect x="608" y="1518" width="32" height="32" fill="#a800ff"/><rect x="640" y="1518" width="32" height="32" fill="#b800ff"/><rect x="672" y="1518" width="32" height="32" fill="#c500ff"/><rect x="704" y="1518" width="32" height="32" fill="#d000ff"/><rect x="736" y="1518" width="32" height="32" fill="#db00ff"/><rect x="768" y="1518" width="32" height="32" fill="#e500ff"/><rect x="800" y="1518" width="32" height="32" fill="#ee00ff"/><rect x="832" y="1518" width="32" height="32" fill="#f600ff"/><rect x="864" y="1518" width="32" height="32" fill="#fe00ff"/><rect x="896" y="1518" width="32" height="32" fill="#ff00f9"/><rect x="928" y="1518" width="32" height="32" fill="#ff00f3"/><rect x="960" y="1518" width="32" height="32" fill="#ff00ed"/><rect x="992" y="1518" width="32" height="32" fill="#ff00e7"/><rect x="1024" y="1518" width="32" height="32" fill="#ff00e2"/><rect x="1056" y="1518" width="32" height="32" fill="#ff00de"/><rect x="1088" y="1518" width="32" height="32" fill="#ff00da"/><rect x="1120" y="1518" width="32" height="32" fill="#ff00d6"/><rect x="1152" y="1518" width="32" height="32" fill="#ff00d2"/><rect x="1184" y="1518" width="32" height="32" fill="#ff00cf"/><rect x="1216" y="1518" width="32" height="32" fill="#ff00cb"/><rect x="1248" y="1518" width="32" height="32" fill="#ff00c8"/><rect x="1280" y="1518" width="32" height="32" fill="#ff00c6"/><rect x="1312" y="1518" width="32" height="32" fill="#ff00c3"/><rect x="1344" y="1518" width="32" height="32" fill="#ff00c0"/><rect x="1376" y="1518" width="32" height="32" fill="#ff00be"/><rect x="1408" y="1518" width="32" height="32" fill="#ff00bc"/><rect x="1440" y="1518" width="32" height="32" fill="#ff00b9"/><rect x="1472" y="1518" width="32" height="32" fill="#ff00b7"/><rect x="1504" y="1518" width="32" height="32" fill="#ff00b5"/><rect x="1536" y="1518" width="32" height="32" fill="#ff00b3"/><rect x="1568" y="1518" width="32" height="32" fill="#ff00b1"/><rect x="1600" y="1518" width="32" height="32" fill="#ff00b0"/><rect x="1632" y="1518" width="32" height="32" fill="#ff00ae"/><rect x="480" y="1550" width="32" height="32" fill="#4600ff"/><rect x="512" y="1550" width="32" height="32" fill="#7500ff"/><rect x="544" y="1550" width="32" height="32" fill="#8e00ff"/><rect x="576" y="1550" width="32" height="32" fill="#a100ff"/><rect x="608" y="1550" width="32" height="32" fill="#b000ff"/><rect x="640" y="1550" width="32" height="32" fill="#be00ff"/><rect x="672" y="1550" width="32" height="32" fill="#c900ff"/><rect x="704" y="1550" width="32" height="32" fill="#d400ff"/><rect x="736" y="1550" width="32" height="32" fill="#dd00ff"/><rect x="768" y="1550" width="32" height="32" fill="#e600ff"/><rect x="800" y="1550" width="32" height="32" fill="#ee00ff"/><rect x="832" y="1550" width="32" height="32" fill="#f600ff"/><rect x="864" y="1550" width="32" height="32" fill="#fd00ff"/><rect x="896" y="1550" width="32" height="32" fill="#ff00fa"/><rect x="928" y="1550" width="32" height="32" fill="#ff00f4"/><rect x="960" y="1550" width="32" height="32" fill="#ff00ee"/><rect x="992" y="1550" width="32" height="32" fill="#ff00e9"/><rect x="1024" y="1550" width="32" height="32" fill="#ff00e4"/><rect x="1056" y="1550" width="32" height="32" fill="#ff00e0"/><rect x="1088" y="1550" width="32" height="32" fill="#ff00dc"/><rect x="1120" y="1550" width="32" height="32" fill="#ff00d8"/><rect x="1152" y="1550" width="32" height="32" fill="#ff00d4"/><rect x="1184" y="1550" width="32" height="32" fill="#ff00d1"/><rect x="1216" y="1550" width="32" height="32" fill="#ff00ce"/><rect x="1248" y="1550" width="32" height="32" fill="#ff00cb"/><rect x="1280" y="1550" width="32" height="32" fill="#ff00c8"/><rect x="1312" y="1550" width="32" height="32" fill="#ff00c6"/><rect x="1344" y="1550" width="32" height="32" fill="#ff00c3"/><rect x="1376" y="1550" width="32" height="32" fill="#ff00c1"/><rect x="1408" y="1550" width="32" height="32" fill="#ff00be"/><rect x="1440" y="1550" width="32" height="32" fill="#ff00bc"/><rect x="1472" y="1550" width="32" height="32" fill="#ff00ba"/><rect x="1504" y="1550" width="32" height="32" fill="#ff00b8"/><rect x="1536" y="1550" width="32" height="32" fill="#ff00b6"/><rect x="1568" y="1550" width="32" height="32" fill="#ff00b4"/><rect x="1600" y="1550" width="32" height="32" fill="#ff00b3"/><rect x="1632" y="1550" width="32" height="32" fill="#ff00b1"/></g></g>
</svg>
<canvas id="cv" class="abs" width="1988" height="1797"></canvas>
<svg class="abs" width="1988" height="1797" viewBox="0 0 1988 1797">
  <defs>
    <filter id="sh" x="-50%" y="-50%" width="200%" height="200%">
      <feGaussianBlur in="SourceAlpha" stdDeviation="2.5"/><feOffset dx="2" dy="3" result="o"/>
      <feComponentTransfer><feFuncA type="linear" slope="0.45"/></feComponentTransfer>
      <feMerge><feMergeNode/><feMergeNode in="SourceGraphic"/></feMerge>
    </filter>
    <radialGradient id="hl" cx="0.4" cy="0.35" r="0.6">
      <stop offset="0" stop-color="#fff" stop-opacity="0.3"/><stop offset="1" stop-color="#fff" stop-opacity="0"/>
    </radialGradient>
  </defs>
  <path d="M561.6,1601.5 C555.8,1603.5 537.4,1613.9 527.0,1613.6 C516.6,1613.3 507.3,1607.3 499.0,1599.5 C490.7,1591.7 485.0,1578.2 477.0,1567.0 C469.0,1555.8 464.1,1553.8 451.0,1532.0 C437.9,1510.2 410.3,1458.5 398.6,1436.5 C386.9,1414.5 388.1,1414.8 381.0,1400.0 C373.9,1385.2 362.7,1362.9 356.0,1348.0 C349.3,1333.1 349.0,1331.7 340.6,1310.4 C332.2,1289.1 316.0,1247.4 305.8,1220.0 C295.6,1192.6 287.8,1171.5 279.4,1146.0 C271.0,1120.5 263.6,1094.5 255.7,1067.0 C247.8,1039.5 238.7,1008.8 232.0,981.0 C225.3,953.2 220.5,927.3 215.4,900.0 C210.3,872.7 204.6,843.7 201.5,817.0 C198.4,790.3 198.3,764.5 196.8,740.0 C195.3,715.5 193.3,690.0 192.5,670.0 C191.7,650.0 191.9,638.3 192.0,620.0 C192.1,601.7 192.3,581.4 193.0,560.0 C193.7,538.6 194.6,511.8 196.0,491.8 C197.4,471.8 198.9,458.4 201.7,440.0 C204.5,421.6 206.7,399.7 212.6,381.3 C218.5,362.9 228.8,342.7 237.0,329.6 C245.2,316.5 252.0,310.6 261.5,302.5 C271.0,294.4 283.6,286.6 294.0,280.7 C304.4,274.8 313.6,270.7 324.0,267.2 C334.4,263.7 344.8,260.9 356.6,259.6 C368.4,258.3 378.8,257.6 394.6,259.6 C410.5,261.6 428.6,263.5 451.7,271.5 C474.8,279.5 505.8,294.4 533.0,307.5 C560.2,320.6 583.5,331.6 614.7,350.0 C645.9,368.4 685.1,394.7 720.0,418.0 C754.9,441.3 776.5,456.0 824.0,490.0 C871.5,524.0 968.2,594.9 1005.0,622.0 C1041.8,649.1 1010.2,626.9 1045.0,652.8 C1079.8,678.7 1177.7,750.0 1213.8,777.3 C1249.9,804.5 1237.3,797.6 1261.6,816.3 C1285.9,834.9 1320.8,859.9 1359.7,889.2 C1398.6,918.5 1472.5,974.9 1495.0,992.0 L1691.5,1143.7 L1743.0,1185.0 Z" fill="none" stroke="#eca412" stroke-width="2.1" stroke-linejoin="round"/>
  <g stroke="#d0d4dc" stroke-width="1.8"><line x1="386.0" y1="260.0" x2="425.0" y2="199.0"/><line x1="708.5" y1="408.5" x2="749.0" y2="348.0"/><line x1="1004.0" y1="622.0" x2="1045.5" y2="560.0"/><line x1="1213.8" y1="777.3" x2="1255.0" y2="716.0"/><line x1="1358.8" y1="888.6" x2="1397.5" y2="828.0"/><line x1="1495.2" y1="991.6" x2="1534.0" y2="931.0"/><line x1="1646.0" y1="1096.0" x2="1682.6" y2="1042.0"/><line x1="1704.0" y1="1154.0" x2="1744.0" y2="1091.0"/><line x1="1732.0" y1="1171.0" x2="1772.0" y2="1111.0"/><line x1="190.8" y1="669.3" x2="153.6" y2="685.4"/><line x1="356.0" y1="1348.0" x2="317.0" y2="1364.0"/><line x1="450.2" y1="1533.0" x2="411.5" y2="1549.6"/><line x1="480.4" y1="1578.3" x2="442.7" y2="1592.4"/><line x1="499.0" y1="1600.4" x2="464.8" y2="1614.5"/></g>
  <g font-size="30.5" fill="#e6e8f0"><text x="425.0" y="208.0" textLength="87.0" lengthAdjust="spacingAndGlyphs">520 nm</text><text x="748.0" y="358.0" textLength="87.0" lengthAdjust="spacingAndGlyphs">540 nm</text><text x="1047.8" y="571.6" textLength="83.0" lengthAdjust="spacingAndGlyphs">560 nm</text><text x="1256.5" y="728.7" textLength="84.3" lengthAdjust="spacingAndGlyphs">580 nm</text><text x="1399.3" y="838.4" textLength="84.5" lengthAdjust="spacingAndGlyphs">600 nm</text><text x="1534.9" y="942.3" textLength="84.5" lengthAdjust="spacingAndGlyphs">620 nm</text><text x="1681.0" y="1054.0" textLength="85.0" lengthAdjust="spacingAndGlyphs">640 nm</text><text x="1744.0" y="1103.0" textLength="86.0" lengthAdjust="spacingAndGlyphs">660 nm</text><text x="1771.0" y="1124.0" textLength="86.0" lengthAdjust="spacingAndGlyphs">680 nm</text><text x="82.6" y="714.0" textLength="84.5" lengthAdjust="spacingAndGlyphs">500 nm</text><text x="245.0" y="1394.0" textLength="85.0" lengthAdjust="spacingAndGlyphs">480 nm</text><text x="341.0" y="1577.3" textLength="84.6" lengthAdjust="spacingAndGlyphs">460 nm</text><text x="371.2" y="1621.5" textLength="84.6" lengthAdjust="spacingAndGlyphs">440 nm</text><text x="392.9" y="1642.2" textLength="84.5" lengthAdjust="spacingAndGlyphs">420 nm</text></g>
  <g font-size="33.5" fill="#eceef2"><text x="28.5" y="315.1" textLength="45.5" lengthAdjust="spacingAndGlyphs">0.8</text><text x="28.5" y="480.2" textLength="45.5" lengthAdjust="spacingAndGlyphs">0.7</text><text x="28.5" y="642.5" textLength="45.5" lengthAdjust="spacingAndGlyphs">0.6</text><text x="28.5" y="807.4" textLength="45.5" lengthAdjust="spacingAndGlyphs">0.5</text><text x="28.5" y="971.2" textLength="45.5" lengthAdjust="spacingAndGlyphs">0.4</text><text x="28.5" y="1134.5" textLength="45.5" lengthAdjust="spacingAndGlyphs">0.3</text><text x="28.5" y="1299.6" textLength="45.5" lengthAdjust="spacingAndGlyphs">0.2</text><text x="28.5" y="1461.9" textLength="45.5" lengthAdjust="spacingAndGlyphs">0.1</text><text x="402.8" y="1710" textLength="45" lengthAdjust="spacingAndGlyphs">0.1</text><text x="617.2" y="1710" textLength="45" lengthAdjust="spacingAndGlyphs">0.2</text><text x="832.7" y="1710" textLength="45" lengthAdjust="spacingAndGlyphs">0.3</text><text x="1050.9" y="1710" textLength="45" lengthAdjust="spacingAndGlyphs">0.4</text><text x="1266.5" y="1710" textLength="45" lengthAdjust="spacingAndGlyphs">0.5</text><text x="1481.3" y="1710" textLength="45" lengthAdjust="spacingAndGlyphs">0.6</text><text x="1696.2" y="1710" textLength="45" lengthAdjust="spacingAndGlyphs">0.7</text></g>
  <!-- white crosshair -->
  <path d="M35,1099 H1951" stroke="#e8e8e8" stroke-width="2.6" stroke-dasharray="8 7" opacity="0.9"/>
  <path d="M857,92 V1716" stroke="#e8e8e8" stroke-width="2.6" stroke-dasharray="8 7" opacity="0.75"/>
  <!-- dark dashed lines -->
  <g stroke="#1e2828" stroke-width="1.9" stroke-dasharray="7 9" opacity="0.6">
    <path d="M538.4,1109 H1643"/>
    <path d="M609,447.5 L935.2,1388"/>
    <path d="M494.2,1559.3 L1106.9,763.5"/>
  </g>
  <g stroke-width="5.5" stroke-linecap="butt" stroke-linejoin="round"><path d="M826.0,651.0 L909.7,701.4" stroke="#006a10" fill="none"/><path d="M909.7,701.4 L1350.4,966.9" stroke="#7a7a10" fill="none"/><path d="M1350.4,966.9 L1560.5,1093.5" stroke="#8e0008" fill="none"/><path d="M826.0,651.0 L822.5,662.3 L819.0,673.6 L815.4,684.9 L811.8,696.1 L808.2,707.4 L804.6,718.6 L800.9,729.9 L797.2,741.1 L793.5,752.3 L789.8,763.6 L786.1,774.8 L782.3,786.0 L778.5,797.2 L774.7,808.3 L771.5,817.5" stroke="#006a10" fill="none"/><path d="M771.5,817.5 L770.8,819.5 L767.0,830.7 L763.1,841.8 L759.2,853.0 L755.2,864.1 L751.2,875.2 L747.3,886.4 L743.3,897.5 L739.2,908.6 L735.2,919.7 L731.1,930.8 L727.0,941.8 L722.8,952.9 L718.7,964.0 L714.5,975.0 L713.1,978.7" stroke="#1a6e8a" fill="none"/><path d="M713.1,978.7 L710.3,986.1 L706.1,997.1 L701.8,1008.1 L697.6,1019.1 L693.3,1030.1 L689.0,1041.1 L684.6,1052.1 L680.2,1063.1 L675.9,1074.1 L671.4,1085.0 L667.0,1096.0 L663.2,1107.1 L659.5,1118.2 L655.7,1129.3 L651.9,1140.4 L649.3,1147.9" stroke="#8a7a80" fill="none"/><path d="M649.3,1147.9 L648.0,1151.5 L644.2,1162.6 L640.4,1173.7 L636.5,1184.8 L632.6,1195.8 L628.7,1206.9 L624.8,1218.0 L620.8,1229.0 L616.9,1240.1 L612.9,1251.1 L608.9,1262.1 L604.9,1273.2 L600.9,1284.2 L596.9,1295.2 L592.8,1306.2 L588.8,1317.2 L584.7,1328.2 L580.6,1339.2 L576.5,1350.2 L572.3,1361.2 L568.2,1372.1 L564.0,1383.1 L563.2,1385.2" stroke="#008080" fill="none"/><path d="M563.2,1385.2 L559.8,1394.1 L555.6,1405.0 L551.4,1416.0 L547.2,1426.9 L542.9,1437.8 L538.7,1448.8 L534.4,1459.7 L530.1,1470.6 L525.8,1481.5 L521.5,1492.4 L517.1,1503.3 L512.8,1514.2 L508.4,1525.1 L504.0,1536.0" stroke="#000090" fill="none"/><path d="M504.0,1536.0 L623.4,1486.0" stroke="#000090" fill="none"/><path d="M623.4,1486.0 L1257.3,1220.5" stroke="#70008c" fill="none"/><path d="M1257.3,1220.5 L1560.5,1093.5" stroke="#900010" fill="none"/></g>
  <path d="M609.0,447.5 L1643.5,1109.5 L494.5,1559.0 Z" fill="none" stroke="#ffffff" stroke-width="5.8" stroke-linejoin="round"/>
  <path d="M720.5,1237.5 C745,1205 770,1180 801,1152 C815,1138 828,1127 845,1112 C865,1095 885,1081 903.5,1070 C915,1063 925,1061 934,1056 C950,1046 960,1034 975,1026 C990,1017 1000,1013 1008.3,1010 C1030,1000 1045,994 1058.5,989.8 C1080,981 1100,973 1121.8,968.7 C1140,965 1160,960 1177.3,955.5 L1197.5,953.7" fill="none" stroke="#101010" stroke-width="2.7"/>
  <circle cx="801.0" cy="1152.0" r="6" fill="#f4f4f4" stroke="#101010" stroke-width="2.5"/><circle cx="903.5" cy="1070.0" r="6" fill="#f4f4f4" stroke="#101010" stroke-width="2.5"/><circle cx="1008.3" cy="1010.0" r="6" fill="#f4f4f4" stroke="#101010" stroke-width="2.5"/><circle cx="1128.9" cy="965.0" r="6" fill="#f4f4f4" stroke="#101010" stroke-width="2.5"/><circle cx="1177.3" cy="955.5" r="6" fill="#f4f4f4" stroke="#101010" stroke-width="2.5"/><circle cx="934.0" cy="1060.0" r="6" fill="#10d010" stroke="#0a3a0a" stroke-width="1.5"/><circle cx="857.0" cy="1097.0" r="6" fill="#10d010" stroke="#0a3a0a" stroke-width="1.5"/><circle cx="1150.0" cy="967.8" r="6" fill="#10d010" stroke="#0a3a0a" stroke-width="1.5"/><circle cx="852" cy="1115" r="8" fill="#0a2a0a"/><circle cx="816" cy="1119" r="11" fill="#f0f0f0" stroke="#202020" stroke-width="2.5"/><circle cx="837.3" cy="1108.6" r="12" fill="#f0e020" stroke="#101010" stroke-width="3"/>
  <g filter="url(#sh)"><path d="M826.0,637.0 l14,14 l-14,14 l-14,-14 Z" fill="#b8f0b0" stroke="#2a5a2a" stroke-width="2.5"/><path d="M820.0,651.0 h12 M826.0,645.0 v12" stroke="#101010" stroke-width="2.5"/></g><g filter="url(#sh)"><path d="M1085.5,792.0 l14,14 l-14,14 l-14,-14 Z" fill="#f0f0a8" stroke="#6a6a30" stroke-width="2.5"/><path d="M1079.5,806.0 h12 M1085.5,800.0 v12" stroke="#101010" stroke-width="2.5"/></g><g filter="url(#sh)"><path d="M667.0,1083.0 l14,14 l-14,14 l-14,-14 Z" fill="#60e8e8" stroke="#2a6a6a" stroke-width="2.5"/><path d="M661.0,1097.0 h12 M667.0,1091.0 v12" stroke="#101010" stroke-width="2.5"/></g><g filter="url(#sh)"><path d="M872.3,1369.0 l14,14 l-14,14 l-14,-14 Z" fill="#e8a8e8" stroke="#5a2a5a" stroke-width="2.5"/><path d="M866.3,1383.0 h12 M872.3,1377.0 v12" stroke="#101010" stroke-width="2.5"/></g><g filter="url(#sh)"><path d="M1560.7,1079.4 l14,14 l-14,14 l-14,-14 Z" fill="#e87080" stroke="#8a3040" stroke-width="2.5"/><path d="M1554.7,1093.4 h12 M1560.7,1087.4 v12" stroke="#ffffff" stroke-width="2.5"/></g><g filter="url(#sh)"><path d="M504.0,1521.5 l14,14 l-14,14 l-14,-14 Z" fill="#8088f0" stroke="#3a3a8a" stroke-width="2.5"/><path d="M498.0,1535.5 h12 M504.0,1529.5 v12" stroke="#ffffff" stroke-width="2.5"/></g><g filter="url(#sh)"><circle cx="609.0" cy="447.5" r="15.0" fill="#18d018"/><circle cx="609.0" cy="447.5" r="13.5" fill="none" stroke="#0a6a0a" stroke-width="3.5" opacity="0.85"/><circle cx="610.0" cy="445.5" r="11.2" fill="url(#hl)"/><ellipse cx="609.0" cy="449.0" rx="1.5" ry="2.4" fill="#102010"/></g><g filter="url(#sh)"><circle cx="1106.9" cy="763.5" r="15.0" fill="#e8e898"/><circle cx="1106.9" cy="763.5" r="13.5" fill="none" stroke="#7a7a50" stroke-width="3.5" opacity="0.85"/><circle cx="1107.9" cy="761.5" r="11.2" fill="url(#hl)"/><ellipse cx="1106.9" cy="765.0" rx="1.5" ry="2.4" fill="#102010"/></g><g filter="url(#sh)"><circle cx="538.4" cy="1110.3" r="15.0" fill="#a8e0e0"/><circle cx="538.4" cy="1110.3" r="13.5" fill="none" stroke="#4a7a7a" stroke-width="3.5" opacity="0.85"/><circle cx="539.4" cy="1108.3" r="11.2" fill="url(#hl)"/><ellipse cx="538.4" cy="1111.8" rx="1.5" ry="2.4" fill="#102010"/></g><g filter="url(#sh)"><circle cx="935.2" cy="1388.0" r="15.0" fill="#d010d8"/><circle cx="935.2" cy="1388.0" r="13.5" fill="none" stroke="#70106a" stroke-width="3.5" opacity="0.85"/><circle cx="936.2" cy="1386.0" r="11.2" fill="url(#hl)"/><ellipse cx="935.2" cy="1389.5" rx="1.5" ry="2.4" fill="#102010"/></g><g filter="url(#sh)"><circle cx="1643.7" cy="1109.7" r="13.0" fill="#e82418"/><circle cx="1643.7" cy="1109.7" r="11.5" fill="none" stroke="#901010" stroke-width="3.5" opacity="0.85"/><circle cx="1644.7" cy="1107.7" r="9.8" fill="url(#hl)"/></g><g filter="url(#sh)"><circle cx="494.2" cy="1559.3" r="14.0" fill="#2a38e8"/><circle cx="494.2" cy="1559.3" r="12.5" fill="none" stroke="#2a30c0" stroke-width="3.5" opacity="0.85"/><circle cx="495.2" cy="1557.3" r="10.5" fill="url(#hl)"/></g>
  <g font-size="33" fill="#262626"><text x="830.5" y="1055.0" textLength="66.5" lengthAdjust="spacingAndGlyphs">5500</text><text x="779.0" y="1098.0" textLength="59.0" lengthAdjust="spacingAndGlyphs">D65</text><text x="727.0" y="1137.0" textLength="67.0" lengthAdjust="spacingAndGlyphs">9300</text><text x="862.0" y="1157.0" textLength="19.0" lengthAdjust="spacingAndGlyphs">C</text><text x="945.0" y="1099.6" textLength="19.0" lengthAdjust="spacingAndGlyphs">B</text><text x="934.0" y="995.0" textLength="69.0" lengthAdjust="spacingAndGlyphs">4000</text><text x="1066.0" y="950.0" textLength="69.0" lengthAdjust="spacingAndGlyphs">3000</text><text x="1173.0" y="939.6" textLength="69.4" lengthAdjust="spacingAndGlyphs">2700</text><text x="1143.8" y="1006.5" textLength="24.0" lengthAdjust="spacingAndGlyphs">A</text></g>
  <text x="1550.3" y="1567" font-size="40.5" font-weight="bold" fill="#46433f" style="font-family:'Liberation Sans'" textLength="388" lengthAdjust="spacingAndGlyphs">hcfr.sourceforge.net</text>
  <!-- tabs -->
  <rect x="19" y="1728.5" width="1948" height="47.5" fill="#f0f0f0"/>
  <path d="M19,1729.5 H1064 M1281,1729.5 H1966.5" stroke="#101010" stroke-width="2.2"/>
  <path d="M1064,1728.5 L1084,1775 H1260 L1281,1728.5 Z" fill="#ffffff"/>
  <path d="M19,1773.5 H1966.5" stroke="#e6e6ec" stroke-width="3"/>
  <g stroke="#101010" stroke-width="2.2" fill="none">
    <path d="M155,1729.5 L175,1775"/>
    <path d="M315,1729.5 L335,1775 M325,1752 L315,1775"/>
    <path d="M486,1729.5 L506,1775 M496,1752 L486,1775"/>
    <path d="M615,1729.5 L635,1775 M625,1752 L615,1775"/>
    <path d="M800,1729.5 L820,1775 M810,1752 L800,1775"/>
    <path d="M1064,1729.5 L1084,1775 M1074,1752 L1064,1775"/>
    <path d="M1281,1729.5 L1260,1775"/>
  </g>
  <!-- nav buttons -->
  <rect x="19" y="1729" width="134" height="47" fill="#101010"/>
  <rect x="21" y="1731" width="39.5" height="42" fill="#f2f2f0"/>
  <rect x="63" y="1731" width="40.5" height="42" fill="#f2f2f0"/>
  <rect x="105.5" y="1731" width="45.5" height="42" fill="#f2f2f0"/>
  <path d="M21,1772 H60.5 V1731 M63,1772 H103.5 V1731 M105.5,1772 H151 V1731" stroke="#9a9a9a" stroke-width="3" fill="none"/>
  <path d="M22,1772 V1732 H60 M64,1772 V1732 H103 M106.5,1772 V1732 H150.5" stroke="#ffffff" stroke-width="2" fill="none"/>
  <path d="M33.5,1743.5 L51.5,1759.5 M51.5,1743.5 L33.5,1759.5" stroke="#101010" stroke-width="4"/>
  <path d="M88.5,1742.5 L79,1751.5 L88.5,1760.5 Z" fill="#101010"/>
  <path d="M122.5,1742.5 L132,1751.5 L122.5,1760.5 Z" fill="#101010"/>
  <g font-size="24" fill="#202830" stroke="#202830" stroke-width="0.45" style="font-family:'Liberation Sans'">
    <text x="194" y="1761" textLength="104" lengthAdjust="spacingAndGlyphs" style="font-family:'Liberation Sans'">Measures</text>
    <text x="352" y="1761" textLength="113" lengthAdjust="spacingAndGlyphs" style="font-family:'Liberation Sans'">Luminance</text>
    <text x="518" y="1761" textLength="83" lengthAdjust="spacingAndGlyphs" style="font-family:'Liberation Sans'">Gamma</text>
    <text x="658" y="1761" textLength="122" lengthAdjust="spacingAndGlyphs" style="font-family:'Liberation Sans'">RGB Levels</text>
    <text x="849" y="1761" textLength="185" lengthAdjust="spacingAndGlyphs" style="font-family:'Liberation Sans'">Color temperature</text>
    <text x="1094" y="1761" textLength="157" font-weight="bold" fill="#101820" lengthAdjust="spacingAndGlyphs" style="font-family:'Liberation Sans'">CIE Diagram</text>
  </g>
  <!-- small icon -->
  <path d="M1410,1738 h35 v28 l-4,6 h-8 l-3,-4 l-3,4 h-8 l-5,-6 z" fill="#6e6e18" stroke="#1a1a08" stroke-width="1.5"/>
  <rect x="1416" y="1743" width="16" height="13" fill="#e01010" stroke="#f0c0c0" stroke-width="1.5"/>
  <path d="M1429,1761 h12 l-2,8 h-8 z" fill="#f0f000"/>
  <!-- checkbox -->
  <rect x="1722" y="1738" width="30" height="29.5" fill="#ffffff"/>
  <path d="M1723.5,1767 V1739.5 H1752" stroke="#858585" stroke-width="3" fill="none"/>
  <path d="M1726,1742 V1765 M1726,1742 H1750" stroke="#d0d0d0" stroke-width="1.5" fill="none"/>
  <path d="M1723,1767 H1752 V1739" stroke="#f4f4f4" stroke-width="2" fill="none"/>
  <text x="1769.5" y="1765" font-size="34.5" font-weight="bold" fill="#0a0a0a" style="font-family:'Liberation Sans'" textLength="164" lengthAdjust="spacingAndGlyphs">Reference</text>
</svg>
</div>
<script>
(function(){
  var cv=document.getElementById('cv'); var ctx=cv.getContext('2d');
  var x0=180,y0=250,w=1580,h=1380;
  var GP=2.9;
  function gam(v){ return Math.pow(v,1/GP); }
  function mk(k2){
    var c=document.createElement('canvas'); c.width=w; c.height=h;
    var c2=document.createElement('canvas'); c2.width=w; c2.height=h;
    var cx=c.getContext('2d'); var id=cx.createImageData(w,h); var d=id.data;
    var cx2=c2.getContext('2d'); var id2=cx2.createImageData(w,h); var d2=id2.data;
    var ig=1/GP;
    for(var j=0;j<h;j++){
      var y=(1637.6-(y0+j+0.5))/1639.6; if(y<0.002) y=0.002;
      for(var i=0;i<w;i++){
        var x=((x0+i+0.5)-184.5)/2155.7;
        var X=x/y, Z=(1-x-y)/y;
        var r=3.2406*X-1.5372-0.4986*Z, g=-0.9689*X+1.8758+0.0415*Z, b=0.0557*X-0.2040+1.0570*Z;
        var mn=Math.min(r,g,b); if(mn<0){r-=mn;g-=mn;b-=mn;}
        var m=Math.max(r,g,b); if(m<=0)m=1;
        var R=255*Math.pow(r/m,ig), G=255*Math.pow(g/m,ig), B=255*Math.pow(b/m,ig);
        var p=(j*w+i)*4;
        d[p]=R; d[p+1]=G; d[p+2]=B; d[p+3]=255;
        d2[p]=R*k2; d2[p+1]=G*k2; d2[p+2]=B*k2; d2[p+3]=255;
      }
    }
    cx.putImageData(id,0,0); cx2.putImageData(id2,0,0); return [c,c2];
  }
  var both=mk(0.78); var bright=both[0], dim=both[1];
  var locus=new Path2D("M561.6,1601.5 C555.8,1603.5 537.4,1613.9 527.0,1613.6 C516.6,1613.3 507.3,1607.3 499.0,1599.5 C490.7,1591.7 485.0,1578.2 477.0,1567.0 C469.0,1555.8 464.1,1553.8 451.0,1532.0 C437.9,1510.2 410.3,1458.5 398.6,1436.5 C386.9,1414.5 388.1,1414.8 381.0,1400.0 C373.9,1385.2 362.7,1362.9 356.0,1348.0 C349.3,1333.1 349.0,1331.7 340.6,1310.4 C332.2,1289.1 316.0,1247.4 305.8,1220.0 C295.6,1192.6 287.8,1171.5 279.4,1146.0 C271.0,1120.5 263.6,1094.5 255.7,1067.0 C247.8,1039.5 238.7,1008.8 232.0,981.0 C225.3,953.2 220.5,927.3 215.4,900.0 C210.3,872.7 204.6,843.7 201.5,817.0 C198.4,790.3 198.3,764.5 196.8,740.0 C195.3,715.5 193.3,690.0 192.5,670.0 C191.7,650.0 191.9,638.3 192.0,620.0 C192.1,601.7 192.3,581.4 193.0,560.0 C193.7,538.6 194.6,511.8 196.0,491.8 C197.4,471.8 198.9,458.4 201.7,440.0 C204.5,421.6 206.7,399.7 212.6,381.3 C218.5,362.9 228.8,342.7 237.0,329.6 C245.2,316.5 252.0,310.6 261.5,302.5 C271.0,294.4 283.6,286.6 294.0,280.7 C304.4,274.8 313.6,270.7 324.0,267.2 C334.4,263.7 344.8,260.9 356.6,259.6 C368.4,258.3 378.8,257.6 394.6,259.6 C410.5,261.6 428.6,263.5 451.7,271.5 C474.8,279.5 505.8,294.4 533.0,307.5 C560.2,320.6 583.5,331.6 614.7,350.0 C645.9,368.4 685.1,394.7 720.0,418.0 C754.9,441.3 776.5,456.0 824.0,490.0 C871.5,524.0 968.2,594.9 1005.0,622.0 C1041.8,649.1 1010.2,626.9 1045.0,652.8 C1079.8,678.7 1177.7,750.0 1213.8,777.3 C1249.9,804.5 1237.3,797.6 1261.6,816.3 C1285.9,834.9 1320.8,859.9 1359.7,889.2 C1398.6,918.5 1472.5,974.9 1495.0,992.0 L1691.5,1143.7 L1743.0,1185.0 Z");
  var tri=new Path2D("M609.0,447.5 L1643.5,1109.5 L494.5,1559.0 Z");
  var grid=new Path2D("M184.6,81V1720M399.8,81V1720M614.2,81V1720M829.7,81V1720M1047.9,81V1720M1263.5,81V1720M1478.3,81V1720M1693.2,81V1720M23,162.3H1962M23,327.1H1962M23,492.2H1962M23,654.5H1962M23,819.4H1962M23,983.2H1962M23,1146.5H1962M23,1311.6H1962M23,1473.9H1962");
  ctx.save(); ctx.clip(locus); ctx.drawImage(dim,x0,y0);
  ctx.strokeStyle="rgba(16,20,28,0.48)"; ctx.lineWidth=2.4; ctx.stroke(grid);
  ctx.restore();
  ctx.save(); ctx.clip(tri); ctx.drawImage(bright,x0,y0);
  var hc=document.createElement('canvas'); hc.width=600; hc.height=800; var hx=hc.getContext('2d');
  hx.save(); hx.translate(300,400); hx.scale(1,1.22);
  var rg=hx.createRadialGradient(0,0,0,0,0,230);
  rg.addColorStop(0,'rgba(255,255,255,0.6)'); rg.addColorStop(0.8,'rgba(255,255,255,0.52)'); rg.addColorStop(0.93,'rgba(255,255,255,0.25)'); rg.addColorStop(1,'rgba(255,255,255,0)');
  hx.fillStyle=rg; hx.fillRect(-300,-400,600,800); hx.restore();
  hx.globalCompositeOperation='destination-in';
  var lg=hx.createLinearGradient(240,0,520,0); lg.addColorStop(0,'rgba(0,0,0,1)'); lg.addColorStop(1,'rgba(0,0,0,0.3)');
  hx.fillStyle=lg; hx.fillRect(0,0,600,800);
  ctx.drawImage(hc,837-300,1138-400);
  ctx.restore();
})();
</script>
</body></html>
